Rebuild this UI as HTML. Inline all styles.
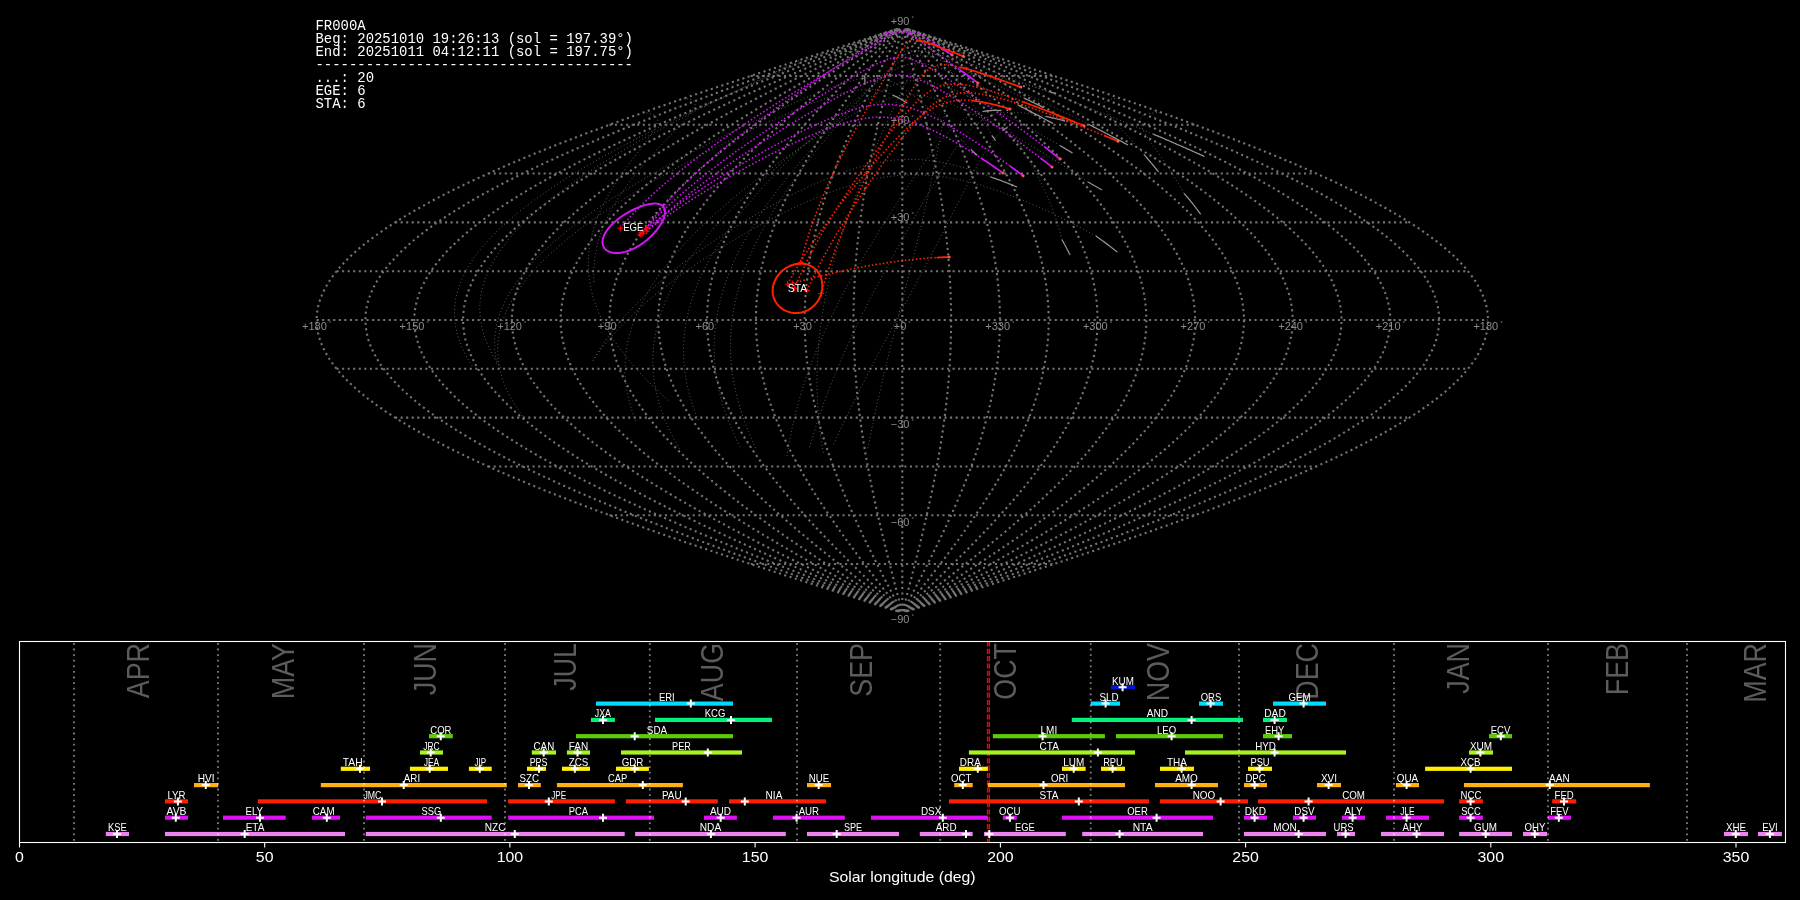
<!DOCTYPE html>
<html><head><meta charset="utf-8"><style>
html,body{margin:0;padding:0;background:#000;width:1800px;height:900px;overflow:hidden}
svg{display:block;will-change:transform}
</style></head><body>
<svg width="1800" height="900" viewBox="0 0 1800 900">
<rect width="1800" height="900" fill="#000"/>
<path d="M907.4 611.2 912.5 609.6 922.7 606.4 933.0 603.1 943.2 599.8 953.3 596.6 963.5 593.3 983.8 586.8 1004.0 580.3 1024.1 573.8 1044.0 567.3 1063.7 560.8 1083.3 554.3 1102.6 547.8 1121.7 541.3 1140.5 534.8 1159.1 528.3 1177.3 521.7 1195.2 515.2 1212.7 508.7 1229.8 502.2 1246.6 495.7 1262.9 489.2 1278.8 482.7 1294.2 476.2 1309.2 469.7 1323.6 463.2 1337.6 456.7 1351.0 450.2 1363.9 443.7 1376.2 437.1 1387.9 430.6 1399.0 424.1 1409.5 417.6 1419.5 411.1 1428.7 404.6 1437.4 398.1 1445.4 391.6 1452.7 385.1 1459.4 378.6 1465.3 372.1 1470.6 365.6 1475.2 359.0 1479.1 352.5 1482.3 346.0 1484.8 339.5 1486.6 333.0 1487.7 326.5 1488.0 320.0 1487.7 313.5 1486.6 307.0 1484.8 300.5 1482.3 294.0 1479.1 287.5 1475.2 281.0 1470.6 274.4 1465.3 267.9 1459.4 261.4 1452.7 254.9 1445.4 248.4 1437.4 241.9 1428.7 235.4 1419.5 228.9 1409.5 222.4 1399.0 215.9 1387.9 209.4 1376.2 202.9 1363.9 196.3 1351.0 189.8 1337.6 183.3 1323.6 176.8 1309.2 170.3 1294.2 163.8 1278.8 157.3 1262.9 150.8 1246.6 144.3 1229.8 137.8 1212.7 131.3 1195.2 124.8 1177.3 118.3 1159.1 111.7 1140.5 105.2 1121.7 98.7 1102.6 92.2 1083.3 85.7 1063.7 79.2 1044.0 72.7 1024.1 66.2 1004.0 59.7 983.8 53.2 963.5 46.7 953.3 43.4 943.2 40.2 933.0 36.9 922.7 33.6 912.5 30.4 907.4 28.8 M907.0 611.2 911.7 609.6 921.0 606.4 930.4 603.1 939.8 599.8 949.1 596.6 958.4 593.3 977.0 586.8 995.5 580.3 1013.9 573.8 1032.2 567.3 1050.3 560.8 1068.2 554.3 1085.9 547.8 1103.4 541.3 1120.7 534.8 1137.7 528.3 1154.4 521.7 1170.8 515.2 1186.8 508.7 1202.5 502.2 1217.9 495.7 1232.9 489.2 1247.4 482.7 1261.6 476.2 1275.3 469.7 1288.5 463.2 1301.3 456.7 1313.6 450.2 1325.4 443.7 1336.7 437.1 1347.4 430.6 1357.6 424.1 1367.3 417.6 1376.4 411.1 1384.9 404.6 1392.8 398.1 1400.1 391.6 1406.8 385.1 1412.9 378.6 1418.4 372.1 1423.3 365.6 1427.5 359.0 1431.1 352.5 1434.0 346.0 1436.3 339.5 1437.9 333.0 1438.9 326.5 1439.2 320.0 1438.9 313.5 1437.9 307.0 1436.3 300.5 1434.0 294.0 1431.1 287.5 1427.5 281.0 1423.3 274.4 1418.4 267.9 1412.9 261.4 1406.8 254.9 1400.1 248.4 1392.8 241.9 1384.9 235.4 1376.4 228.9 1367.3 222.4 1357.6 215.9 1347.4 209.4 1336.7 202.9 1325.4 196.3 1313.6 189.8 1301.3 183.3 1288.5 176.8 1275.3 170.3 1261.6 163.8 1247.4 157.3 1232.9 150.8 1217.9 144.3 1202.5 137.8 1186.8 131.3 1170.8 124.8 1154.4 118.3 1137.7 111.7 1120.7 105.2 1103.4 98.7 1085.9 92.2 1068.2 85.7 1050.3 79.2 1032.2 72.7 1013.9 66.2 995.5 59.7 977.0 53.2 958.4 46.7 949.1 43.4 939.8 40.2 930.4 36.9 921.0 33.6 911.7 30.4 907.0 28.8 M906.6 611.2 910.8 609.6 919.3 606.4 927.8 603.1 936.3 599.8 944.8 596.6 953.3 593.3 970.2 586.8 987.1 580.3 1003.8 573.8 1020.4 567.3 1036.8 560.8 1053.1 554.3 1069.2 547.8 1085.1 541.3 1100.8 534.8 1116.3 528.3 1131.4 521.7 1146.3 515.2 1161.0 508.7 1175.2 502.2 1189.2 495.7 1202.8 489.2 1216.0 482.7 1228.9 476.2 1241.4 469.7 1253.4 463.2 1265.0 456.7 1276.2 450.2 1286.9 443.7 1297.2 437.1 1307.0 430.6 1316.2 424.1 1325.0 417.6 1333.3 411.1 1341.0 404.6 1348.2 398.1 1354.9 391.6 1361.0 385.1 1366.5 378.6 1371.5 372.1 1375.9 365.6 1379.7 359.0 1383.0 352.5 1385.6 346.0 1387.7 339.5 1389.2 333.0 1390.1 326.5 1390.4 320.0 1390.1 313.5 1389.2 307.0 1387.7 300.5 1385.6 294.0 1383.0 287.5 1379.7 281.0 1375.9 274.4 1371.5 267.9 1366.5 261.4 1361.0 254.9 1354.9 248.4 1348.2 241.9 1341.0 235.4 1333.3 228.9 1325.0 222.4 1316.2 215.9 1307.0 209.4 1297.2 202.9 1286.9 196.3 1276.2 189.8 1265.0 183.3 1253.4 176.8 1241.4 170.3 1228.9 163.8 1216.0 157.3 1202.8 150.8 1189.2 144.3 1175.2 137.8 1161.0 131.3 1146.3 124.8 1131.4 118.3 1116.3 111.7 1100.8 105.2 1085.1 98.7 1069.2 92.2 1053.1 85.7 1036.8 79.2 1020.4 72.7 1003.8 66.2 987.1 59.7 970.2 53.2 953.3 46.7 944.8 43.4 936.3 40.2 927.8 36.9 919.3 33.6 910.8 30.4 906.6 28.8 M906.1 611.2 910.0 609.6 917.6 606.4 925.3 603.1 932.9 599.8 940.6 596.6 948.2 593.3 963.4 586.8 978.6 580.3 993.6 573.8 1008.6 567.3 1023.4 560.8 1038.0 554.3 1052.5 547.8 1066.9 541.3 1081.0 534.8 1094.9 528.3 1108.5 521.7 1121.9 515.2 1135.1 508.7 1147.9 502.2 1160.5 495.7 1172.8 489.2 1184.7 482.7 1196.2 476.2 1207.5 469.7 1218.3 463.2 1228.8 456.7 1238.8 450.2 1248.5 443.7 1257.7 437.1 1266.5 430.6 1274.8 424.1 1282.7 417.6 1290.2 411.1 1297.1 404.6 1303.6 398.1 1309.6 391.6 1315.1 385.1 1320.1 378.6 1324.6 372.1 1328.5 365.6 1332.0 359.0 1334.9 352.5 1337.3 346.0 1339.2 339.5 1340.5 333.0 1341.3 326.5 1341.6 320.0 1341.3 313.5 1340.5 307.0 1339.2 300.5 1337.3 294.0 1334.9 287.5 1332.0 281.0 1328.5 274.4 1324.6 267.9 1320.1 261.4 1315.1 254.9 1309.6 248.4 1303.6 241.9 1297.1 235.4 1290.2 228.9 1282.7 222.4 1274.8 215.9 1266.5 209.4 1257.7 202.9 1248.5 196.3 1238.8 189.8 1228.8 183.3 1218.3 176.8 1207.5 170.3 1196.2 163.8 1184.7 157.3 1172.8 150.8 1160.5 144.3 1147.9 137.8 1135.1 131.3 1121.9 124.8 1108.5 118.3 1094.9 111.7 1081.0 105.2 1066.9 98.7 1052.5 92.2 1038.0 85.7 1023.4 79.2 1008.6 72.7 993.6 66.2 978.6 59.7 963.4 53.2 948.2 46.7 940.6 43.4 932.9 40.2 925.3 36.9 917.6 33.6 910.0 30.4 906.1 28.8 M905.7 611.2 909.1 609.6 915.9 606.4 922.7 603.1 929.5 599.8 936.3 596.6 943.1 593.3 956.6 586.8 970.1 580.3 983.5 573.8 996.8 567.3 1009.9 560.8 1023.0 554.3 1035.9 547.8 1048.6 541.3 1061.1 534.8 1073.5 528.3 1085.6 521.7 1097.5 515.2 1109.2 508.7 1120.7 502.2 1131.8 495.7 1142.7 489.2 1153.3 482.7 1163.6 476.2 1173.6 469.7 1183.2 463.2 1192.5 456.7 1201.4 450.2 1210.0 443.7 1218.2 437.1 1226.0 430.6 1233.4 424.1 1240.5 417.6 1247.1 411.1 1253.3 404.6 1259.0 398.1 1264.3 391.6 1269.2 385.1 1273.7 378.6 1277.7 372.1 1281.2 365.6 1284.2 359.0 1286.8 352.5 1289.0 346.0 1290.6 339.5 1291.8 333.0 1292.5 326.5 1292.8 320.0 1292.5 313.5 1291.8 307.0 1290.6 300.5 1289.0 294.0 1286.8 287.5 1284.2 281.0 1281.2 274.4 1277.7 267.9 1273.7 261.4 1269.2 254.9 1264.3 248.4 1259.0 241.9 1253.3 235.4 1247.1 228.9 1240.5 222.4 1233.4 215.9 1226.0 209.4 1218.2 202.9 1210.0 196.3 1201.4 189.8 1192.5 183.3 1183.2 176.8 1173.6 170.3 1163.6 163.8 1153.3 157.3 1142.7 150.8 1131.8 144.3 1120.7 137.8 1109.2 131.3 1097.5 124.8 1085.6 118.3 1073.5 111.7 1061.1 105.2 1048.6 98.7 1035.9 92.2 1023.0 85.7 1009.9 79.2 996.8 72.7 983.5 66.2 970.1 59.7 956.6 53.2 943.1 46.7 936.3 43.4 929.5 40.2 922.7 36.9 915.9 33.6 909.1 30.4 905.7 28.8 M905.3 611.2 908.3 609.6 914.2 606.4 920.2 603.1 926.1 599.8 932.1 596.6 938.0 593.3 949.9 586.8 961.6 580.3 973.3 573.8 985.0 567.3 996.5 560.8 1007.9 554.3 1019.2 547.8 1030.3 541.3 1041.3 534.8 1052.1 528.3 1062.7 521.7 1073.1 515.2 1083.4 508.7 1093.4 502.2 1103.1 495.7 1112.7 489.2 1121.9 482.7 1130.9 476.2 1139.6 469.7 1148.1 463.2 1156.2 456.7 1164.0 450.2 1171.5 443.7 1178.7 437.1 1185.6 430.6 1192.1 424.1 1198.2 417.6 1204.0 411.1 1209.4 404.6 1214.4 398.1 1219.1 391.6 1223.4 385.1 1227.2 378.6 1230.7 372.1 1233.8 365.6 1236.5 359.0 1238.8 352.5 1240.6 346.0 1242.1 339.5 1243.1 333.0 1243.8 326.5 1244.0 320.0 1243.8 313.5 1243.1 307.0 1242.1 300.5 1240.6 294.0 1238.8 287.5 1236.5 281.0 1233.8 274.4 1230.7 267.9 1227.2 261.4 1223.4 254.9 1219.1 248.4 1214.4 241.9 1209.4 235.4 1204.0 228.9 1198.2 222.4 1192.1 215.9 1185.6 209.4 1178.7 202.9 1171.5 196.3 1164.0 189.8 1156.2 183.3 1148.1 176.8 1139.6 170.3 1130.9 163.8 1121.9 157.3 1112.7 150.8 1103.1 144.3 1093.4 137.8 1083.4 131.3 1073.1 124.8 1062.7 118.3 1052.1 111.7 1041.3 105.2 1030.3 98.7 1019.2 92.2 1007.9 85.7 996.5 79.2 985.0 72.7 973.3 66.2 961.6 59.7 949.9 53.2 938.0 46.7 932.1 43.4 926.1 40.2 920.2 36.9 914.2 33.6 908.3 30.4 905.3 28.8 M904.9 611.2 907.4 609.6 912.5 606.4 917.6 603.1 922.7 599.8 927.8 596.6 932.9 593.3 943.1 586.8 953.2 580.3 963.2 573.8 973.1 567.3 983.0 560.8 992.8 554.3 1002.5 547.8 1012.0 541.3 1021.4 534.8 1030.7 528.3 1039.8 521.7 1048.7 515.2 1057.5 508.7 1066.1 502.2 1074.4 495.7 1082.6 489.2 1090.5 482.7 1098.3 476.2 1105.7 469.7 1113.0 463.2 1119.9 456.7 1126.6 450.2 1133.1 443.7 1139.2 437.1 1145.1 430.6 1150.7 424.1 1155.9 417.6 1160.9 411.1 1165.5 404.6 1169.8 398.1 1173.8 391.6 1177.5 385.1 1180.8 378.6 1183.8 372.1 1186.5 365.6 1188.8 359.0 1190.7 352.5 1192.3 346.0 1193.6 339.5 1194.4 333.0 1195.0 326.5 1195.2 320.0 1195.0 313.5 1194.4 307.0 1193.6 300.5 1192.3 294.0 1190.7 287.5 1188.8 281.0 1186.5 274.4 1183.8 267.9 1180.8 261.4 1177.5 254.9 1173.8 248.4 1169.8 241.9 1165.5 235.4 1160.9 228.9 1155.9 222.4 1150.7 215.9 1145.1 209.4 1139.2 202.9 1133.1 196.3 1126.6 189.8 1119.9 183.3 1113.0 176.8 1105.7 170.3 1098.3 163.8 1090.5 157.3 1082.6 150.8 1074.4 144.3 1066.1 137.8 1057.5 131.3 1048.7 124.8 1039.8 118.3 1030.7 111.7 1021.4 105.2 1012.0 98.7 1002.5 92.2 992.8 85.7 983.0 79.2 973.1 72.7 963.2 66.2 953.2 59.7 943.1 53.2 932.9 46.7 927.8 43.4 922.7 40.2 917.6 36.9 912.5 33.6 907.4 30.4 904.9 28.8 M904.4 611.2 906.6 609.6 910.8 606.4 915.1 603.1 919.3 599.8 923.6 596.6 927.8 593.3 936.3 586.8 944.7 580.3 953.0 573.8 961.3 567.3 969.6 560.8 977.7 554.3 985.8 547.8 993.7 541.3 1001.6 534.8 1009.3 528.3 1016.9 521.7 1024.3 515.2 1031.6 508.7 1038.8 502.2 1045.7 495.7 1052.6 489.2 1059.2 482.7 1065.6 476.2 1071.8 469.7 1077.9 463.2 1083.7 456.7 1089.3 450.2 1094.6 443.7 1099.7 437.1 1104.6 430.6 1109.3 424.1 1113.7 417.6 1117.8 411.1 1121.7 404.6 1125.3 398.1 1128.6 391.6 1131.6 385.1 1134.4 378.6 1136.9 372.1 1139.1 365.6 1141.0 359.0 1142.6 352.5 1144.0 346.0 1145.0 339.5 1145.8 333.0 1146.2 326.5 1146.3 320.0 1146.2 313.5 1145.8 307.0 1145.0 300.5 1144.0 294.0 1142.6 287.5 1141.0 281.0 1139.1 274.4 1136.9 267.9 1134.4 261.4 1131.6 254.9 1128.6 248.4 1125.3 241.9 1121.7 235.4 1117.8 228.9 1113.7 222.4 1109.3 215.9 1104.6 209.4 1099.7 202.9 1094.6 196.3 1089.3 189.8 1083.7 183.3 1077.9 176.8 1071.8 170.3 1065.6 163.8 1059.2 157.3 1052.6 150.8 1045.7 144.3 1038.8 137.8 1031.6 131.3 1024.3 124.8 1016.9 118.3 1009.3 111.7 1001.6 105.2 993.7 98.7 985.8 92.2 977.7 85.7 969.6 79.2 961.3 72.7 953.0 66.2 944.7 59.7 936.3 53.2 927.8 46.7 923.6 43.4 919.3 40.2 915.1 36.9 910.8 33.6 906.6 30.4 904.4 28.8 M904.0 611.2 905.7 609.6 909.1 606.4 912.5 603.1 915.9 599.8 919.3 596.6 922.7 593.3 929.5 586.8 936.2 580.3 942.9 573.8 949.5 567.3 956.1 560.8 962.6 554.3 969.1 547.8 975.4 541.3 981.7 534.8 987.9 528.3 994.0 521.7 999.9 515.2 1005.8 508.7 1011.5 502.2 1017.1 495.7 1022.5 489.2 1027.8 482.7 1032.9 476.2 1037.9 469.7 1042.7 463.2 1047.4 456.7 1051.9 450.2 1056.2 443.7 1060.3 437.1 1064.2 430.6 1067.9 424.1 1071.4 417.6 1074.7 411.1 1077.8 404.6 1080.7 398.1 1083.3 391.6 1085.8 385.1 1088.0 378.6 1090.0 372.1 1091.7 365.6 1093.3 359.0 1094.6 352.5 1095.6 346.0 1096.5 339.5 1097.1 333.0 1097.4 326.5 1097.5 320.0 1097.4 313.5 1097.1 307.0 1096.5 300.5 1095.6 294.0 1094.6 287.5 1093.3 281.0 1091.7 274.4 1090.0 267.9 1088.0 261.4 1085.8 254.9 1083.3 248.4 1080.7 241.9 1077.8 235.4 1074.7 228.9 1071.4 222.4 1067.9 215.9 1064.2 209.4 1060.3 202.9 1056.2 196.3 1051.9 189.8 1047.4 183.3 1042.7 176.8 1037.9 170.3 1032.9 163.8 1027.8 157.3 1022.5 150.8 1017.1 144.3 1011.5 137.8 1005.8 131.3 999.9 124.8 994.0 118.3 987.9 111.7 981.7 105.2 975.4 98.7 969.1 92.2 962.6 85.7 956.1 79.2 949.5 72.7 942.9 66.2 936.2 59.7 929.5 53.2 922.7 46.7 919.3 43.4 915.9 40.2 912.5 36.9 909.1 33.6 905.7 30.4 904.0 28.8 M903.6 611.2 904.9 609.6 907.4 606.4 910.0 603.1 912.5 599.8 915.1 596.6 917.6 593.3 922.7 586.8 927.7 580.3 932.7 573.8 937.7 567.3 942.7 560.8 947.5 554.3 952.4 547.8 957.2 541.3 961.9 534.8 966.5 528.3 971.0 521.7 975.5 515.2 979.9 508.7 984.2 502.2 988.4 495.7 992.5 489.2 996.4 482.7 1000.3 476.2 1004.0 469.7 1007.6 463.2 1011.1 456.7 1014.5 450.2 1017.7 443.7 1020.8 437.1 1023.7 430.6 1026.5 424.1 1029.1 417.6 1031.6 411.1 1033.9 404.6 1036.1 398.1 1038.1 391.6 1039.9 385.1 1041.6 378.6 1043.1 372.1 1044.4 365.6 1045.5 359.0 1046.5 352.5 1047.3 346.0 1047.9 339.5 1048.4 333.0 1048.6 326.5 1048.7 320.0 1048.6 313.5 1048.4 307.0 1047.9 300.5 1047.3 294.0 1046.5 287.5 1045.5 281.0 1044.4 274.4 1043.1 267.9 1041.6 261.4 1039.9 254.9 1038.1 248.4 1036.1 241.9 1033.9 235.4 1031.6 228.9 1029.1 222.4 1026.5 215.9 1023.7 209.4 1020.8 202.9 1017.7 196.3 1014.5 189.8 1011.1 183.3 1007.6 176.8 1004.0 170.3 1000.3 163.8 996.4 157.3 992.5 150.8 988.4 144.3 984.2 137.8 979.9 131.3 975.5 124.8 971.0 118.3 966.5 111.7 961.9 105.2 957.2 98.7 952.4 92.2 947.5 85.7 942.7 79.2 937.7 72.7 932.7 66.2 927.7 59.7 922.7 53.2 917.6 46.7 915.1 43.4 912.5 40.2 910.0 36.9 907.4 33.6 904.9 30.4 903.6 28.8 M903.2 611.2 904.0 609.6 905.7 606.4 907.4 603.1 909.1 599.8 910.8 596.6 912.5 593.3 915.9 586.8 919.3 580.3 922.6 573.8 925.9 567.3 929.2 560.8 932.5 554.3 935.7 547.8 938.9 541.3 942.0 534.8 945.1 528.3 948.1 521.7 951.1 515.2 954.0 508.7 956.9 502.2 959.7 495.7 962.4 489.2 965.0 482.7 967.6 476.2 970.1 469.7 972.5 463.2 974.8 456.7 977.1 450.2 979.2 443.7 981.3 437.1 983.2 430.6 985.1 424.1 986.8 417.6 988.5 411.1 990.0 404.6 991.5 398.1 992.8 391.6 994.0 385.1 995.1 378.6 996.1 372.1 997.0 365.6 997.8 359.0 998.4 352.5 999.0 346.0 999.4 339.5 999.7 333.0 999.9 326.5 999.9 320.0 999.9 313.5 999.7 307.0 999.4 300.5 999.0 294.0 998.4 287.5 997.8 281.0 997.0 274.4 996.1 267.9 995.1 261.4 994.0 254.9 992.8 248.4 991.5 241.9 990.0 235.4 988.5 228.9 986.8 222.4 985.1 215.9 983.2 209.4 981.3 202.9 979.2 196.3 977.1 189.8 974.8 183.3 972.5 176.8 970.1 170.3 967.6 163.8 965.0 157.3 962.4 150.8 959.7 144.3 956.9 137.8 954.0 131.3 951.1 124.8 948.1 118.3 945.1 111.7 942.0 105.2 938.9 98.7 935.7 92.2 932.5 85.7 929.2 79.2 925.9 72.7 922.6 66.2 919.3 59.7 915.9 53.2 912.5 46.7 910.8 43.4 909.1 40.2 907.4 36.9 905.7 33.6 904.0 30.4 903.2 28.8 M902.7 611.2 903.2 609.6 904.0 606.4 904.9 603.1 905.7 599.8 906.6 596.6 907.4 593.3 909.1 586.8 910.8 580.3 912.4 573.8 914.1 567.3 915.8 560.8 917.4 554.3 919.0 547.8 920.6 541.3 922.2 534.8 923.7 528.3 925.2 521.7 926.7 515.2 928.2 508.7 929.6 502.2 931.0 495.7 932.4 489.2 933.7 482.7 935.0 476.2 936.2 469.7 937.4 463.2 938.6 456.7 939.7 450.2 940.8 443.7 941.8 437.1 942.8 430.6 943.7 424.1 944.6 417.6 945.4 411.1 946.2 404.6 946.9 398.1 947.6 391.6 948.2 385.1 948.7 378.6 949.2 372.1 949.7 365.6 950.0 359.0 950.4 352.5 950.6 346.0 950.8 339.5 951.0 333.0 951.1 326.5 951.1 320.0 951.1 313.5 951.0 307.0 950.8 300.5 950.6 294.0 950.4 287.5 950.0 281.0 949.7 274.4 949.2 267.9 948.7 261.4 948.2 254.9 947.6 248.4 946.9 241.9 946.2 235.4 945.4 228.9 944.6 222.4 943.7 215.9 942.8 209.4 941.8 202.9 940.8 196.3 939.7 189.8 938.6 183.3 937.4 176.8 936.2 170.3 935.0 163.8 933.7 157.3 932.4 150.8 931.0 144.3 929.6 137.8 928.2 131.3 926.7 124.8 925.2 118.3 923.7 111.7 922.2 105.2 920.6 98.7 919.0 92.2 917.4 85.7 915.8 79.2 914.1 72.7 912.4 66.2 910.8 59.7 909.1 53.2 907.4 46.7 906.6 43.4 905.7 40.2 904.9 36.9 904.0 33.6 903.2 30.4 902.7 28.8 M902.3 611.2 902.3 609.6 902.3 606.4 902.3 603.1 902.3 599.8 902.3 596.6 902.3 593.3 902.3 586.8 902.3 580.3 902.3 573.8 902.3 567.3 902.3 560.8 902.3 554.3 902.3 547.8 902.3 541.3 902.3 534.8 902.3 528.3 902.3 521.7 902.3 515.2 902.3 508.7 902.3 502.2 902.3 495.7 902.3 489.2 902.3 482.7 902.3 476.2 902.3 469.7 902.3 463.2 902.3 456.7 902.3 450.2 902.3 443.7 902.3 437.1 902.3 430.6 902.3 424.1 902.3 417.6 902.3 411.1 902.3 404.6 902.3 398.1 902.3 391.6 902.3 385.1 902.3 378.6 902.3 372.1 902.3 365.6 902.3 359.0 902.3 352.5 902.3 346.0 902.3 339.5 902.3 333.0 902.3 326.5 902.3 320.0 902.3 313.5 902.3 307.0 902.3 300.5 902.3 294.0 902.3 287.5 902.3 281.0 902.3 274.4 902.3 267.9 902.3 261.4 902.3 254.9 902.3 248.4 902.3 241.9 902.3 235.4 902.3 228.9 902.3 222.4 902.3 215.9 902.3 209.4 902.3 202.9 902.3 196.3 902.3 189.8 902.3 183.3 902.3 176.8 902.3 170.3 902.3 163.8 902.3 157.3 902.3 150.8 902.3 144.3 902.3 137.8 902.3 131.3 902.3 124.8 902.3 118.3 902.3 111.7 902.3 105.2 902.3 98.7 902.3 92.2 902.3 85.7 902.3 79.2 902.3 72.7 902.3 66.2 902.3 59.7 902.3 53.2 902.3 46.7 902.3 43.4 902.3 40.2 902.3 36.9 902.3 33.6 902.3 30.4 902.3 28.8 M901.9 611.2 901.4 609.6 900.6 606.4 899.7 603.1 898.9 599.8 898.0 596.6 897.2 593.3 895.5 586.8 893.8 580.3 892.2 573.8 890.5 567.3 888.8 560.8 887.2 554.3 885.6 547.8 884.0 541.3 882.4 534.8 880.9 528.3 879.4 521.7 877.9 515.2 876.4 508.7 875.0 502.2 873.6 495.7 872.2 489.2 870.9 482.7 869.6 476.2 868.4 469.7 867.2 463.2 866.0 456.7 864.9 450.2 863.8 443.7 862.8 437.1 861.8 430.6 860.9 424.1 860.0 417.6 859.2 411.1 858.4 404.6 857.7 398.1 857.0 391.6 856.4 385.1 855.9 378.6 855.4 372.1 854.9 365.6 854.6 359.0 854.2 352.5 854.0 346.0 853.8 339.5 853.6 333.0 853.5 326.5 853.5 320.0 853.5 313.5 853.6 307.0 853.8 300.5 854.0 294.0 854.2 287.5 854.6 281.0 854.9 274.4 855.4 267.9 855.9 261.4 856.4 254.9 857.0 248.4 857.7 241.9 858.4 235.4 859.2 228.9 860.0 222.4 860.9 215.9 861.8 209.4 862.8 202.9 863.8 196.3 864.9 189.8 866.0 183.3 867.2 176.8 868.4 170.3 869.6 163.8 870.9 157.3 872.2 150.8 873.6 144.3 875.0 137.8 876.4 131.3 877.9 124.8 879.4 118.3 880.9 111.7 882.4 105.2 884.0 98.7 885.6 92.2 887.2 85.7 888.8 79.2 890.5 72.7 892.2 66.2 893.8 59.7 895.5 53.2 897.2 46.7 898.0 43.4 898.9 40.2 899.7 36.9 900.6 33.6 901.4 30.4 901.9 28.8 M901.4 611.2 900.6 609.6 898.9 606.4 897.2 603.1 895.5 599.8 893.8 596.6 892.1 593.3 888.7 586.8 885.3 580.3 882.0 573.8 878.7 567.3 875.4 560.8 872.1 554.3 868.9 547.8 865.7 541.3 862.6 534.8 859.5 528.3 856.5 521.7 853.5 515.2 850.6 508.7 847.7 502.2 844.9 495.7 842.2 489.2 839.6 482.7 837.0 476.2 834.5 469.7 832.1 463.2 829.8 456.7 827.5 450.2 825.4 443.7 823.3 437.1 821.4 430.6 819.5 424.1 817.8 417.6 816.1 411.1 814.6 404.6 813.1 398.1 811.8 391.6 810.6 385.1 809.5 378.6 808.5 372.1 807.6 365.6 806.8 359.0 806.2 352.5 805.6 346.0 805.2 339.5 804.9 333.0 804.7 326.5 804.7 320.0 804.7 313.5 804.9 307.0 805.2 300.5 805.6 294.0 806.2 287.5 806.8 281.0 807.6 274.4 808.5 267.9 809.5 261.4 810.6 254.9 811.8 248.4 813.1 241.9 814.6 235.4 816.1 228.9 817.8 222.4 819.5 215.9 821.4 209.4 823.3 202.9 825.4 196.3 827.5 189.8 829.8 183.3 832.1 176.8 834.5 170.3 837.0 163.8 839.6 157.3 842.2 150.8 844.9 144.3 847.7 137.8 850.6 131.3 853.5 124.8 856.5 118.3 859.5 111.7 862.6 105.2 865.7 98.7 868.9 92.2 872.1 85.7 875.4 79.2 878.7 72.7 882.0 66.2 885.3 59.7 888.7 53.2 892.1 46.7 893.8 43.4 895.5 40.2 897.2 36.9 898.9 33.6 900.6 30.4 901.4 28.8 M901.0 611.2 899.7 609.6 897.2 606.4 894.6 603.1 892.1 599.8 889.5 596.6 887.0 593.3 881.9 586.8 876.9 580.3 871.9 573.8 866.9 567.3 861.9 560.8 857.1 554.3 852.2 547.8 847.4 541.3 842.7 534.8 838.1 528.3 833.6 521.7 829.1 515.2 824.7 508.7 820.4 502.2 816.2 495.7 812.1 489.2 808.2 482.7 804.3 476.2 800.6 469.7 797.0 463.2 793.5 456.7 790.1 450.2 786.9 443.7 783.8 437.1 780.9 430.6 778.1 424.1 775.5 417.6 773.0 411.1 770.7 404.6 768.5 398.1 766.5 391.6 764.7 385.1 763.0 378.6 761.5 372.1 760.2 365.6 759.1 359.0 758.1 352.5 757.3 346.0 756.7 339.5 756.2 333.0 756.0 326.5 755.9 320.0 756.0 313.5 756.2 307.0 756.7 300.5 757.3 294.0 758.1 287.5 759.1 281.0 760.2 274.4 761.5 267.9 763.0 261.4 764.7 254.9 766.5 248.4 768.5 241.9 770.7 235.4 773.0 228.9 775.5 222.4 778.1 215.9 780.9 209.4 783.8 202.9 786.9 196.3 790.1 189.8 793.5 183.3 797.0 176.8 800.6 170.3 804.3 163.8 808.2 157.3 812.1 150.8 816.2 144.3 820.4 137.8 824.7 131.3 829.1 124.8 833.6 118.3 838.1 111.7 842.7 105.2 847.4 98.7 852.2 92.2 857.1 85.7 861.9 79.2 866.9 72.7 871.9 66.2 876.9 59.7 881.9 53.2 887.0 46.7 889.5 43.4 892.1 40.2 894.6 36.9 897.2 33.6 899.7 30.4 901.0 28.8 M900.6 611.2 898.9 609.6 895.5 606.4 892.1 603.1 888.7 599.8 885.3 596.6 881.9 593.3 875.1 586.8 868.4 580.3 861.7 573.8 855.1 567.3 848.5 560.8 842.0 554.3 835.5 547.8 829.2 541.3 822.9 534.8 816.7 528.3 810.6 521.7 804.7 515.2 798.8 508.7 793.1 502.2 787.5 495.7 782.1 489.2 776.8 482.7 771.7 476.2 766.7 469.7 761.9 463.2 757.2 456.7 752.7 450.2 748.4 443.7 744.3 437.1 740.4 430.6 736.7 424.1 733.2 417.6 729.9 411.1 726.8 404.6 723.9 398.1 721.3 391.6 718.8 385.1 716.6 378.6 714.6 372.1 712.9 365.6 711.3 359.0 710.0 352.5 709.0 346.0 708.1 339.5 707.5 333.0 707.2 326.5 707.1 320.0 707.2 313.5 707.5 307.0 708.1 300.5 709.0 294.0 710.0 287.5 711.3 281.0 712.9 274.4 714.6 267.9 716.6 261.4 718.8 254.9 721.3 248.4 723.9 241.9 726.8 235.4 729.9 228.9 733.2 222.4 736.7 215.9 740.4 209.4 744.3 202.9 748.4 196.3 752.7 189.8 757.2 183.3 761.9 176.8 766.7 170.3 771.7 163.8 776.8 157.3 782.1 150.8 787.5 144.3 793.1 137.8 798.8 131.3 804.7 124.8 810.6 118.3 816.7 111.7 822.9 105.2 829.2 98.7 835.5 92.2 842.0 85.7 848.5 79.2 855.1 72.7 861.7 66.2 868.4 59.7 875.1 53.2 881.9 46.7 885.3 43.4 888.7 40.2 892.1 36.9 895.5 33.6 898.9 30.4 900.6 28.8 M900.2 611.2 898.0 609.6 893.8 606.4 889.5 603.1 885.3 599.8 881.0 596.6 876.8 593.3 868.3 586.8 859.9 580.3 851.6 573.8 843.3 567.3 835.0 560.8 826.9 554.3 818.8 547.8 810.9 541.3 803.0 534.8 795.3 528.3 787.7 521.7 780.3 515.2 773.0 508.7 765.8 502.2 758.9 495.7 752.0 489.2 745.4 482.7 739.0 476.2 732.8 469.7 726.7 463.2 720.9 456.7 715.3 450.2 710.0 443.7 704.9 437.1 700.0 430.6 695.3 424.1 690.9 417.6 686.8 411.1 682.9 404.6 679.3 398.1 676.0 391.6 673.0 385.1 670.2 378.6 667.7 372.1 665.5 365.6 663.6 359.0 662.0 352.5 660.6 346.0 659.6 339.5 658.8 333.0 658.4 326.5 658.2 320.0 658.4 313.5 658.8 307.0 659.6 300.5 660.6 294.0 662.0 287.5 663.6 281.0 665.5 274.4 667.7 267.9 670.2 261.4 673.0 254.9 676.0 248.4 679.3 241.9 682.9 235.4 686.8 228.9 690.9 222.4 695.3 215.9 700.0 209.4 704.9 202.9 710.0 196.3 715.3 189.8 720.9 183.3 726.7 176.8 732.8 170.3 739.0 163.8 745.4 157.3 752.0 150.8 758.9 144.3 765.8 137.8 773.0 131.3 780.3 124.8 787.7 118.3 795.3 111.7 803.0 105.2 810.9 98.7 818.8 92.2 826.9 85.7 835.0 79.2 843.3 72.7 851.6 66.2 859.9 59.7 868.3 53.2 876.8 46.7 881.0 43.4 885.3 40.2 889.5 36.9 893.8 33.6 898.0 30.4 900.2 28.8 M899.7 611.2 897.2 609.6 892.1 606.4 887.0 603.1 881.9 599.8 876.8 596.6 871.7 593.3 861.5 586.8 851.4 580.3 841.4 573.8 831.5 567.3 821.6 560.8 811.8 554.3 802.1 547.8 792.6 541.3 783.2 534.8 773.9 528.3 764.8 521.7 755.9 515.2 747.1 508.7 738.5 502.2 730.2 495.7 722.0 489.2 714.1 482.7 706.3 476.2 698.9 469.7 691.6 463.2 684.7 456.7 678.0 450.2 671.5 443.7 665.4 437.1 659.5 430.6 653.9 424.1 648.7 417.6 643.7 411.1 639.1 404.6 634.8 398.1 630.8 391.6 627.1 385.1 623.8 378.6 620.8 372.1 618.1 365.6 615.8 359.0 613.9 352.5 612.3 346.0 611.0 339.5 610.2 333.0 609.6 326.5 609.4 320.0 609.6 313.5 610.2 307.0 611.0 300.5 612.3 294.0 613.9 287.5 615.8 281.0 618.1 274.4 620.8 267.9 623.8 261.4 627.1 254.9 630.8 248.4 634.8 241.9 639.1 235.4 643.7 228.9 648.7 222.4 653.9 215.9 659.5 209.4 665.4 202.9 671.5 196.3 678.0 189.8 684.7 183.3 691.6 176.8 698.9 170.3 706.3 163.8 714.1 157.3 722.0 150.8 730.2 144.3 738.5 137.8 747.1 131.3 755.9 124.8 764.8 118.3 773.9 111.7 783.2 105.2 792.6 98.7 802.1 92.2 811.8 85.7 821.6 79.2 831.5 72.7 841.4 66.2 851.4 59.7 861.5 53.2 871.7 46.7 876.8 43.4 881.9 40.2 887.0 36.9 892.1 33.6 897.2 30.4 899.7 28.8 M899.3 611.2 896.3 609.6 890.4 606.4 884.4 603.1 878.5 599.8 872.5 596.6 866.6 593.3 854.7 586.8 843.0 580.3 831.3 573.8 819.6 567.3 808.1 560.8 796.7 554.3 785.4 547.8 774.3 541.3 763.3 534.8 752.5 528.3 741.9 521.7 731.5 515.2 721.2 508.7 711.2 502.2 701.5 495.7 691.9 489.2 682.7 482.7 673.7 476.2 665.0 469.7 656.5 463.2 648.4 456.7 640.6 450.2 633.1 443.7 625.9 437.1 619.0 430.6 612.5 424.1 606.4 417.6 600.6 411.1 595.2 404.6 590.2 398.1 585.5 391.6 581.2 385.1 577.4 378.6 573.9 372.1 570.8 365.6 568.1 359.0 565.8 352.5 564.0 346.0 562.5 339.5 561.5 333.0 560.8 326.5 560.6 320.0 560.8 313.5 561.5 307.0 562.5 300.5 564.0 294.0 565.8 287.5 568.1 281.0 570.8 274.4 573.9 267.9 577.4 261.4 581.2 254.9 585.5 248.4 590.2 241.9 595.2 235.4 600.6 228.9 606.4 222.4 612.5 215.9 619.0 209.4 625.9 202.9 633.1 196.3 640.6 189.8 648.4 183.3 656.5 176.8 665.0 170.3 673.7 163.8 682.7 157.3 691.9 150.8 701.5 144.3 711.2 137.8 721.2 131.3 731.5 124.8 741.9 118.3 752.5 111.7 763.3 105.2 774.3 98.7 785.4 92.2 796.7 85.7 808.1 79.2 819.6 72.7 831.3 66.2 843.0 59.7 854.7 53.2 866.6 46.7 872.5 43.4 878.5 40.2 884.4 36.9 890.4 33.6 896.3 30.4 899.3 28.8 M898.9 611.2 895.5 609.6 888.7 606.4 881.9 603.1 875.1 599.8 868.3 596.6 861.5 593.3 848.0 586.8 834.5 580.3 821.1 573.8 807.8 567.3 794.7 560.8 781.6 554.3 768.7 547.8 756.0 541.3 743.5 534.8 731.1 528.3 719.0 521.7 707.1 515.2 695.4 508.7 683.9 502.2 672.8 495.7 661.9 489.2 651.3 482.7 641.0 476.2 631.0 469.7 621.4 463.2 612.1 456.7 603.2 450.2 594.6 443.7 586.4 437.1 578.6 430.6 571.2 424.1 564.1 417.6 557.5 411.1 551.3 404.6 545.6 398.1 540.3 391.6 535.4 385.1 530.9 378.6 526.9 372.1 523.4 365.6 520.4 359.0 517.8 352.5 515.6 346.0 514.0 339.5 512.8 333.0 512.1 326.5 511.8 320.0 512.1 313.5 512.8 307.0 514.0 300.5 515.6 294.0 517.8 287.5 520.4 281.0 523.4 274.4 526.9 267.9 530.9 261.4 535.4 254.9 540.3 248.4 545.6 241.9 551.3 235.4 557.5 228.9 564.1 222.4 571.2 215.9 578.6 209.4 586.4 202.9 594.6 196.3 603.2 189.8 612.1 183.3 621.4 176.8 631.0 170.3 641.0 163.8 651.3 157.3 661.9 150.8 672.8 144.3 683.9 137.8 695.4 131.3 707.1 124.8 719.0 118.3 731.1 111.7 743.5 105.2 756.0 98.7 768.7 92.2 781.6 85.7 794.7 79.2 807.8 72.7 821.1 66.2 834.5 59.7 848.0 53.2 861.5 46.7 868.3 43.4 875.1 40.2 881.9 36.9 888.7 33.6 895.5 30.4 898.9 28.8 M898.5 611.2 894.6 609.6 887.0 606.4 879.3 603.1 871.7 599.8 864.0 596.6 856.4 593.3 841.2 586.8 826.0 580.3 811.0 573.8 796.0 567.3 781.2 560.8 766.6 554.3 752.1 547.8 737.7 541.3 723.6 534.8 709.7 528.3 696.1 521.7 682.7 515.2 669.5 508.7 656.7 502.2 644.1 495.7 631.8 489.2 619.9 482.7 608.4 476.2 597.1 469.7 586.3 463.2 575.8 456.7 565.8 450.2 556.1 443.7 546.9 437.1 538.1 430.6 529.8 424.1 521.9 417.6 514.4 411.1 507.5 404.6 501.0 398.1 495.0 391.6 489.5 385.1 484.5 378.6 480.0 372.1 476.1 365.6 472.6 359.0 469.7 352.5 467.3 346.0 465.4 339.5 464.1 333.0 463.3 326.5 463.0 320.0 463.3 313.5 464.1 307.0 465.4 300.5 467.3 294.0 469.7 287.5 472.6 281.0 476.1 274.4 480.0 267.9 484.5 261.4 489.5 254.9 495.0 248.4 501.0 241.9 507.5 235.4 514.4 228.9 521.9 222.4 529.8 215.9 538.1 209.4 546.9 202.9 556.1 196.3 565.8 189.8 575.8 183.3 586.3 176.8 597.1 170.3 608.4 163.8 619.9 157.3 631.8 150.8 644.1 144.3 656.7 137.8 669.5 131.3 682.7 124.8 696.1 118.3 709.7 111.7 723.6 105.2 737.7 98.7 752.1 92.2 766.6 85.7 781.2 79.2 796.0 72.7 811.0 66.2 826.0 59.7 841.2 53.2 856.4 46.7 864.0 43.4 871.7 40.2 879.3 36.9 887.0 33.6 894.6 30.4 898.5 28.8 M898.0 611.2 893.8 609.6 885.3 606.4 876.8 603.1 868.3 599.8 859.8 596.6 851.3 593.3 834.4 586.8 817.5 580.3 800.8 573.8 784.2 567.3 767.8 560.8 751.5 554.3 735.4 547.8 719.5 541.3 703.8 534.8 688.3 528.3 673.2 521.7 658.2 515.2 643.6 508.7 629.4 502.2 615.4 495.7 601.8 489.2 588.6 482.7 575.7 476.2 563.2 469.7 551.2 463.2 539.6 456.7 528.4 450.2 517.7 443.7 507.4 437.1 497.6 430.6 488.4 424.1 479.6 417.6 471.3 411.1 463.6 404.6 456.4 398.1 449.7 391.6 443.6 385.1 438.1 378.6 433.1 372.1 428.7 365.6 424.9 359.0 421.6 352.5 419.0 346.0 416.9 339.5 415.4 333.0 414.5 326.5 414.2 320.0 414.5 313.5 415.4 307.0 416.9 300.5 419.0 294.0 421.6 287.5 424.9 281.0 428.7 274.4 433.1 267.9 438.1 261.4 443.6 254.9 449.7 248.4 456.4 241.9 463.6 235.4 471.3 228.9 479.6 222.4 488.4 215.9 497.6 209.4 507.4 202.9 517.7 196.3 528.4 189.8 539.6 183.3 551.2 176.8 563.2 170.3 575.7 163.8 588.6 157.3 601.8 150.8 615.4 144.3 629.4 137.8 643.6 131.3 658.2 124.8 673.2 118.3 688.3 111.7 703.8 105.2 719.5 98.7 735.4 92.2 751.5 85.7 767.8 79.2 784.2 72.7 800.8 66.2 817.5 59.7 834.4 53.2 851.3 46.7 859.8 43.4 868.3 40.2 876.8 36.9 885.3 33.6 893.8 30.4 898.0 28.8 M897.6 611.2 892.9 609.6 883.6 606.4 874.2 603.1 864.8 599.8 855.5 596.6 846.2 593.3 827.6 586.8 809.1 580.3 790.7 573.8 772.4 567.3 754.3 560.8 736.4 554.3 718.7 547.8 701.2 541.3 683.9 534.8 666.9 528.3 650.2 521.7 633.8 515.2 617.8 508.7 602.1 502.2 586.7 495.7 571.7 489.2 557.2 482.7 543.0 476.2 529.3 469.7 516.1 463.2 503.3 456.7 491.0 450.2 479.2 443.7 467.9 437.1 457.2 430.6 447.0 424.1 437.3 417.6 428.2 411.1 419.7 404.6 411.8 398.1 404.5 391.6 397.8 385.1 391.7 378.6 386.2 372.1 381.3 365.6 377.1 359.0 373.5 352.5 370.6 346.0 368.3 339.5 366.7 333.0 365.7 326.5 365.4 320.0 365.7 313.5 366.7 307.0 368.3 300.5 370.6 294.0 373.5 287.5 377.1 281.0 381.3 274.4 386.2 267.9 391.7 261.4 397.8 254.9 404.5 248.4 411.8 241.9 419.7 235.4 428.2 228.9 437.3 222.4 447.0 215.9 457.2 209.4 467.9 202.9 479.2 196.3 491.0 189.8 503.3 183.3 516.1 176.8 529.3 170.3 543.0 163.8 557.2 157.3 571.7 150.8 586.7 144.3 602.1 137.8 617.8 131.3 633.8 124.8 650.2 118.3 666.9 111.7 683.9 105.2 701.2 98.7 718.7 92.2 736.4 85.7 754.3 79.2 772.4 72.7 790.7 66.2 809.1 59.7 827.6 53.2 846.2 46.7 855.5 43.4 864.8 40.2 874.2 36.9 883.6 33.6 892.9 30.4 897.6 28.8 M897.2 611.2 892.1 609.6 881.9 606.4 871.6 603.1 861.4 599.8 851.3 596.6 841.1 593.3 820.8 586.8 800.6 580.3 780.5 573.8 760.6 567.3 740.9 560.8 721.3 554.3 702.0 547.8 682.9 541.3 664.1 534.8 645.5 528.3 627.3 521.7 609.4 515.2 591.9 508.7 574.8 502.2 558.0 495.7 541.7 489.2 525.8 482.7 510.4 476.2 495.4 469.7 481.0 463.2 467.0 456.7 453.6 450.2 440.7 443.7 428.4 437.1 416.7 430.6 405.6 424.1 395.1 417.6 385.1 411.1 375.9 404.6 367.2 398.1 359.2 391.6 351.9 385.1 345.2 378.6 339.3 372.1 334.0 365.6 329.4 359.0 325.5 352.5 322.3 346.0 319.8 339.5 318.0 333.0 316.9 326.5 316.6 320.0 316.9 313.5 318.0 307.0 319.8 300.5 322.3 294.0 325.5 287.5 329.4 281.0 334.0 274.4 339.3 267.9 345.2 261.4 351.9 254.9 359.2 248.4 367.2 241.9 375.9 235.4 385.1 228.9 395.1 222.4 405.6 215.9 416.7 209.4 428.4 202.9 440.7 196.3 453.6 189.8 467.0 183.3 481.0 176.8 495.4 170.3 510.4 163.8 525.8 157.3 541.7 150.8 558.0 144.3 574.8 137.8 591.9 131.3 609.4 124.8 627.3 118.3 645.5 111.7 664.1 105.2 682.9 98.7 702.0 92.2 721.3 85.7 740.9 79.2 760.6 72.7 780.5 66.2 800.6 59.7 820.8 53.2 841.1 46.7 851.3 43.4 861.4 40.2 871.6 36.9 881.9 33.6 892.1 30.4 897.2 28.8 M750.70 564.05 L1053.90 564.05 M609.44 515.24 L1195.16 515.24 M488.13 466.43 L1316.47 466.43 M395.05 417.62 L1409.55 417.62 M336.54 368.81 L1468.06 368.81 M316.58 320.00 L1488.02 320.00 M336.54 271.19 L1468.06 271.19 M395.05 222.38 L1409.55 222.38 M488.13 173.57 L1316.47 173.57 M609.44 124.76 L1195.16 124.76 M750.70 75.95 L1053.90 75.95" fill="none" stroke="#747474" stroke-width="2.1" stroke-dasharray="2.1 3.45"/>
<text x="316.6" y="330" text-anchor="middle" font-family="Liberation Sans" font-size="11" fill="#8c8c8c">+180<tspan font-size="6" dy="-5" dx="2">°</tspan></text>
<text x="414.2" y="330" text-anchor="middle" font-family="Liberation Sans" font-size="11" fill="#8c8c8c">+150<tspan font-size="6" dy="-5" dx="2">°</tspan></text>
<text x="511.8" y="330" text-anchor="middle" font-family="Liberation Sans" font-size="11" fill="#8c8c8c">+120<tspan font-size="6" dy="-5" dx="2">°</tspan></text>
<text x="609.4" y="330" text-anchor="middle" font-family="Liberation Sans" font-size="11" fill="#8c8c8c">+90<tspan font-size="6" dy="-5" dx="2">°</tspan></text>
<text x="707.1" y="330" text-anchor="middle" font-family="Liberation Sans" font-size="11" fill="#8c8c8c">+60<tspan font-size="6" dy="-5" dx="2">°</tspan></text>
<text x="804.7" y="330" text-anchor="middle" font-family="Liberation Sans" font-size="11" fill="#8c8c8c">+30<tspan font-size="6" dy="-5" dx="2">°</tspan></text>
<text x="902.3" y="330" text-anchor="middle" font-family="Liberation Sans" font-size="11" fill="#8c8c8c">+0<tspan font-size="6" dy="-5" dx="2">°</tspan></text>
<text x="999.9" y="330" text-anchor="middle" font-family="Liberation Sans" font-size="11" fill="#8c8c8c">+330<tspan font-size="6" dy="-5" dx="2">°</tspan></text>
<text x="1097.5" y="330" text-anchor="middle" font-family="Liberation Sans" font-size="11" fill="#8c8c8c">+300<tspan font-size="6" dy="-5" dx="2">°</tspan></text>
<text x="1195.2" y="330" text-anchor="middle" font-family="Liberation Sans" font-size="11" fill="#8c8c8c">+270<tspan font-size="6" dy="-5" dx="2">°</tspan></text>
<text x="1292.8" y="330" text-anchor="middle" font-family="Liberation Sans" font-size="11" fill="#8c8c8c">+240<tspan font-size="6" dy="-5" dx="2">°</tspan></text>
<text x="1390.4" y="330" text-anchor="middle" font-family="Liberation Sans" font-size="11" fill="#8c8c8c">+210<tspan font-size="6" dy="-5" dx="2">°</tspan></text>
<text x="1488.0" y="330" text-anchor="middle" font-family="Liberation Sans" font-size="11" fill="#8c8c8c">+180<tspan font-size="6" dy="-5" dx="2">°</tspan></text>
<text x="902.3" y="25.1" text-anchor="middle" font-family="Liberation Sans" font-size="11" fill="#8c8c8c">+90<tspan font-size="6" dy="-5" dx="2">°</tspan></text>
<text x="902.3" y="123.8" text-anchor="middle" font-family="Liberation Sans" font-size="11" fill="#8c8c8c">+60<tspan font-size="6" dy="-5" dx="2">°</tspan></text>
<text x="902.3" y="220.9" text-anchor="middle" font-family="Liberation Sans" font-size="11" fill="#8c8c8c">+30<tspan font-size="6" dy="-5" dx="2">°</tspan></text>
<text x="902.3" y="428.1" text-anchor="middle" font-family="Liberation Sans" font-size="11" fill="#8c8c8c">−30<tspan font-size="6" dy="-5" dx="2">°</tspan></text>
<text x="902.3" y="525.7" text-anchor="middle" font-family="Liberation Sans" font-size="11" fill="#8c8c8c">−60<tspan font-size="6" dy="-5" dx="2">°</tspan></text>
<text x="902.3" y="623.2" text-anchor="middle" font-family="Liberation Sans" font-size="11" fill="#8c8c8c">−90<tspan font-size="6" dy="-5" dx="2">°</tspan></text>
<path d="M1024.0 98.0 L1020.9 96.5 L1017.8 95.0 L1014.7 93.5 L1011.7 92.1 L1008.6 90.6 L1005.5 89.2 L1002.5 87.7 L999.4 86.3 L996.4 84.9 L993.3 83.4 L990.3 82.0 L987.3 80.6 L984.3 79.3 L981.4 77.9 L978.4 76.5 L975.5 75.2 L972.6 73.9 L969.7 72.6 L966.8 71.3 L964.0 70.1 L961.2 68.8 L958.5 67.6 L955.8 66.5 L953.1 65.3 L950.5 64.2 L947.9 63.2 L945.4 62.2 L942.9 61.2 L940.5 60.3 L938.2 59.4 L935.9 58.6 L933.7 57.9 L931.5 57.2 L929.4 56.6 L927.4 56.1 L925.5 55.7 L923.7 55.3 L921.9 55.1 L920.1 54.9 L918.5 54.9 L916.9 54.9 L915.3 55.0 L913.8 55.2 L912.3 55.5 L910.8 55.9 L909.4 56.4 L908.0 57.0 L906.6 57.6 L905.2 58.3 L903.8 59.1 L902.5 59.9 L901.1 60.8 L899.7 61.7 L898.3 62.7 L897.0 63.8 L895.6 64.9 L894.2 66.0 L892.8 67.1 L891.4 68.3 L889.9 69.5 L888.5 70.8 L887.1 72.0 L885.6 73.3 L884.2 74.6 L882.7 76.0 L881.3 77.3 L879.8 78.7 L878.4 80.0 L876.9 81.4 L875.4 82.8 L873.9 84.2 L872.5 85.7 L871.0 87.1 L869.5 88.5 L868.0 90.0 L866.5 91.5 L865.0 92.9 L863.5 94.4 L862.0 95.9 L860.5 97.4 L859.0 98.9 L857.5 100.4 L856.0 101.9 L854.5 103.4 L853.0 104.9 L851.5 106.4 L850.0 107.9 L848.5 109.4 L847.0 111.0 L845.5 112.5 L844.0 114.0 L842.5 115.6 L841.0 117.1 L839.6 118.7 L838.1 120.2 L836.6 121.8 L835.1 123.3 L833.6 124.9 L832.2 126.4 L830.7 128.0 L829.2 129.5 L827.8 131.1 L826.3 132.7 L824.9 134.2 L823.4 135.8 L822.0 137.4 L820.5 138.9 L819.1 140.5 L817.7 142.1 L816.3 143.6 L814.9 145.2 L813.4 146.8 L812.0 148.4 L810.6 150.0 L809.2 151.5 L807.9 153.1 L806.5 154.7 L805.1 156.3 L803.7 157.9 L802.4 159.5 L801.0 161.0 L799.7 162.6 L798.3 164.2 L797.0 165.8 L795.7 167.4 L794.3 169.0 L793.0 170.6 L791.7 172.2 L790.4 173.7 L789.1 175.3 L787.8 176.9 L786.6 178.5 L785.3 180.1 L784.0 181.7 L782.8 183.3 L781.6 184.9 L780.3 186.5 L779.1 188.1 L777.9 189.7 L776.7 191.3 L775.5 192.9 L774.3 194.5 L773.1 196.1 L771.9 197.7 L770.8 199.3 L769.6 200.9 L768.5 202.5 L767.4 204.1 L766.2 205.7 L765.1 207.3 L764.0 208.9 L762.9 210.5 L761.9 212.1 L760.8 213.7 L759.7 215.3 L758.7 216.9 L757.6 218.5 L756.6 220.1 L755.6 221.7 L754.6 223.3 L753.6 224.9 L752.6 226.5 L751.6 228.1 L750.6 229.7 L749.7 231.3 L748.8 232.9 L747.8 234.5 L746.9 236.2 L746.0 237.8 L745.1 239.4 L744.2 241.0 L743.3 242.6 L742.5 244.2 L741.6 245.8 L740.8 247.4 L740.0 249.0 L739.2 250.6 L738.4 252.2 L737.6 253.8 L736.8 255.4 L736.0 257.0 L735.3 258.6 L734.5 260.3 L733.8 261.9 L733.1 263.5 L732.4 265.1 L731.7 266.7 L731.0 268.3 L730.3 269.9 L729.7 271.5 L729.1 273.1 L728.4 274.7 L727.8 276.3 L727.2 277.9 L726.6 279.6 L726.1 281.2 L725.5 282.8 L724.9 284.4 L724.4 286.0 L723.9 287.6 L723.4 289.2 L722.9 290.8 L722.4 292.4 L721.9 294.0 L721.5 295.6 L721.0 297.3 L720.6 298.9 L720.2 300.5 L719.8 302.1 L719.4 303.7 L719.0 305.3 L718.7 306.9 L718.3 308.5 L718.0 310.1 L717.7 311.7 L717.4 313.4 L717.1 315.0 L716.8 316.6 L716.5 318.2 L716.3 319.8 L716.1 321.4 L715.8 323.0 L715.6 324.6 L715.4 326.2 L715.2 327.8 L715.1 329.5 L714.9 331.1 L714.8 332.7 L714.7 334.3 L714.6 335.9 L714.5 337.5 L714.4 339.1 L714.3 340.7 L714.3 342.3 L714.2 343.9 L714.2 345.5 L714.2 347.2 L714.2 348.8 L714.2 350.4 L714.2 352.0 L714.3 353.6 L714.3 355.2 L714.4 356.8 L714.5 358.4 L714.6 360.0 L714.7 361.6 L714.8 363.2 L715.0 364.9 L715.1 366.5 L715.3 368.1 L715.5 369.7 L715.7 371.3 L715.9 372.9 L716.1 374.5 L716.3 376.1 L716.6 377.7 L716.9 379.3 L717.1 380.9 L717.4 382.5 L717.7 384.2 L718.1 385.8 L718.4 387.4 L718.7 389.0 L719.1 390.6 L719.5 392.2 L719.9 393.8 L720.3 395.4 L720.7 397.0 L721.1 398.6 L721.6 400.2 L722.0 401.8 L722.5 403.4 L723.0 405.0 L723.5 406.6 L724.0 408.3 L724.5 409.9 L725.0 411.5 L725.6 413.1 L726.1 414.7 L726.7 416.3 L727.3 417.9 L727.9 419.5 L728.5 421.1 L729.1 422.7 L729.8 424.3 L730.4 425.9 L731.1 427.5 L731.8 429.1 L732.5 430.7 L733.2 432.3 L733.9 433.9 L734.6 435.5 L735.3 437.1 L736.1 438.7 L736.8 440.3 L737.6 441.9 L738.4 443.5 L739.2 445.1 L740.0 446.7 M1018.0 105.0 L1015.2 103.6 L1012.5 102.1 L1009.7 100.7 L1006.9 99.3 L1004.2 97.9 L1001.4 96.5 L998.7 95.1 L995.9 93.8 L993.2 92.4 L990.5 91.1 L987.8 89.7 L985.1 88.4 L982.5 87.1 L979.8 85.8 L977.2 84.5 L974.6 83.3 L972.0 82.1 L969.4 80.8 L966.8 79.6 L964.3 78.5 L961.8 77.3 L959.4 76.2 L956.9 75.1 L954.5 74.1 L952.1 73.0 L949.8 72.0 L947.5 71.1 L945.2 70.2 L943.0 69.3 L940.9 68.5 L938.7 67.7 L936.6 67.0 L934.6 66.3 L932.6 65.7 L930.6 65.1 L928.7 64.6 L926.9 64.2 L925.0 63.8 L923.3 63.5 L921.5 63.3 L919.8 63.1 L918.2 63.0 L916.5 63.0 L914.9 63.1 L913.3 63.2 L911.8 63.4 L910.2 63.7 L908.7 64.0 L907.2 64.5 L905.7 64.9 L904.2 65.5 L902.7 66.1 L901.2 66.7 L899.7 67.4 L898.2 68.2 L896.7 69.0 L895.2 69.9 L893.6 70.8 L892.1 71.7 L890.6 72.7 L889.0 73.7 L887.5 74.8 L885.9 75.8 L884.4 77.0 L882.8 78.1 L881.2 79.3 L879.6 80.4 L878.0 81.6 L876.4 82.9 L874.7 84.1 L873.1 85.4 L871.5 86.7 L869.8 88.0 L868.2 89.3 L866.5 90.6 L864.9 92.0 L863.2 93.3 L861.5 94.7 L859.9 96.1 L858.2 97.5 L856.5 98.8 L854.8 100.3 L853.1 101.7 L851.5 103.1 L849.8 104.5 L848.1 106.0 L846.4 107.4 L844.7 108.9 L843.0 110.3 L841.3 111.8 L839.6 113.3 L837.9 114.7 L836.2 116.2 L834.5 117.7 L832.8 119.2 L831.1 120.7 L829.5 122.2 L827.8 123.7 L826.1 125.2 L824.4 126.7 L822.7 128.2 L821.1 129.7 L819.4 131.2 L817.7 132.8 L816.0 134.3 L814.4 135.8 L812.7 137.3 L811.1 138.9 L809.4 140.4 L807.8 141.9 L806.1 143.5 L804.5 145.0 L802.9 146.6 L801.3 148.1 L799.6 149.6 L798.0 151.2 L796.4 152.7 L794.8 154.3 L793.2 155.9 L791.6 157.4 L790.1 159.0 L788.5 160.5 L786.9 162.1 L785.4 163.6 L783.8 165.2 L782.3 166.8 L780.7 168.3 L779.2 169.9 L777.7 171.5 L776.2 173.0 L774.7 174.6 L773.2 176.2 L771.7 177.7 L770.2 179.3 L768.7 180.9 L767.3 182.5 L765.8 184.0 L764.4 185.6 L762.9 187.2 L761.5 188.8 L760.1 190.3 L758.7 191.9 L757.3 193.5 L755.9 195.1 L754.5 196.7 L753.2 198.3 L751.8 199.8 L750.5 201.4 L749.1 203.0 L747.8 204.6 L746.5 206.2 L745.2 207.8 L743.9 209.3 L742.6 210.9 L741.3 212.5 L740.1 214.1 L738.8 215.7 L737.6 217.3 L736.4 218.9 L735.2 220.4 L734.0 222.0 L732.8 223.6 L731.6 225.2 L730.5 226.8 L729.3 228.4 L728.2 230.0 L727.0 231.6 L725.9 233.2 L724.8 234.8 L723.7 236.4 L722.7 238.0 L721.6 239.5 L720.6 241.1 L719.5 242.7 L718.5 244.3 L717.5 245.9 L716.5 247.5 L715.5 249.1 L714.6 250.7 L713.6 252.3 L712.7 253.9 L711.7 255.5 L710.8 257.1 L709.9 258.7 L709.0 260.3 L708.2 261.9 L707.3 263.5 L706.5 265.1 L705.6 266.7 L704.8 268.3 L704.0 269.9 L703.2 271.5 L702.5 273.1 L701.7 274.7 L701.0 276.3 L700.3 277.8 L699.5 279.4 L698.8 281.0 L698.2 282.6 L697.5 284.2 L696.9 285.8 L696.2 287.4 L695.6 289.0 L695.0 290.6 L694.4 292.2 L693.8 293.8 L693.3 295.4 L692.7 297.0 L692.2 298.6 L691.7 300.2 L691.2 301.8 L690.7 303.4 L690.2 305.0 L689.8 306.6 L689.3 308.2 L688.9 309.8 L688.5 311.4 L688.1 313.0 L687.8 314.6 L687.4 316.2 L687.1 317.8 L686.7 319.4 L686.4 321.0 L686.1 322.6 L685.9 324.2 L685.6 325.8 L685.3 327.4 L685.1 329.0 L684.9 330.6 L684.7 332.2 L684.5 333.8 L684.4 335.4 L684.2 337.0 L684.1 338.6 L684.0 340.2 L683.9 341.8 L683.8 343.4 L683.7 345.0 L683.6 346.6 L683.6 348.2 L683.6 349.8 L683.6 351.4 L683.6 353.0 L683.6 354.6 L683.7 356.2 L683.7 357.8 L683.8 359.4 L683.9 361.0 L684.0 362.6 L684.1 364.2 L684.3 365.8 L684.4 367.4 L684.6 369.0 L684.8 370.6 L685.0 372.2 L685.2 373.8 L685.4 375.4 L685.7 377.0 L685.9 378.6 L686.2 380.2 L686.5 381.8 L686.8 383.4 L687.2 385.0 L687.5 386.6 L687.9 388.2 L688.2 389.7 L688.6 391.3 L689.0 392.9 L689.5 394.5 L689.9 396.1 L690.4 397.7 L690.8 399.3 L691.3 400.9 L691.8 402.5 L692.3 404.1 L692.9 405.7 L693.4 407.3 L694.0 408.9 L694.5 410.5 L695.1 412.1 L695.7 413.6 L696.4 415.2 L697.0 416.8 L697.6 418.4 L698.3 420.0 M1046.0 116.5 L1043.8 116.0 L1041.5 115.6 L1039.4 115.2 L1037.2 114.8 L1035.1 114.4 L1033.1 114.1 L1031.0 113.8 L1029.1 113.5 L1027.1 113.3 L1025.2 113.1 L1023.3 112.9 L1021.5 112.7 L1019.7 112.6 L1017.9 112.5 L1016.2 112.4 L1014.5 112.4 L1012.9 112.3 L1011.2 112.4 L1009.7 112.4 L1008.1 112.5 L1006.6 112.6 L1005.1 112.7 L1003.6 112.8 L1002.2 113.0 L1000.8 113.2 L999.5 113.5 L998.1 113.7 L996.8 114.0 L995.6 114.4 L994.3 114.7 L993.1 115.1 L991.9 115.5 L990.7 115.9 L989.6 116.4 L988.4 116.9 L987.3 117.4 L986.2 117.9 L985.2 118.5 L984.1 119.0 L983.1 119.6 L982.1 120.3 L981.1 120.9 L980.1 121.6 L979.1 122.3 L978.2 123.0 L977.2 123.7 L976.3 124.5 L975.4 125.2 L974.5 126.0 L973.6 126.8 L972.7 127.6 L971.8 128.5 L971.0 129.3 L970.1 130.2 L969.3 131.1 L968.4 132.0 L967.6 133.0 L966.8 133.9 L966.0 134.8 L965.1 135.8 L964.3 136.8 L963.5 137.8 L962.7 138.8 L961.9 139.8 L961.2 140.9 L960.4 141.9 L959.6 143.0 L958.8 144.0 L958.0 145.1 L957.3 146.2 L956.5 147.3 L955.7 148.4 L954.9 149.6 L954.2 150.7 L953.4 151.8 L952.7 153.0 L951.9 154.1 L951.1 155.3 L950.4 156.5 L949.6 157.7 L948.8 158.9 L948.1 160.1 L947.3 161.3 L946.6 162.5 L945.8 163.7 L945.1 164.9 L944.3 166.2 L943.5 167.4 L942.8 168.7 L942.0 169.9 L941.3 171.2 L940.5 172.5 L939.7 173.7 L939.0 175.0 L938.2 176.3 L937.4 177.6 L936.7 178.9 L935.9 180.2 L935.1 181.5 L934.4 182.8 L933.6 184.1 L932.8 185.4 L932.1 186.8 L931.3 188.1 L930.5 189.4 L929.8 190.8 L929.0 192.1 L928.2 193.4 L927.4 194.8 L926.7 196.1 L925.9 197.5 L925.1 198.8 L924.3 200.2 L923.5 201.6 L922.8 202.9 L922.0 204.3 L921.2 205.7 L920.4 207.1 L919.6 208.4 L918.9 209.8 L918.1 211.2 L917.3 212.6 L916.5 214.0 L915.7 215.4 L914.9 216.8 L914.1 218.2 L913.3 219.6 L912.5 221.0 L911.8 222.4 L911.0 223.8 L910.2 225.2 L909.4 226.6 L908.6 228.0 L907.8 229.4 L907.0 230.8 L906.2 232.2 L905.4 233.7 L904.6 235.1 L903.8 236.5 L903.0 237.9 L902.2 239.4 L901.5 240.8 L900.7 242.2 L899.9 243.6 L899.1 245.1 L898.3 246.5 L897.5 247.9 L896.7 249.4 L895.9 250.8 L895.1 252.3 L894.3 253.7 L893.5 255.1 L892.7 256.6 L891.9 258.0 L891.2 259.5 L890.4 260.9 L889.6 262.4 L888.8 263.8 L888.0 265.3 L887.2 266.7 L886.4 268.2 L885.6 269.6 L884.9 271.1 L884.1 272.5 L883.3 274.0 L882.5 275.4 L881.7 276.9 L881.0 278.3 L880.2 279.8 L879.4 281.2 L878.6 282.7 L877.9 284.2 L877.1 285.6 L876.3 287.1 L875.6 288.5 L874.8 290.0 L874.0 291.5 L873.3 292.9 L872.5 294.4 L871.8 295.8 L871.0 297.3 L870.2 298.8 L869.5 300.2 L868.7 301.7 L868.0 303.2 L867.2 304.6 L866.5 306.1 L865.8 307.6 L865.0 309.0 L864.3 310.5 L863.5 311.9 L862.8 313.4 L862.1 314.9 L861.4 316.3 L860.6 317.8 L859.9 319.3 L859.2 320.7 L858.5 322.2 L857.8 323.7 L857.0 325.1 L856.3 326.6 L855.6 328.1 L854.9 329.5 L854.2 331.0 L853.5 332.5 L852.8 333.9 L852.1 335.4 L851.4 336.8 L850.8 338.3 L850.1 339.8 L849.4 341.2 L848.7 342.7 L848.0 344.2 L847.4 345.6 L846.7 347.1 L846.0 348.5 L845.4 350.0 L844.7 351.5 L844.1 352.9 L843.4 354.4 L842.8 355.8 L842.1 357.3 L841.5 358.8 L840.9 360.2 L840.2 361.7 L839.6 363.1 L839.0 364.6 L838.4 366.0 L837.8 367.5 L837.1 368.9 L836.5 370.4 L835.9 371.8 L835.3 373.3 L834.7 374.7 L834.2 376.2 L833.6 377.6 L833.0 379.1 L832.4 380.5 L831.8 382.0 L831.3 383.4 L830.7 384.9 L830.1 386.3 L829.6 387.7 L829.0 389.2 L828.5 390.6 L827.9 392.1 L827.4 393.5 L826.8 394.9 L826.3 396.4 L825.8 397.8 L825.2 399.2 L824.7 400.6 L824.2 402.1 L823.7 403.5 L823.2 404.9 L822.7 406.3 L822.2 407.8 L821.7 409.2 L821.2 410.6 L820.7 412.0 L820.2 413.4 L819.7 414.8 L819.3 416.2 L818.8 417.6 L818.3 419.0 L817.9 420.4 L817.4 421.8 L816.9 423.2 L816.5 424.6 L816.1 426.0 L815.6 427.4 L815.2 428.8 L814.7 430.2 L814.3 431.6 L813.9 433.0 L813.5 434.3 L813.0 435.7 L812.6 437.1 L812.2 438.4 L811.8 439.8 L811.4 441.2 L811.0 442.5 L810.6 443.9 L810.2 445.2 L809.8 446.6 L809.4 447.9 L809.1 449.3 M983.0 111.5 L981.7 111.8 L980.3 112.1 L979.0 112.5 L977.8 112.8 L976.5 113.3 L975.3 113.7 L974.1 114.1 L972.9 114.6 L971.7 115.1 L970.6 115.7 L969.4 116.2 L968.3 116.8 L967.2 117.4 L966.1 118.1 L965.0 118.7 L964.0 119.4 L962.9 120.1 L961.9 120.8 L960.9 121.5 L959.8 122.3 L958.8 123.1 L957.8 123.9 L956.9 124.7 L955.9 125.5 L954.9 126.4 L953.9 127.2 L953.0 128.1 L952.0 129.0 L951.1 130.0 L950.1 130.9 L949.2 131.8 L948.3 132.8 L947.3 133.8 L946.4 134.8 L945.5 135.8 L944.6 136.8 L943.7 137.9 L942.8 138.9 L941.8 140.0 L940.9 141.0 L940.0 142.1 L939.1 143.2 L938.2 144.3 L937.3 145.4 L936.4 146.5 L935.5 147.7 L934.6 148.8 L933.8 150.0 L932.9 151.1 L932.0 152.3 L931.1 153.5 L930.2 154.7 L929.3 155.9 L928.4 157.1 L927.5 158.3 L926.6 159.5 L925.7 160.7 L924.8 162.0 L923.9 163.2 L923.1 164.5 L922.2 165.7 L921.3 167.0 L920.4 168.2 L919.5 169.5 L918.6 170.8 L917.7 172.1 L916.8 173.4 L915.9 174.6 L915.0 175.9 L914.1 177.3 L913.2 178.6 L912.3 179.9 L911.5 181.2 L910.6 182.5 L909.7 183.8 L908.8 185.2 L907.9 186.5 L907.0 187.8 L906.1 189.2 L905.2 190.5 L904.3 191.9 L903.4 193.2 L902.5 194.6 L901.6 196.0 L900.7 197.3 L899.8 198.7 L898.9 200.1 L898.0 201.4 L897.1 202.8 L896.2 204.2 L895.3 205.6 L894.4 207.0 L893.5 208.4 L892.7 209.8 L891.8 211.1 L890.9 212.5 L890.0 213.9 L889.1 215.3 L888.2 216.7 L887.3 218.2 L886.4 219.6 L885.5 221.0 L884.6 222.4 L883.8 223.8 L882.9 225.2 L882.0 226.6 L881.1 228.1 L880.2 229.5 L879.3 230.9 L878.5 232.3 L877.6 233.8 L876.7 235.2 L875.8 236.6 L874.9 238.0 L874.1 239.5 L873.2 240.9 L872.3 242.4 L871.5 243.8 L870.6 245.2 L869.7 246.7 L868.9 248.1 L868.0 249.6 L867.1 251.0 L866.3 252.4 L865.4 253.9 L864.6 255.3 L863.7 256.8 L862.9 258.2 L862.0 259.7 L861.2 261.1 L860.3 262.6 L859.5 264.0 L858.7 265.5 L857.8 267.0 L857.0 268.4 L856.2 269.9 L855.4 271.3 L854.5 272.8 L853.7 274.2 L852.9 275.7 L852.1 277.2 L851.3 278.6 L850.5 280.1 L849.7 281.6 L848.9 283.0 L848.1 284.5 L847.3 285.9 L846.5 287.4 L845.7 288.9 L844.9 290.3 L844.1 291.8 L843.3 293.3 L842.6 294.7 L841.8 296.2 L841.0 297.7 L840.3 299.1 L839.5 300.6 L838.8 302.1 L838.0 303.5 L837.3 305.0 L836.5 306.5 L835.8 308.0 L835.0 309.4 L834.3 310.9 L833.6 312.4 L832.9 313.8 L832.1 315.3 L831.4 316.8 L830.7 318.2 L830.0 319.7 L829.3 321.2 L828.6 322.7 L827.9 324.1 L827.2 325.6 L826.6 327.1 L825.9 328.5 L825.2 330.0 L824.5 331.5 L823.9 332.9 L823.2 334.4 L822.6 335.9 L821.9 337.4 L821.3 338.8 L820.6 340.3 L820.0 341.8 L819.4 343.2 L818.8 344.7 L818.1 346.2 L817.5 347.6 L816.9 349.1 L816.3 350.6 L815.7 352.0 L815.1 353.5 L814.5 355.0 L814.0 356.4 L813.4 357.9 L812.8 359.3 L812.2 360.8 L811.7 362.3 L811.1 363.7 L810.6 365.2 L810.0 366.7 L809.5 368.1 L809.0 369.6 L808.5 371.0 L807.9 372.5 L807.4 373.9 L806.9 375.4 L806.4 376.9 L805.9 378.3 L805.4 379.8 L804.9 381.2 L804.5 382.7 L804.0 384.1 L803.5 385.6 L803.0 387.0 L802.6 388.4 L802.1 389.9 L801.7 391.3 L801.3 392.8 L800.8 394.2 L800.4 395.7 L800.0 397.1 L799.5 398.5 L799.1 400.0 L798.7 401.4 L798.3 402.8 L797.9 404.3 L797.5 405.7 L797.2 407.1 L796.8 408.6 L796.4 410.0 L796.1 411.4 L795.7 412.8 L795.3 414.2 L795.0 415.7 L794.6 417.1 L794.3 418.5 L794.0 419.9 L793.7 421.3 L793.3 422.7 L793.0 424.1 L792.7 425.5 L792.4 426.9 L792.1 428.3 L791.8 429.7 L791.5 431.1 L791.2 432.5 L790.9 433.9 L790.7 435.3 L790.4 436.6 L790.1 438.0 L789.9 439.4 L789.6 440.8 L789.4 442.1 L789.1 443.5 L788.9 444.9 L788.7 446.2 L788.4 447.6 L788.2 448.9 L788.0 450.3 L787.7 451.6 L787.5 453.0 L787.3 454.3 L787.1 455.6 L786.9 457.0 L786.7 458.3 M1089.0 124.5 L1085.8 122.9 L1082.7 121.3 L1079.5 119.8 L1076.3 118.2 L1073.1 116.6 L1069.9 115.1 L1066.7 113.5 L1063.4 111.9 L1060.2 110.4 L1057.0 108.8 L1053.7 107.2 L1050.5 105.7 L1047.2 104.1 L1043.9 102.6 L1040.7 101.0 L1037.4 99.5 L1034.1 98.0 L1030.9 96.4 L1027.6 94.9 L1024.3 93.4 L1021.1 91.9 L1017.8 90.3 L1014.5 88.8 L1011.2 87.3 L1008.0 85.8 L1004.7 84.3 L1001.5 82.9 L998.2 81.4 L995.0 79.9 L991.8 78.5 L988.6 77.0 L985.4 75.6 L982.2 74.2 L979.1 72.8 L975.9 71.4 L972.8 70.0 L969.7 68.7 L966.7 67.3 L963.7 66.0 L960.7 64.7 L957.7 63.5 L954.8 62.2 L952.0 61.1 L949.1 59.9 L946.4 58.8 L943.7 57.7 L941.1 56.7 L938.5 55.7 L936.1 54.8 L933.7 54.0 L931.4 53.2 L929.2 52.6 L927.0 52.0 L925.0 51.5 L923.1 51.1 L921.2 50.8 L919.5 50.6 L917.8 50.6 L916.2 50.6 L914.7 50.8 L913.2 51.0 L911.7 51.4 L910.4 51.9 L909.0 52.5 L907.7 53.1 L906.3 53.9 L905.0 54.7 L903.7 55.6 L902.4 56.5 L901.1 57.6 L899.8 58.6 L898.5 59.7 L897.2 60.9 L895.9 62.1 L894.6 63.3 L893.3 64.5 L891.9 65.8 L890.6 67.1 L889.3 68.5 L887.9 69.8 L886.6 71.2 L885.2 72.6 L883.8 74.0 L882.5 75.4 L881.1 76.8 L879.7 78.3 L878.3 79.7 L877.0 81.2 L875.6 82.6 L874.2 84.1 L872.8 85.6 L871.4 87.1 L870.0 88.6 L868.6 90.1 L867.2 91.6 L865.8 93.1 L864.4 94.7 L863.0 96.2 L861.7 97.7 L860.3 99.3 L858.9 100.8 L857.5 102.4 L856.1 103.9 L854.7 105.5 L853.3 107.0 L851.9 108.6 L850.5 110.1 L849.1 111.7 L847.8 113.3 L846.4 114.8 L845.0 116.4 L843.6 118.0 L842.3 119.5 L840.9 121.1 L839.5 122.7 L838.2 124.3 L836.8 125.8 L835.5 127.4 L834.1 129.0 L832.8 130.6 L831.5 132.2 L830.1 133.8 L828.8 135.4 L827.5 136.9 L826.1 138.5 L824.8 140.1 L823.5 141.7 L822.2 143.3 L820.9 144.9 L819.6 146.5 L818.3 148.1 L817.0 149.7 L815.8 151.3 L814.5 152.9 L813.2 154.5 L812.0 156.1 L810.7 157.7 L809.5 159.3 L808.2 160.9 L807.0 162.5 L805.8 164.1 L804.5 165.7 L803.3 167.3 L802.1 168.9 L800.9 170.5 L799.7 172.1 L798.5 173.7 L797.4 175.3 L796.2 176.9 L795.0 178.5 L793.9 180.1 L792.7 181.8 L791.6 183.4 L790.5 185.0 L789.3 186.6 L788.2 188.2 L787.1 189.8 L786.0 191.4 L784.9 193.0 L783.9 194.6 L782.8 196.2 L781.7 197.8 L780.7 199.5 L779.6 201.1 L778.6 202.7 L777.6 204.3 L776.5 205.9 L775.5 207.5 L774.5 209.1 L773.6 210.7 L772.6 212.4 L771.6 214.0 L770.6 215.6 L769.7 217.2 L768.7 218.8 L767.8 220.4 L766.9 222.0 L766.0 223.7 L765.1 225.3 L764.2 226.9 L763.3 228.5 L762.4 230.1 L761.6 231.7 L760.7 233.3 L759.9 235.0 L759.1 236.6 L758.3 238.2 L757.4 239.8 L756.6 241.4 L755.9 243.0 L755.1 244.7 L754.3 246.3 L753.6 247.9 L752.8 249.5 L752.1 251.1 L751.4 252.7 L750.7 254.4 L750.0 256.0 L749.3 257.6 L748.6 259.2 L748.0 260.8 L747.3 262.4 L746.7 264.1 L746.1 265.7 L745.4 267.3 L744.8 268.9 L744.3 270.5 L743.7 272.2 L743.1 273.8 L742.6 275.4 L742.0 277.0 L741.5 278.6 L741.0 280.2 L740.5 281.9 L740.0 283.5 L739.5 285.1 L739.0 286.7 L738.6 288.3 L738.1 290.0 L737.7 291.6 L737.3 293.2 L736.8 294.8 L736.5 296.4 L736.1 298.0 L735.7 299.7 L735.3 301.3 L735.0 302.9 L734.7 304.5 L734.3 306.1 L734.0 307.8 L733.7 309.4 L733.5 311.0 L733.2 312.6 L732.9 314.2 L732.7 315.9 L732.5 317.5 L732.2 319.1 L732.0 320.7 L731.8 322.3 L731.7 323.9 L731.5 325.6 L731.3 327.2 L731.2 328.8 L731.1 330.4 L731.0 332.0 L730.9 333.7 L730.8 335.3 L730.7 336.9 L730.6 338.5 L730.6 340.1 L730.5 341.8 L730.5 343.4 L730.5 345.0 L730.5 346.6 L730.5 348.2 L730.5 349.8 L730.6 351.5 L730.6 353.1 L730.7 354.7 L730.8 356.3 L730.9 357.9 L731.0 359.6 L731.1 361.2 L731.2 362.8 L731.4 364.4 L731.5 366.0 L731.7 367.6 L731.9 369.3 L732.1 370.9 L732.3 372.5 L732.5 374.1 L732.7 375.7 L733.0 377.3 L733.2 379.0 L733.5 380.6 L733.8 382.2 L734.1 383.8 L734.4 385.4 L734.7 387.1 L735.1 388.7 L735.4 390.3 L735.8 391.9 L736.1 393.5 L736.5 395.1 L736.9 396.8 L737.3 398.4 L737.7 400.0 L738.2 401.6 L738.6 403.2 L739.1 404.8 L739.6 406.4 L740.0 408.1 L740.5 409.7 L741.0 411.3 L741.6 412.9 L742.1 414.5 L742.6 416.1 L743.2 417.8 L743.8 419.4 L744.3 421.0 L744.9 422.6 L745.5 424.2 L746.1 425.8 L746.8 427.4 L747.4 429.1 L748.0 430.7 L748.7 432.3 L749.4 433.9 L750.1 435.5 L750.8 437.1 L751.5 438.7 L752.2 440.3 L752.9 441.9 L753.6 443.6 L754.4 445.2 L755.1 446.8 L755.9 448.4 L756.7 450.0 M1060.0 145.5 L1057.6 144.1 L1055.1 142.6 L1052.7 141.2 L1050.3 139.8 L1047.8 138.4 L1045.4 137.0 L1042.9 135.6 L1040.5 134.2 L1038.1 132.8 L1035.6 131.4 L1033.2 130.0 L1030.7 128.6 L1028.3 127.3 L1025.8 125.9 L1023.4 124.6 L1020.9 123.2 L1018.5 121.9 L1016.1 120.6 L1013.7 119.2 L1011.2 117.9 L1008.8 116.6 L1006.4 115.3 L1004.0 114.1 L1001.6 112.8 L999.2 111.5 L996.8 110.3 L994.5 109.1 L992.1 107.9 L989.7 106.7 L987.4 105.5 L985.1 104.3 L982.8 103.1 L980.5 102.0 L978.2 100.9 L975.9 99.8 L973.7 98.7 L971.4 97.6 L969.2 96.6 L967.0 95.6 L964.8 94.6 L962.6 93.6 L960.5 92.6 L958.4 91.7 L956.3 90.8 L954.2 89.9 L952.1 89.1 L950.1 88.3 L948.1 87.5 L946.1 86.8 L944.1 86.1 L942.2 85.4 L940.3 84.8 L938.4 84.2 L936.5 83.6 L934.7 83.1 L932.8 82.6 L931.1 82.2 L929.3 81.8 L927.5 81.5 L925.8 81.2 L924.1 80.9 L922.4 80.7 L920.7 80.5 L919.0 80.4 L917.4 80.4 L915.7 80.4 L914.1 80.4 L912.5 80.5 L910.9 80.6 L909.3 80.8 L907.7 81.0 L906.1 81.3 L904.6 81.7 L903.0 82.0 L901.4 82.4 L899.8 82.9 L898.2 83.4 L896.7 83.9 L895.1 84.5 L893.5 85.1 L891.9 85.8 L890.3 86.5 L888.7 87.2 L887.0 88.0 L885.4 88.8 L883.8 89.6 L882.1 90.5 L880.5 91.3 L878.8 92.3 L877.2 93.2 L875.5 94.2 L873.8 95.1 L872.1 96.2 L870.4 97.2 L868.7 98.3 L867.0 99.3 L865.2 100.4 L863.5 101.5 L861.8 102.7 L860.0 103.8 L858.3 105.0 L856.5 106.2 L854.7 107.4 L853.0 108.6 L851.2 109.8 L849.4 111.0 L847.6 112.3 L845.8 113.6 L844.0 114.8 L842.2 116.1 L840.4 117.4 L838.6 118.7 L836.8 120.0 L835.0 121.3 L833.2 122.7 L831.3 124.0 L829.5 125.4 L827.7 126.7 L825.9 128.1 L824.0 129.5 L822.2 130.8 L820.4 132.2 L818.6 133.6 L816.7 135.0 L814.9 136.4 L813.1 137.8 L811.3 139.2 L809.5 140.6 L807.6 142.1 L805.8 143.5 L804.0 144.9 L802.2 146.4 L800.4 147.8 L798.6 149.2 L796.8 150.7 L795.0 152.1 L793.2 153.6 L791.4 155.1 L789.6 156.5 L787.8 158.0 L786.1 159.5 L784.3 160.9 L782.5 162.4 L780.8 163.9 L779.0 165.4 L777.3 166.9 L775.5 168.3 L773.8 169.8 L772.1 171.3 L770.3 172.8 L768.6 174.3 L766.9 175.8 L765.2 177.3 L763.5 178.8 L761.8 180.3 L760.1 181.8 L758.5 183.3 L756.8 184.9 L755.2 186.4 L753.5 187.9 L751.9 189.4 L750.2 190.9 L748.6 192.4 L747.0 194.0 L745.4 195.5 L743.8 197.0 L742.2 198.5 L740.7 200.1 L739.1 201.6 L737.6 203.1 L736.0 204.6 L734.5 206.2 L733.0 207.7 L731.5 209.2 L730.0 210.8 L728.5 212.3 L727.0 213.9 L725.5 215.4 L724.1 216.9 L722.6 218.5 L721.2 220.0 L719.8 221.6 L718.4 223.1 L717.0 224.6 L715.6 226.2 L714.2 227.7 L712.9 229.3 L711.5 230.8 L710.2 232.4 L708.9 233.9 L707.6 235.5 L706.3 237.0 L705.0 238.6 L703.7 240.1 L702.5 241.7 L701.2 243.2 L700.0 244.8 L698.8 246.3 L697.6 247.9 L696.4 249.4 L695.2 251.0 L694.1 252.6 L692.9 254.1 L691.8 255.7 L690.7 257.2 L689.6 258.8 L688.5 260.3 L687.4 261.9 L686.4 263.5 L685.3 265.0 L684.3 266.6 L683.3 268.1 L682.3 269.7 L681.3 271.3 L680.4 272.8 L679.4 274.4 L678.5 275.9 L677.6 277.5 L676.7 279.1 L675.8 280.6 L674.9 282.2 L674.1 283.8 L673.2 285.3 L672.4 286.9 L671.6 288.4 L670.8 290.0 L670.1 291.6 L669.3 293.1 L668.6 294.7 L667.8 296.3 L667.1 297.8 L666.4 299.4 L665.8 301.0 L665.1 302.5 L664.5 304.1 L663.8 305.7 L663.2 307.2 L662.6 308.8 L662.1 310.4 L661.5 311.9 L661.0 313.5 L660.5 315.1 L659.9 316.6 L659.5 318.2 L659.0 319.8 L658.5 321.3 L658.1 322.9 L657.7 324.5 L657.3 326.0 L656.9 327.6 L656.5 329.1 L656.2 330.7 L655.8 332.3 L655.5 333.8 L655.2 335.4 L654.9 337.0 L654.7 338.5 L654.4 340.1 L654.2 341.7 L654.0 343.2 L653.8 344.8 L653.6 346.4 L653.5 347.9 L653.3 349.5 L653.2 351.1 L653.1 352.6 L653.0 354.2 L652.9 355.8 L652.9 357.3 L652.9 358.9 L652.8 360.4 L652.8 362.0 L652.8 363.6 L652.9 365.1 L652.9 366.7 L653.0 368.2 L653.1 369.8 L653.2 371.4 L653.3 372.9 L653.4 374.5 L653.6 376.1 L653.8 377.6 L654.0 379.2 L654.2 380.7 L654.4 382.3 L654.6 383.8 L654.9 385.4 L655.2 387.0 L655.5 388.5 L655.8 390.1 L656.1 391.6 L656.4 393.2 L656.8 394.7 L657.2 396.3 L657.6 397.8 L658.0 399.4 L658.4 400.9 L658.8 402.5 L659.3 404.0 L659.8 405.6 L660.3 407.1 L660.8 408.7 L661.3 410.2 L661.8 411.8 L662.4 413.3 L663.0 414.9 L663.6 416.4 L664.2 418.0 L664.8 419.5 L665.4 421.0 L666.1 422.6 L666.7 424.1 L667.4 425.7 L668.1 427.2 L668.8 428.7 L669.5 430.3 L670.3 431.8 L671.0 433.3 L671.8 434.9 L672.6 436.4 L673.4 437.9 L674.2 439.5 L675.0 441.0 L675.9 442.5 L676.7 444.0 L677.6 445.6 L678.5 447.1 L679.4 448.6 L680.3 450.1 M971.0 149.5 L969.6 148.0 L968.2 146.6 L966.7 145.1 L965.3 143.7 L963.9 142.2 L962.5 140.8 L961.0 139.3 L959.6 137.9 L958.2 136.5 L956.7 135.0 L955.3 133.6 L953.9 132.2 L952.4 130.8 L951.0 129.4 L949.6 128.0 L948.1 126.6 L946.7 125.2 L945.3 123.8 L943.8 122.5 L942.4 121.1 L941.0 119.8 L939.5 118.4 L938.1 117.1 L936.7 115.7 L935.2 114.4 L933.8 113.1 L932.4 111.8 L931.0 110.5 L929.5 109.3 L928.1 108.0 L926.7 106.7 L925.3 105.5 L923.9 104.3 L922.5 103.1 L921.1 101.9 L919.7 100.7 L918.3 99.5 L916.9 98.4 L915.5 97.2 L914.1 96.1 L912.7 95.1 L911.4 94.0 L910.0 92.9 L908.6 91.9 L907.2 90.9 L905.9 89.9 L904.5 89.0 L903.1 88.1 L901.7 87.2 L900.4 86.3 L899.0 85.5 L897.6 84.7 L896.3 84.0 L894.9 83.2 L893.5 82.6 L892.1 81.9 L890.7 81.3 L889.3 80.7 L887.9 80.2 L886.5 79.7 L885.0 79.3 L883.6 78.9 L882.1 78.6 L880.6 78.3 L879.1 78.1 L877.5 77.9 L876.0 77.7 L874.4 77.7 L872.8 77.6 L871.2 77.6 L869.5 77.7 L867.8 77.8 L866.0 78.0 L864.3 78.2 L862.5 78.5 L860.6 78.8 L858.7 79.2 L856.8 79.6 L854.9 80.0 L852.9 80.5 L850.8 81.1 L848.7 81.7 L846.6 82.3 L844.5 83.0 L842.3 83.7 L840.1 84.4 L837.8 85.2 L835.5 86.0 L833.2 86.9 L830.8 87.7 L828.4 88.6 L826.0 89.6 L823.5 90.5 L821.0 91.5 L818.5 92.5 L816.0 93.6 L813.4 94.6 L810.8 95.7 L808.2 96.8 L805.6 97.9 L802.9 99.1 L800.2 100.2 L797.6 101.4 L794.8 102.6 L792.1 103.8 L789.4 105.0 L786.6 106.2 L783.8 107.5 L781.1 108.7 L778.3 110.0 L775.5 111.3 L772.7 112.6 L769.8 113.9 L767.0 115.2 L764.2 116.5 L761.3 117.9 L758.5 119.2 L755.6 120.6 L752.8 121.9 L749.9 123.3 L747.0 124.7 L744.2 126.0 L741.3 127.4 L738.4 128.8 L735.6 130.2 L732.7 131.6 L729.9 133.1 L727.0 134.5 L724.1 135.9 L721.3 137.3 L718.4 138.8 L715.6 140.2 L712.7 141.6 L709.9 143.1 L707.1 144.5 L704.2 146.0 L701.4 147.5 L698.6 148.9 L695.8 150.4 L693.0 151.9 L690.2 153.3 L687.4 154.8 L684.7 156.3 L681.9 157.8 L679.1 159.2 L676.4 160.7 L673.7 162.2 L670.9 163.7 L668.2 165.2 L665.5 166.7 L662.9 168.2 L660.2 169.7 L657.5 171.2 L654.9 172.7 L652.2 174.2 L649.6 175.8 L647.0 177.3 L644.4 178.8 L641.8 180.3 L639.3 181.8 L636.7 183.3 L634.2 184.9 L631.7 186.4 L629.2 187.9 L626.7 189.5 L624.2 191.0 L621.8 192.5 L619.4 194.0 L617.0 195.6 L614.6 197.1 L612.2 198.6 L609.8 200.2 L607.5 201.7 L605.2 203.3 L602.8 204.8 L600.6 206.3 L598.3 207.9 L596.1 209.4 L593.8 211.0 L591.6 212.5 L589.4 214.1 L587.3 215.6 L585.1 217.2 L583.0 218.7 L580.9 220.3 L578.8 221.8 L576.8 223.4 L574.7 224.9 L572.7 226.5 L570.7 228.0 L568.7 229.6 L566.8 231.1 L564.9 232.7 L563.0 234.2 L561.1 235.8 L559.2 237.4 L557.4 238.9 L555.6 240.5 L553.8 242.0 L552.0 243.6 L550.3 245.2 L548.6 246.7 L546.9 248.3 L545.2 249.8 L543.6 251.4 L542.0 253.0 L540.4 254.5 L538.8 256.1 L537.3 257.7 L535.8 259.2 L534.3 260.8 L532.8 262.4 L531.4 263.9 L530.0 265.5 L528.6 267.1 L527.3 268.6 L525.9 270.2 L524.6 271.8 L523.3 273.3 L522.1 274.9 L520.9 276.5 L519.7 278.0 L518.5 279.6 L517.3 281.2 L516.2 282.7 L515.1 284.3 L514.1 285.9 L513.0 287.5 L512.0 289.0 L511.1 290.6 L510.1 292.2 L509.2 293.7 L508.3 295.3 L507.4 296.9 L506.6 298.4 L505.8 300.0 L505.0 301.6 L504.2 303.2 L503.5 304.7 L502.8 306.3 L502.1 307.9 L501.5 309.4 L500.9 311.0 L500.3 312.6 L499.7 314.2 L499.2 315.7 L498.7 317.3 L498.2 318.9 L497.8 320.4 L497.4 322.0 L497.0 323.6 L496.6 325.2 L496.3 326.7 L496.0 328.3 L495.7 329.9 L495.5 331.5 L495.3 333.0 L495.1 334.6 L494.9 336.2 L494.8 337.7 L494.7 339.3 L494.7 340.9 L494.6 342.5 L494.6 344.0 L494.6 345.6 L494.7 347.2 L494.7 348.7 L494.9 350.3 L495.0 351.9 L495.2 353.4 L495.3 355.0 L495.6 356.6 L495.8 358.2 L496.1 359.7 L496.4 361.3 L496.7 362.9 L497.1 364.4 L497.5 366.0 M992.0 135.6 L991.1 134.0 L990.2 132.4 L989.2 130.8 L988.3 129.2 L987.3 127.5 L986.4 125.9 L985.4 124.3 L984.5 122.7 L983.5 121.1 L982.5 119.5 L981.5 117.9 L980.6 116.3 L979.6 114.7 L978.6 113.1 L977.6 111.5 L976.6 109.9 L975.6 108.3 L974.6 106.7 L973.5 105.1 L972.5 103.5 L971.5 101.9 L970.5 100.3 L969.4 98.8 L968.4 97.2 L967.4 95.6 L966.3 94.0 L965.3 92.4 L964.2 90.8 L963.2 89.3 L962.2 87.7 L961.1 86.1 L960.1 84.6 L959.0 83.0 L958.0 81.4 L956.9 79.9 L955.9 78.3 L954.8 76.8 L953.8 75.3 L952.7 73.7 L951.7 72.2 L950.7 70.7 L949.6 69.2 L948.6 67.7 L947.6 66.2 L946.6 64.7 L945.6 63.3 L944.7 61.8 L943.7 60.4 L942.8 59.0 L941.9 57.6 L941.0 56.2 L940.2 54.9 L939.4 53.6 L938.7 52.4 L938.0 51.1 L937.4 50.0 L936.9 48.9 L936.5 47.8 L936.2 46.9 L936.1 46.0 L936.1 45.3 L936.4 44.6 L937.0 44.1 L937.9 43.8 L939.0 43.6 L940.6 43.5 L942.5 43.7 L944.8 43.9 L947.5 44.4 L950.5 44.9 L953.9 45.6 L957.6 46.4 L961.6 47.4 L965.8 48.4 L970.3 49.4 L974.9 50.6 L825.6 51.7 L822.8 53.0 L820.0 54.3 L817.0 55.6 L813.9 56.9 L810.8 58.3 L807.6 59.7 L804.3 61.1 L801.0 62.6 L797.7 64.0 L794.3 65.5 L790.9 67.0 L787.5 68.5 L784.0 70.0 L780.5 71.5 L777.1 73.0 L773.6 74.5 L770.1 76.0 L766.6 77.6 L763.0 79.1 L759.5 80.7 L756.0 82.2 L752.5 83.8 L749.0 85.4 L745.5 86.9 L741.9 88.5 L738.4 90.1 L734.9 91.6 L731.4 93.2 L727.9 94.8 L724.4 96.4 L720.9 98.0 L717.5 99.6 L714.0 101.1 L710.6 102.7 L707.1 104.3 L703.7 105.9 L700.2 107.5 L696.8 109.1 L693.4 110.7 L690.0 112.3 L686.7 113.9 L683.3 115.5 L680.0 117.1 L676.6 118.7 L673.3 120.3 L670.0 121.9 L666.7 123.5 L663.5 125.1 L660.2 126.8 L657.0 128.4 L653.7 130.0 L650.5 131.6 L647.3 133.2 L644.2 134.8 L641.0 136.4 L637.9 138.0 L634.8 139.6 L631.7 141.3 L628.6 142.9 L625.5 144.5 L622.5 146.1 L619.5 147.7 L616.5 149.3 L613.5 150.9 L610.5 152.6 L607.6 154.2 L604.7 155.8 L601.8 157.4 L598.9 159.0 L596.1 160.6 L593.3 162.3 L590.5 163.9 L587.7 165.5 L584.9 167.1 L582.2 168.7 L579.5 170.4 L576.8 172.0 L574.1 173.6 L571.5 175.2 L568.9 176.8 L566.3 178.5 L563.8 180.1 L561.2 181.7 L558.7 183.3 L556.2 184.9 L553.8 186.6 L551.3 188.2 L548.9 189.8 L546.5 191.4 L544.2 193.1 L541.9 194.7 L539.6 196.3 L537.3 197.9 L535.0 199.5 L532.8 201.2 L530.6 202.8 L528.5 204.4 L526.3 206.0 L524.2 207.7 L522.2 209.3 L520.1 210.9 L518.1 212.5 L516.1 214.2 L514.1 215.8 L512.2 217.4 L510.3 219.0 L508.4 220.7 L506.6 222.3 L504.8 223.9 L503.0 225.5 L501.3 227.2 L499.5 228.8 L497.8 230.4 L496.2 232.0 L494.6 233.7 L493.0 235.3 L491.4 236.9 L489.8 238.5 L488.3 240.2 L486.9 241.8 L485.4 243.4 L484.0 245.0 L482.6 246.7 L481.3 248.3 L480.0 249.9 L478.7 251.5 L477.4 253.2 L476.2 254.8 L475.0 256.4 L473.9 258.0 L472.8 259.7 L471.7 261.3 L470.6 262.9 L469.6 264.5 L468.6 266.2 L467.6 267.8 L466.7 269.4 L465.8 271.0 L465.0 272.7 L464.1 274.3 L463.4 275.9 L462.6 277.5 L461.9 279.2 L461.2 280.8 L460.5 282.4 L459.9 284.1 L459.3 285.7 L458.7 287.3 L458.2 288.9 L457.7 290.6 L457.3 292.2 L456.9 293.8 L456.5 295.4 L456.1 297.1 L455.8 298.7 L455.5 300.3 L455.3 301.9 L455.0 303.6 L454.9 305.2 L454.7 306.8 L454.6 308.4 L454.5 310.1 L454.5 311.7 L454.5 313.3 L454.5 315.0 L454.5 316.6 L454.6 318.2 L454.7 319.8 L454.9 321.5 L455.1 323.1 L455.3 324.7 L455.6 326.3 L455.9 328.0 L456.2 329.6 L456.6 331.2 L456.9 332.8 L457.4 334.5 L457.8 336.1 L458.3 337.7 L458.9 339.4 L459.4 341.0 L460.0 342.6 L460.7 344.2 L461.3 345.9 L462.0 347.5 L462.8 349.1 L463.5 350.7 L464.3 352.4 L465.2 354.0 L466.0 355.6 L466.9 357.2 L467.8 358.9 L468.8 360.5 L469.8 362.1 L470.8 363.7 L471.9 365.4 L473.0 367.0 M1002.9 130.1 L1002.1 130.8 L1001.2 131.5 L1000.4 132.3 L999.6 133.0 L998.8 133.8 L998.0 134.6 L997.2 135.4 L996.5 136.3 L995.7 137.1 L995.0 138.0 L994.3 138.9 L993.5 139.7 L992.8 140.6 L992.1 141.6 L991.4 142.5 L990.7 143.4 L990.0 144.4 L989.3 145.4 L988.7 146.4 L988.0 147.4 L987.3 148.4 L986.7 149.4 L986.0 150.4 L985.3 151.5 L984.7 152.5 L984.0 153.6 L983.4 154.6 L982.8 155.7 L982.1 156.8 L981.5 157.9 L980.8 159.0 L980.2 160.1 L979.6 161.3 L978.9 162.4 L978.3 163.6 L977.7 164.7 L977.0 165.9 L976.4 167.0 L975.8 168.2 L975.1 169.4 L974.5 170.6 L973.9 171.8 L973.2 173.0 L972.6 174.2 L972.0 175.4 L971.4 176.6 L970.7 177.8 L970.1 179.1 L969.4 180.3 L968.8 181.6 L968.2 182.8 L967.5 184.1 L966.9 185.3 L966.2 186.6 L965.6 187.9 L965.0 189.1 L964.3 190.4 L963.7 191.7 L963.0 193.0 L962.4 194.3 L961.7 195.6 L961.0 196.9 L960.4 198.2 L959.7 199.5 L959.1 200.8 L958.4 202.1 L957.7 203.4 L957.1 204.8 L956.4 206.1 L955.7 207.4 L955.1 208.7 L954.4 210.1 L953.7 211.4 L953.0 212.8 L952.3 214.1 L951.7 215.4 L951.0 216.8 L950.3 218.2 L949.6 219.5 L948.9 220.9 L948.2 222.2 L947.5 223.6 L946.8 225.0 L946.1 226.3 L945.4 227.7 L944.7 229.1 L944.0 230.4 L943.3 231.8 L942.6 233.2 L941.8 234.6 L941.1 236.0 L940.4 237.3 L939.7 238.7 L939.0 240.1 L938.3 241.5 L937.5 242.9 L936.8 244.3 L936.1 245.7 L935.3 247.1 L934.6 248.5 L933.9 249.9 L933.1 251.3 L932.4 252.7 L931.7 254.1 L930.9 255.5 L930.2 256.9 L929.4 258.3 L928.7 259.7 L927.9 261.1 L927.2 262.5 L926.4 264.0 L925.7 265.4 L924.9 266.8 L924.2 268.2 L923.4 269.6 L922.7 271.0 L921.9 272.5 L921.2 273.9 L920.4 275.3 L919.6 276.7 L918.9 278.1 L918.1 279.6 L917.4 281.0 L916.6 282.4 L915.8 283.8 L915.1 285.3 L914.3 286.7 L913.5 288.1 L912.8 289.5 L912.0 291.0 L911.2 292.4 L910.5 293.8 L909.7 295.3 L908.9 296.7 L908.1 298.1 L907.4 299.5 L906.6 301.0 L905.8 302.4 L905.1 303.8 L904.3 305.3 L903.5 306.7 L902.7 308.1 L902.0 309.6 L901.2 311.0 L900.4 312.4 L899.7 313.9 L898.9 315.3 L898.1 316.7 L897.3 318.2 L896.6 319.6 L895.8 321.0 L895.0 322.5 L894.3 323.9 L893.5 325.3 L892.7 326.8 L892.0 328.2 L891.2 329.6 L890.4 331.1 L889.7 332.5 L888.9 333.9 L888.1 335.4 L887.4 336.8 L886.6 338.2 L885.8 339.7 L885.1 341.1 L884.3 342.5 L883.6 343.9 L882.8 345.4 L882.0 346.8 L881.3 348.2 L880.5 349.7 L879.8 351.1 L879.0 352.5 L878.3 353.9 L877.5 355.4 L876.8 356.8 L876.0 358.2 L875.3 359.6 L874.6 361.1 L873.8 362.5 L873.1 363.9 L872.3 365.3 L871.6 366.7 L870.9 368.2 L870.1 369.6 L869.4 371.0 L868.7 372.4 L867.9 373.8 L867.2 375.2 L866.5 376.7 L865.8 378.1 L865.0 379.5 L864.3 380.9 L863.6 382.3 L862.9 383.7 L862.2 385.1 L861.5 386.5 L860.8 387.9 L860.1 389.3 L859.4 390.7 L858.7 392.1 L858.0 393.5 L857.3 394.9 L856.6 396.3 L855.9 397.7 L855.2 399.1 L854.5 400.5 L853.8 401.9 L853.2 403.3 L852.5 404.6 L851.8 406.0 L851.1 407.4 L850.5 408.8 L849.8 410.2 L849.1 411.5 L848.5 412.9 L847.8 414.3 L847.1 415.6 L846.5 417.0 L845.8 418.4 L845.2 419.7 L844.5 421.1 L843.9 422.4 L843.2 423.8 L842.6 425.1 L842.0 426.5 L841.3 427.8 L840.7 429.2 L840.1 430.5 L839.4 431.8 L838.8 433.2 L838.2 434.5 L837.6 435.8 L837.0 437.2 L836.3 438.5 L835.7 439.8 L835.1 441.1 L834.5 442.4 L833.9 443.7 L833.3 445.0 M1050.0 91.8 L1046.4 90.7 L1042.8 89.6 L1039.3 88.5 L1035.8 87.5 L1032.3 86.5 L1029.0 85.5 L1025.6 84.5 L1022.4 83.6 L1019.2 82.7 L1016.0 81.9 L1013.0 81.0 L1010.0 80.2 L1007.0 79.5 L1004.2 78.8 L1001.4 78.1 L998.7 77.5 L996.1 76.9 L993.6 76.3 L991.1 75.8 L988.8 75.4 L986.5 75.0 L984.3 74.7 L982.2 74.4 L980.2 74.1 L978.3 74.0 L976.5 73.8 L974.8 73.8 L973.1 73.7 L971.5 73.8 L970.1 73.9 L968.6 74.0 L967.3 74.2 L966.0 74.5 L964.9 74.8 L963.7 75.2 L962.7 75.6 L961.7 76.1 L960.7 76.6 L959.8 77.2 L959.0 77.8 L958.2 78.4 L957.5 79.1 L956.7 79.9 L956.1 80.6 L955.4 81.4 L954.8 82.3 L954.3 83.2 L953.7 84.1 L953.2 85.0 L952.7 86.0 L952.2 87.0 L951.8 88.0 L951.3 89.1 L950.9 90.2 L950.5 91.3 L950.1 92.4 L949.8 93.5 L949.4 94.7 L949.0 95.8 L948.7 97.0 L948.4 98.3 L948.0 99.5 L947.7 100.7 L947.4 102.0 L947.1 103.3 L946.8 104.5 L946.5 105.8 L946.2 107.1 L945.9 108.5 L945.6 109.8 L945.3 111.1 L945.0 112.5 L944.7 113.8 L944.4 115.2 L944.2 116.6 L943.9 118.0 L943.6 119.3 L943.3 120.7 L943.0 122.1 L942.8 123.6 L942.5 125.0 L942.2 126.4 L941.9 127.8 L941.7 129.3 L941.4 130.7 L941.1 132.1 L940.8 133.6 L940.5 135.0 L940.3 136.5 L940.0 138.0 L939.7 139.4 L939.4 140.9 L939.1 142.4 L938.8 143.9 L938.5 145.3 L938.3 146.8 L938.0 148.3 L937.7 149.8 L937.4 151.3 L937.1 152.8 L936.8 154.3 L936.5 155.8 L936.2 157.3 L935.9 158.8 L935.6 160.3 L935.3 161.8 L935.0 163.3 L934.6 164.9 L934.3 166.4 L934.0 167.9 L933.7 169.4 L933.4 171.0 L933.1 172.5 L932.8 174.0 L932.4 175.5 L932.1 177.1 L931.8 178.6 L931.5 180.1 L931.1 181.7 L930.8 183.2 L930.5 184.8 L930.1 186.3 L929.8 187.8 L929.5 189.4 L929.1 190.9 L928.8 192.5 L928.4 194.0 L928.1 195.6 L927.7 197.1 L927.4 198.7 L927.0 200.2 L926.7 201.8 L926.3 203.3 L926.0 204.9 L925.6 206.5 L925.3 208.0 L924.9 209.6 L924.6 211.1 L924.2 212.7 L923.8 214.2 L923.5 215.8 L923.1 217.4 L922.7 218.9 L922.4 220.5 L922.0 222.1 L921.6 223.6 L921.2 225.2 L920.9 226.8 L920.5 228.3 L920.1 229.9 L919.7 231.5 L919.4 233.0 L919.0 234.6 L918.6 236.2 L918.2 237.7 L917.8 239.3 L917.4 240.9 L917.1 242.4 L916.7 244.0 L916.3 245.6 L915.9 247.2 L915.5 248.7 L915.1 250.3 L914.7 251.9 L914.3 253.5 L913.9 255.0 L913.5 256.6 L913.1 258.2 L912.7 259.8 L912.4 261.3 L912.0 262.9 L911.6 264.5 L911.2 266.1 L910.8 267.6 L910.4 269.2 L910.0 270.8 L909.6 272.4 L909.2 274.0 L908.8 275.5 L908.4 277.1 L907.9 278.7 L907.5 280.3 L907.1 281.9 L906.7 283.4 L906.3 285.0 L905.9 286.6 L905.5 288.2 L905.1 289.8 L904.7 291.3 L904.3 292.9 L903.9 294.5 L903.5 296.1 L903.1 297.7 L902.7 299.2 L902.3 300.8 L901.9 302.4 L901.5 304.0 L901.1 305.6 L900.7 307.1 L900.2 308.7 L899.8 310.3 L899.4 311.9 L899.0 313.5 L898.6 315.1 L898.2 316.6 L897.8 318.2 L897.4 319.8 L897.0 321.4 L896.6 323.0 L896.2 324.5 L895.8 326.1 L895.4 327.7 L895.0 329.3 L894.6 330.9 L894.2 332.5 L893.8 334.0 L893.4 335.6 L893.0 337.2 L892.6 338.8 L892.2 340.4 L891.8 341.9 L891.4 343.5 L891.0 345.1 L890.6 346.7 L890.2 348.3 L889.8 349.8 L889.4 351.4 L889.1 353.0 L888.7 354.6 L888.3 356.2 L887.9 357.7 L887.5 359.3 L887.1 360.9 L886.7 362.5 L886.3 364.1 L886.0 365.6 L885.6 367.2 L885.2 368.8 L884.8 370.4 L884.4 372.0 L884.1 373.5 L883.7 375.1 L883.3 376.7 L882.9 378.3 L882.6 379.8 L882.2 381.4 L881.8 383.0 L881.5 384.6 L881.1 386.1 L880.7 387.7 L880.4 389.3 L880.0 390.9 L879.7 392.4 L879.3 394.0 L879.0 395.6 L878.6 397.2 L878.2 398.7 L877.9 400.3 L877.5 401.9 L877.2 403.4 L876.9 405.0 L876.5 406.6 L876.2 408.2 L875.8 409.7 L875.5 411.3 L875.1 412.9 L874.8 414.4 L874.5 416.0 L874.2 417.5 L873.8 419.1 L873.5 420.7 L873.2 422.2 L872.8 423.8 L872.5 425.4 L872.2 426.9 L871.9 428.5 L871.6 430.0 L871.3 431.6 L871.0 433.2 L870.6 434.7 L870.3 436.3 L870.0 437.8 L869.7 439.4 L869.4 440.9 L869.1 442.5 L868.8 444.0 L868.5 445.6 L868.2 447.1 L868.0 448.7 M1153.0 134.0 L1149.3 132.4 L1145.6 130.9 L1141.8 129.3 L1138.1 127.7 L1134.3 126.2 L1130.5 124.6 L1126.7 123.0 L1122.9 121.5 L1119.1 119.9 L1115.3 118.4 L1111.5 116.8 L1107.6 115.3 L1103.8 113.7 L1099.9 112.2 L1096.0 110.7 L1092.2 109.1 L1088.3 107.6 L1084.4 106.1 L1080.5 104.5 L1076.7 103.0 L1072.8 101.5 L1068.9 100.0 L1065.0 98.5 L1061.1 97.0 L1057.2 95.5 L1053.3 94.0 L1049.5 92.5 L1045.6 91.1 L1041.7 89.6 L1037.9 88.1 L1034.0 86.7 L1030.2 85.2 L1026.4 83.8 L1022.5 82.4 L1018.8 81.0 L1015.0 79.6 L1011.2 78.2 L1007.5 76.8 L1003.8 75.5 L1000.2 74.1 L996.5 72.8 L992.9 71.5 L989.4 70.2 L985.8 69.0 L982.4 67.8 L979.0 66.6 L975.6 65.4 L972.3 64.3 L969.1 63.2 L965.9 62.1 L962.9 61.1 L959.9 60.2 L957.0 59.3 L954.2 58.4 L951.5 57.6 L948.9 56.9 L946.4 56.3 L944.1 55.7 L941.8 55.2 L939.7 54.8 L937.7 54.5 L935.8 54.3 L934.1 54.2 L932.4 54.2 L930.9 54.3 L929.4 54.5 L928.1 54.7 L926.8 55.1 L925.6 55.6 L924.5 56.1 L923.5 56.7 L922.5 57.4 L921.5 58.2 L920.6 59.0 L919.7 59.9 L918.9 60.8 L918.0 61.8 L917.2 62.8 L916.4 63.9 L915.6 65.0 L914.9 66.2 L914.1 67.4 L913.4 68.6 L912.6 69.8 L911.9 71.1 L911.2 72.4 L910.4 73.7 L909.7 75.1 L909.0 76.4 L908.3 77.8 L907.5 79.1 L906.8 80.5 L906.1 81.9 L905.4 83.4 L904.7 84.8 L903.9 86.2 L903.2 87.7 L902.5 89.1 L901.8 90.6 L901.1 92.1 L900.4 93.6 L899.6 95.0 L898.9 96.5 L898.2 98.0 L897.5 99.5 L896.8 101.0 L896.1 102.6 L895.3 104.1 L894.6 105.6 L893.9 107.1 L893.2 108.7 L892.5 110.2 L891.8 111.7 L891.0 113.3 L890.3 114.8 L889.6 116.4 L888.9 117.9 L888.2 119.5 L887.5 121.0 L886.8 122.6 L886.0 124.1 L885.3 125.7 L884.6 127.2 L883.9 128.8 L883.2 130.4 L882.5 131.9 L881.8 133.5 L881.1 135.1 L880.4 136.7 L879.7 138.2 L879.0 139.8 L878.3 141.4 L877.6 143.0 L876.9 144.5 L876.2 146.1 L875.5 147.7 L874.8 149.3 L874.1 150.9 L873.4 152.5 L872.7 154.0 L872.0 155.6 L871.4 157.2 L870.7 158.8 L870.0 160.4 L869.3 162.0 L868.7 163.6 L868.0 165.2 L867.3 166.8 L866.7 168.3 L866.0 169.9 L865.3 171.5 L864.7 173.1 L864.0 174.7 L863.4 176.3 L862.7 177.9 L862.1 179.5 L861.4 181.1 L860.8 182.7 L860.1 184.3 L859.5 185.9 L858.9 187.5 L858.2 189.1 L857.6 190.7 L857.0 192.3 L856.4 193.9 L855.7 195.5 L855.1 197.1 L854.5 198.7 L853.9 200.3 L853.3 201.9 L852.7 203.5 L852.1 205.1 L851.5 206.7 L850.9 208.3 L850.3 209.9 L849.8 211.5 L849.2 213.2 L848.6 214.8 L848.0 216.4 L847.5 218.0 L846.9 219.6 L846.4 221.2 L845.8 222.8 L845.3 224.4 L844.7 226.0 L844.2 227.6 L843.6 229.2 L843.1 230.8 L842.6 232.4 L842.0 234.0 L841.5 235.7 L841.0 237.3 L840.5 238.9 L840.0 240.5 L839.5 242.1 L839.0 243.7 L838.5 245.3 L838.0 246.9 L837.5 248.5 L837.1 250.1 L836.6 251.8 L836.1 253.4 L835.7 255.0 L835.2 256.6 L834.7 258.2 L834.3 259.8 L833.9 261.4 L833.4 263.0 L833.0 264.6 L832.6 266.2 L832.1 267.9 L831.7 269.5 L831.3 271.1 L830.9 272.7 L830.5 274.3 L830.1 275.9 L829.7 277.5 L829.3 279.1 L829.0 280.8 L828.6 282.4 L828.2 284.0 L827.8 285.6 L827.5 287.2 L827.1 288.8 L826.8 290.4 L826.5 292.0 L826.1 293.6 L825.8 295.3 L825.5 296.9 L825.1 298.5 L824.8 300.1 L824.5 301.7 L824.2 303.3 L823.9 304.9 L823.6 306.5 L823.4 308.2 L823.1 309.8 L822.8 311.4 L822.6 313.0 L822.3 314.6 L822.0 316.2 L821.8 317.8 L821.6 319.4 L821.3 321.1 L821.1 322.7 L820.9 324.3 L820.7 325.9 L820.4 327.5 L820.2 329.1 L820.0 330.7 L819.8 332.4 L819.7 334.0 L819.5 335.6 L819.3 337.2 L819.1 338.8 L819.0 340.4 L818.8 342.0 L818.7 343.6 L818.5 345.3 L818.4 346.9 L818.3 348.5 L818.1 350.1 L818.0 351.7 L817.9 353.3 L817.8 354.9 L817.7 356.5 L817.6 358.1 L817.5 359.8 L817.5 361.4 L817.4 363.0 L817.3 364.6 L817.3 366.2 L817.2 367.8 L817.2 369.4 L817.1 371.0 L817.1 372.7 L817.0 374.3 L817.0 375.9 L817.0 377.5 L817.0 379.1 L817.0 380.7 L817.0 382.3 L817.0 383.9 L817.0 385.5 L817.0 387.2 L817.1 388.8 L817.1 390.4 L817.2 392.0 L817.2 393.6 L817.3 395.2 L817.3 396.8 L817.4 398.4 L817.5 400.0 L817.5 401.6 L817.6 403.2 L817.7 404.9 L817.8 406.5 L817.9 408.1 L818.0 409.7 L818.1 411.3 L818.3 412.9 L818.4 414.5 L818.5 416.1 L818.7 417.7 L818.8 419.3 L819.0 420.9 L819.1 422.5 L819.3 424.1 L819.5 425.7 L819.6 427.4 L819.8 429.0 L820.0 430.6 L820.2 432.2 L820.4 433.8 L820.6 435.4 L820.8 437.0 L821.1 438.6 L821.3 440.2 L821.5 441.8 L821.8 443.4 L822.0 445.0 L822.2 446.6 L822.5 448.2 L822.8 449.8 L823.0 451.4 L823.3 453.0 M1144.0 154.5 L1142.9 153.2 L1141.7 151.9 L1140.6 150.6 L1139.5 149.3 L1138.3 148.0 L1137.2 146.7 L1136.1 145.5 L1135.0 144.2 L1133.8 143.0 L1132.7 141.7 L1131.6 140.5 L1130.5 139.2 L1129.4 138.0 L1128.3 136.8 L1127.2 135.6 L1126.1 134.4 L1125.0 133.2 L1124.0 132.1 L1122.9 130.9 L1121.9 129.8 L1120.9 128.6 L1119.9 127.5 L1118.9 126.4 L1117.9 125.3 L1117.0 124.2 L1116.0 123.1 L1115.1 122.1 L1114.3 121.1 L1113.4 120.0 L1112.6 119.0 L1111.8 118.0 L1111.0 117.1 L1110.3 116.1 L1109.6 115.2 L1108.9 114.2 L1108.3 113.3 L1107.7 112.5 L1107.1 111.6 L1106.6 110.8 L1106.2 109.9 L1105.8 109.1 L1105.4 108.4 L1105.1 107.6 L1104.8 106.9 L1104.6 106.2 L1104.5 105.5 L1104.4 104.9 L1104.4 104.3 L1104.5 103.7 L1104.6 103.1 L1104.8 102.6 L1105.1 102.1 L1105.4 101.6 L1105.9 101.2 L1106.4 100.8 L1107.0 100.4 L1107.6 100.1 L1108.4 99.7 L1109.3 99.5 L1110.2 99.2 L1111.3 99.0 L1112.4 98.8 L1113.6 98.7 L1115.0 98.6 L1116.4 98.5 L1117.9 98.5 L1119.6 98.5 M683.6 98.5 L685.0 98.6 L686.3 98.7 L687.5 98.9 L688.6 99.0 L689.7 99.3 L690.6 99.5 L691.4 99.8 L692.1 100.1 L692.8 100.4 L693.3 100.8 L693.8 101.2 L694.2 101.7 L694.5 102.2 L694.8 102.7 L694.9 103.2 L695.0 103.8 L695.0 104.4 L695.0 105.0 L694.8 105.6 L694.6 106.3 L694.4 107.0 L694.1 107.7 L693.7 108.5 L693.3 109.2 L692.9 110.0 L692.3 110.9 L691.8 111.7 L691.2 112.6 L690.5 113.4 L689.8 114.4 L689.1 115.3 L688.3 116.2 L687.5 117.2 L686.7 118.2 L685.8 119.1 L684.9 120.2 L684.0 121.2 L683.1 122.2 L682.1 123.3 L681.1 124.4 L680.1 125.4 L679.1 126.5 L678.0 127.6 L676.9 128.8 L675.8 129.9 L674.7 131.1 L673.6 132.2 L672.5 133.4 L671.4 134.6 L670.2 135.8 L669.0 137.0 L667.9 138.2 L666.7 139.4 L665.5 140.6 L664.3 141.9 L663.1 143.1 L662.0 144.4 L660.8 145.6 L659.6 146.9 L658.3 148.2 L657.1 149.5 L655.9 150.7 L654.7 152.0 L653.5 153.4 L652.3 154.7 L651.1 156.0 L649.9 157.3 L648.8 158.6 L647.6 160.0 L646.4 161.3 L645.2 162.7 L644.0 164.0 L642.9 165.4 L641.7 166.7 L640.6 168.1 L639.4 169.5 L638.3 170.8 L637.2 172.2 L636.0 173.6 L634.9 175.0 L633.8 176.4 L632.7 177.8 L631.7 179.1 L630.6 180.6 L629.5 182.0 L628.5 183.4 L627.4 184.8 L626.4 186.2 L625.4 187.6 L624.4 189.0 L623.4 190.4 L622.4 191.9 L621.5 193.3 L620.5 194.7 L619.6 196.2 L618.6 197.6 L617.7 199.0 L616.8 200.5 L616.0 201.9 L615.1 203.4 L614.2 204.8 L613.4 206.3 L612.6 207.7 L611.8 209.2 L611.0 210.6 L610.2 212.1 L609.5 213.5 L608.7 215.0 L608.0 216.5 L607.3 217.9 L606.6 219.4 L605.9 220.9 L605.3 222.3 L604.6 223.8 L604.0 225.3 L603.4 226.7 L602.8 228.2 L602.2 229.7 L601.7 231.2 L601.1 232.7 L600.6 234.1 L600.1 235.6 L599.6 237.1 L599.2 238.6 L598.7 240.1 L598.3 241.6 L597.9 243.0 L597.5 244.5 L597.1 246.0 L596.8 247.5 L596.4 249.0 L596.1 250.5 L595.8 252.0 L595.5 253.5 L595.3 255.0 L595.1 256.5 L594.8 258.0 L594.6 259.5 L594.5 261.0 L594.3 262.5 L594.2 264.0 L594.0 265.5 L593.9 267.0 L593.8 268.5 L593.8 270.0 L593.7 271.5 L593.7 273.0 L593.7 274.5 L593.7 276.0 L593.8 277.5 L593.8 279.0 L593.9 280.5 L594.0 282.0 M990.4 176.8 L988.6 176.1 L986.8 175.4 L985.0 174.8 L983.3 174.1 L981.5 173.5 L979.7 172.9 L977.9 172.2 L976.2 171.6 L974.4 171.0 L972.7 170.5 L970.9 169.9 L969.2 169.4 L967.4 168.8 L965.7 168.3 L964.0 167.8 L962.2 167.3 L960.5 166.8 L958.8 166.3 L957.1 165.9 L955.4 165.4 L953.7 165.0 L952.0 164.6 L950.3 164.2 L948.6 163.8 L946.9 163.5 L945.2 163.1 L943.5 162.8 L941.8 162.5 L940.2 162.1 L938.5 161.9 L936.8 161.6 L935.2 161.3 L933.5 161.1 L931.8 160.9 L930.2 160.6 L928.5 160.5 L926.9 160.3 L925.2 160.1 L923.6 160.0 L921.9 159.8 L920.3 159.7 L918.7 159.6 L917.0 159.6 L915.4 159.5 L913.7 159.4 L912.1 159.4 L910.5 159.4 L908.9 159.4 L907.2 159.4 L905.6 159.5 L904.0 159.5 L902.3 159.6 L900.7 159.7 L899.1 159.8 L897.4 159.9 L895.8 160.0 L894.2 160.2 L892.5 160.4 L890.9 160.5 L889.3 160.7 L887.6 161.0 L886.0 161.2 L884.4 161.5 L882.7 161.7 L881.1 162.0 L879.4 162.3 L877.8 162.6 L876.1 162.9 L874.5 163.3 L872.8 163.6 L871.2 164.0 L869.5 164.4 L867.9 164.8 L866.2 165.2 L864.5 165.7 L862.9 166.1 L861.2 166.6 L859.5 167.0 L857.8 167.5 L856.1 168.0 L854.5 168.6 L852.8 169.1 L851.1 169.6 L849.4 170.2 L847.7 170.8 L846.0 171.3 L844.3 171.9 L842.6 172.5 L840.8 173.2 L839.1 173.8 L837.4 174.4 L835.7 175.1 L834.0 175.8 L832.2 176.5 L830.5 177.1 L828.8 177.8 L827.0 178.6 L825.3 179.3 L823.5 180.0 L821.8 180.8 L820.0 181.5 L818.3 182.3 L816.5 183.1 L814.8 183.9 L813.0 184.7 L811.2 185.5 L809.5 186.3 L807.7 187.1 L805.9 187.9 L804.2 188.8 L802.4 189.6 L800.6 190.5 L798.8 191.4 L797.1 192.2 L795.3 193.1 L793.5 194.0 L791.7 194.9 L789.9 195.8 L788.1 196.8 L786.4 197.7 L784.6 198.6 L782.8 199.6 L781.0 200.5 L779.2 201.5 L777.4 202.4 L775.6 203.4 L773.8 204.4 L772.1 205.3 L770.3 206.3 L768.5 207.3 L766.7 208.3 L764.9 209.3 L763.1 210.3 L761.3 211.4 L759.6 212.4 L757.8 213.4 L756.0 214.4 L754.2 215.5 L752.5 216.5 L750.7 217.6 L748.9 218.6 L747.1 219.7 L745.4 220.8 L743.6 221.8 L741.9 222.9 L740.1 224.0 L738.4 225.1 L736.6 226.2 L734.9 227.3 L733.1 228.4 L731.4 229.5 L729.6 230.6 L727.9 231.7 L726.2 232.8 L724.5 233.9 L722.8 235.0 L721.0 236.2 L719.3 237.3 L717.6 238.4 L715.9 239.6 L714.2 240.7 L712.6 241.8 L710.9 243.0 L709.2 244.1 L707.5 245.3 L705.9 246.4 L704.2 247.6 L702.6 248.8 L700.9 249.9 L699.3 251.1 L697.7 252.3 L696.0 253.4 L694.4 254.6 L692.8 255.8 L691.2 257.0 L689.6 258.1 L688.0 259.3 L686.5 260.5 L684.9 261.7 L683.3 262.9 L681.8 264.1 L680.2 265.3 L678.7 266.5 L677.2 267.7 L675.6 268.9 L674.1 270.1 L672.6 271.3 L671.1 272.5 L669.6 273.7 L668.2 274.9 L666.7 276.1 L665.3 277.3 L663.8 278.5 L662.4 279.8 L660.9 281.0 L659.5 282.2 L658.1 283.4 L656.7 284.6 L655.3 285.9 L654.0 287.1 L652.6 288.3 L651.2 289.5 L649.9 290.8 L648.6 292.0 L647.2 293.2 L645.9 294.4 L644.6 295.7 L643.3 296.9 L642.1 298.1 L640.8 299.4 L639.5 300.6 L638.3 301.8 L637.1 303.1 L635.8 304.3 L634.6 305.5 L633.4 306.8 L632.2 308.0 L631.1 309.2 L629.9 310.5 L628.8 311.7 L627.6 313.0 L626.5 314.2 L625.4 315.4 L624.3 316.7 L623.2 317.9 L622.1 319.1 L621.0 320.4 L620.0 321.6 L618.9 322.9 L617.9 324.1 L616.9 325.3 L615.9 326.6 L614.9 327.8 L613.9 329.1 L613.0 330.3 L612.0 331.5 L611.1 332.8 L610.1 334.0 L609.2 335.2 L608.3 336.5 L607.4 337.7 L606.6 338.9 L605.7 340.2 L604.9 341.4 L604.0 342.6 L603.2 343.9 L602.4 345.1 L601.6 346.3 L600.8 347.6 L600.0 348.8 L599.3 350.0 L598.5 351.2 L597.8 352.5 L597.1 353.7 L596.4 354.9 L595.7 356.1 L595.0 357.3 L594.3 358.6 L593.6 359.8 L593.0 361.0 M1088.0 182.0 L1085.9 180.6 L1083.8 179.2 L1081.7 177.7 L1079.6 176.3 L1077.5 174.9 L1075.4 173.5 L1073.2 172.1 L1071.1 170.7 L1069.0 169.3 L1066.8 167.9 L1064.7 166.5 L1062.5 165.1 L1060.3 163.7 L1058.2 162.4 L1056.0 161.0 L1053.8 159.6 L1051.7 158.3 L1049.5 156.9 L1047.3 155.6 L1045.1 154.2 L1042.9 152.9 L1040.7 151.5 L1038.5 150.2 L1036.3 148.9 L1034.2 147.6 L1032.0 146.3 L1029.8 145.0 L1027.6 143.7 L1025.4 142.4 L1023.2 141.1 L1021.0 139.8 L1018.8 138.6 L1016.6 137.3 L1014.4 136.1 L1012.3 134.8 L1010.1 133.6 L1007.9 132.4 L1005.7 131.2 L1003.6 130.0 L1001.4 128.8 L999.3 127.6 L997.1 126.4 L995.0 125.3 L992.9 124.1 L990.7 123.0 L988.6 121.9 L986.5 120.8 L984.4 119.7 L982.3 118.6 L980.2 117.5 L978.2 116.5 L976.1 115.5 L974.0 114.5 L972.0 113.5 L970.0 112.5 L968.0 111.5 L966.0 110.6 L964.0 109.7 L962.0 108.8 L960.0 107.9 L958.1 107.1 L956.1 106.2 L954.2 105.4 L952.3 104.6 L950.4 103.9 L948.5 103.2 L946.7 102.5 L944.8 101.8 L943.0 101.1 L941.2 100.5 L939.3 99.9 L937.6 99.3 L935.8 98.8 L934.0 98.3 L932.3 97.9 L930.5 97.4 L928.8 97.0 L927.1 96.7 L925.4 96.3 L923.7 96.0 L922.0 95.8 L920.3 95.5 L918.7 95.4 L917.0 95.2 L915.4 95.1 L913.7 95.0 L912.1 95.0 L910.5 95.0 L908.8 95.0 L907.2 95.1 L905.6 95.2 L904.0 95.3 L902.4 95.5 L900.8 95.7 L899.1 96.0 L897.5 96.3 L895.9 96.6 L894.3 97.0 L892.7 97.4 L891.0 97.8 L889.4 98.2 L887.7 98.7 L886.1 99.3 L884.4 99.8 L882.8 100.4 L881.1 101.0 L879.4 101.7 L877.8 102.3 L876.1 103.0 L874.4 103.8 L872.7 104.5 L870.9 105.3 L869.2 106.1 L867.5 106.9 L865.7 107.8 L864.0 108.6 L862.2 109.5 L860.5 110.5 L858.7 111.4 L856.9 112.3 L855.1 113.3 L853.3 114.3 L851.5 115.3 L849.7 116.3 L847.9 117.4 L846.0 118.4 L844.2 119.5 L842.3 120.6 L840.5 121.7 L838.6 122.8 L836.8 123.9 L834.9 125.1 L833.0 126.2 L831.2 127.4 L829.3 128.6 L827.4 129.8 L825.5 131.0 L823.6 132.2 L821.7 133.4 L819.8 134.6 L817.9 135.9 L816.0 137.1 L814.1 138.4 L812.2 139.6 L810.3 140.9 L808.4 142.2 L806.4 143.5 L804.5 144.8 L802.6 146.1 L800.7 147.4 L798.8 148.7 L796.9 150.0 L795.0 151.3 L793.0 152.7 L791.1 154.0 L789.2 155.3 L787.3 156.7 L785.4 158.1 L783.5 159.4 L781.6 160.8 L779.7 162.2 L777.8 163.5 L775.9 164.9 L774.1 166.3 L772.2 167.7 L770.3 169.1 L768.4 170.5 L766.5 171.9 L764.7 173.3 L762.8 174.7 L761.0 176.1 L759.1 177.5 L757.3 178.9 L755.4 180.3 L753.6 181.8 L751.8 183.2 L750.0 184.6 L748.2 186.1 L746.4 187.5 L744.6 188.9 L742.8 190.4 L741.0 191.8 L739.2 193.3 L737.5 194.7 L735.7 196.2 L734.0 197.6 L732.2 199.1 L730.5 200.5 L728.8 202.0 L727.1 203.5 L725.4 204.9 L723.7 206.4 L722.0 207.8 L720.3 209.3 L718.7 210.8 L717.0 212.3 L715.4 213.7 L713.7 215.2 L712.1 216.7 L710.5 218.2 L708.9 219.6 L707.3 221.1 L705.7 222.6 L704.2 224.1 L702.6 225.6 L701.1 227.1 L699.6 228.6 L698.0 230.1 L696.5 231.5 L695.1 233.0 L693.6 234.5 L692.1 236.0 L690.7 237.5 L689.2 239.0 L687.8 240.5 L686.4 242.0 L685.0 243.5 L683.6 245.0 L682.2 246.5 L680.9 248.0 L679.5 249.5 L678.2 251.0 L676.9 252.5 L675.6 254.0 L674.3 255.5 L673.0 257.0 L671.8 258.6 L670.5 260.1 L669.3 261.6 L668.1 263.1 L666.9 264.6 L665.7 266.1 L664.5 267.6 L663.4 269.1 L662.2 270.6 L661.1 272.2 L660.0 273.7 L658.9 275.2 L657.9 276.7 L656.8 278.2 L655.8 279.7 L654.7 281.2 L653.7 282.8 L652.7 284.3 L651.8 285.8 L650.8 287.3 L649.9 288.8 L648.9 290.3 L648.0 291.9 L647.1 293.4 L646.3 294.9 L645.4 296.4 L644.6 297.9 L643.7 299.5 L642.9 301.0 L642.1 302.5 L641.4 304.0 L640.6 305.5 L639.9 307.1 L639.2 308.6 L638.4 310.1 L637.8 311.6 L637.1 313.1 L636.4 314.7 L635.8 316.2 L635.2 317.7 L634.6 319.2 L634.0 320.8 L633.5 322.3 L632.9 323.8 L632.4 325.3 L631.9 326.8 L631.4 328.4 L630.9 329.9 L630.5 331.4 L630.0 332.9 L629.6 334.4 L629.2 336.0 L628.8 337.5 L628.5 339.0 L628.1 340.5 L627.8 342.0 L627.5 343.6 L627.2 345.1 L626.9 346.6 L626.7 348.1 L626.4 349.6 L626.2 351.2 L626.0 352.7 L625.8 354.2 L625.7 355.7 L625.5 357.2 L625.4 358.7 L625.3 360.3 L625.2 361.8 L625.1 363.3 L625.1 364.8 L625.1 366.3 L625.0 367.8 L625.0 369.3 L625.1 370.9 L625.1 372.4 L625.1 373.9 L625.2 375.4 L625.3 376.9 L625.4 378.4 L625.5 379.9 L625.7 381.4 L625.9 382.9 L626.0 384.4 L626.2 386.0 L626.4 387.5 L626.7 389.0 L626.9 390.5 L627.2 392.0 L627.5 393.5 L627.8 395.0 L628.1 396.5 L628.4 398.0 L628.8 399.5 L629.2 401.0 L629.5 402.5 L630.0 404.0 L630.4 405.5 L630.8 407.0 L631.3 408.4 L631.7 409.9 L632.2 411.4 L632.7 412.9 L633.2 414.4 L633.8 415.9 L634.3 417.4 L634.9 418.9 L635.5 420.3 L636.1 421.8 L636.7 423.3 M1062.0 239.7 L1061.6 238.1 L1061.2 236.5 L1060.8 234.9 L1060.3 233.2 L1059.9 231.6 L1059.4 230.0 L1059.0 228.4 L1058.5 226.8 L1058.0 225.2 L1057.5 223.6 L1057.0 222.0 L1056.5 220.4 L1055.9 218.7 L1055.4 217.1 L1054.8 215.5 L1054.2 213.9 L1053.7 212.3 L1053.1 210.7 L1052.5 209.1 L1051.8 207.5 L1051.2 205.9 L1050.6 204.3 L1049.9 202.6 L1049.3 201.0 L1048.6 199.4 L1047.9 197.8 L1047.2 196.2 L1046.5 194.6 L1045.8 193.0 L1045.1 191.4 L1044.4 189.8 L1043.6 188.2 L1042.9 186.6 L1042.1 185.0 L1041.3 183.4 L1040.5 181.8 L1039.7 180.2 L1038.9 178.6 L1038.1 177.0 L1037.3 175.4 L1036.5 173.8 L1035.6 172.1 L1034.8 170.5 L1033.9 168.9 L1033.0 167.3 L1032.2 165.8 L1031.3 164.2 L1030.4 162.6 L1029.5 161.0 L1028.6 159.4 L1027.6 157.8 L1026.7 156.2 L1025.8 154.6 L1024.8 153.0 L1023.8 151.4 L1022.9 149.8 L1021.9 148.2 L1020.9 146.6 L1019.9 145.0 L1018.9 143.4 L1017.9 141.9 L1016.9 140.3 L1015.9 138.7 L1014.9 137.1 L1013.8 135.5 L1012.8 133.9 L1011.8 132.4 L1010.7 130.8 L1009.6 129.2 L1008.6 127.6 L1007.5 126.1 L1006.4 124.5 L1005.3 122.9 L1004.3 121.4 L1003.2 119.8 L1002.1 118.2 L1001.0 116.7 L999.8 115.1 L998.7 113.6 L997.6 112.0 L996.5 110.4 L995.4 108.9 L994.2 107.4 L993.1 105.8 L992.0 104.3 L990.9 102.7 L989.7 101.2 L988.6 99.7 L987.4 98.2 L986.3 96.6 L985.2 95.1 L984.0 93.6 L982.9 92.1 L981.8 90.6 L980.6 89.1 L979.5 87.7 L978.4 86.2 L977.3 84.7 L976.2 83.3 L975.1 81.8 L974.0 80.4 L972.9 79.0 L971.8 77.6 L970.8 76.2 L969.7 74.8 L968.7 73.4 L967.7 72.0 L966.7 70.7 L965.8 69.4 L964.8 68.1 L963.9 66.8 L963.1 65.6 L962.3 64.4 L961.5 63.2 L960.8 62.1 L960.2 61.0 L959.6 59.9 L959.2 58.9 L958.8 58.0 L958.5 57.1 L958.3 56.2 L958.3 55.5 L958.4 54.8 L958.7 54.2 L959.1 53.7 L959.8 53.2 L960.6 52.9 L961.7 52.6 L963.0 52.5 L964.5 52.5 L966.4 52.6 L968.4 52.7 L970.8 53.0 L973.3 53.4 L976.2 53.9 L979.3 54.4 L982.6 55.1 L986.1 55.8 L989.9 56.6 L993.8 57.4 L997.9 58.4 L1002.2 59.3 M799.1 60.4 L797.0 61.4 L794.8 62.5 L792.6 63.7 L790.2 64.9 L787.7 66.1 L785.1 67.4 L782.5 68.6 L779.8 69.9 L777.1 71.3 L774.3 72.6 L771.5 74.0 L768.6 75.3 L765.7 76.7 L762.8 78.1 L759.8 79.5 L756.8 81.0 L753.8 82.4 L750.8 83.9 L747.8 85.3 L744.7 86.8 L741.7 88.3 L738.6 89.8 L735.5 91.2 L732.4 92.7 L729.4 94.2 L726.3 95.8 L723.2 97.3 L720.1 98.8 L717.0 100.3 L713.9 101.8 L710.8 103.4 L707.8 104.9 L704.7 106.4 L701.6 108.0 L698.6 109.5 L695.5 111.1 L692.5 112.6 L689.4 114.2 L686.4 115.7 L683.4 117.3 L680.4 118.9 L677.4 120.4 L674.4 122.0 L671.4 123.6 L668.5 125.1 L665.5 126.7 L662.6 128.3 L659.6 129.9 L656.7 131.4 L653.8 133.0 L651.0 134.6 L648.1 136.2 L645.3 137.8 L642.4 139.3 L639.6 140.9 L636.8 142.5 L634.0 144.1 L631.3 145.7 L628.5 147.3 L625.8 148.9 L623.1 150.5 L620.4 152.0 L617.7 153.6 L615.0 155.2 L612.4 156.8 L609.8 158.4 L607.2 160.0 L604.6 161.6 L602.1 163.2 L599.5 164.8 L597.0 166.4 L594.5 168.0 L592.1 169.6 L589.6 171.2 L587.2 172.8 L584.8 174.4 L582.4 176.0 L580.0 177.6 L577.7 179.2 L575.4 180.8 L573.1 182.4 L570.8 184.0 L568.6 185.6 L566.4 187.2 L564.2 188.8 L562.0 190.4 L559.9 192.0 L557.8 193.7 L555.7 195.3 L553.6 196.9 L551.6 198.5 L549.5 200.1 L547.6 201.7 L545.6 203.3 L543.7 204.9 L541.7 206.5 L539.9 208.1 L538.0 209.7 L536.2 211.3 L534.4 213.0 L532.6 214.6 L530.8 216.2 L529.1 217.8 L527.4 219.4 L525.7 221.0 L524.1 222.6 L522.5 224.2 L520.9 225.8 L519.3 227.5 L517.8 229.1 L516.3 230.7 L514.8 232.3 L513.4 233.9 L512.0 235.5 L510.6 237.1 L509.3 238.7 L507.9 240.4 L506.6 242.0 L505.4 243.6 L504.1 245.2 L502.9 246.8 L501.7 248.4 L500.6 250.0 L499.5 251.7 L498.4 253.3 L497.3 254.9 L496.3 256.5 L495.3 258.1 L494.3 259.7 L493.4 261.3 L492.5 263.0 L491.6 264.6 L490.8 266.2 L490.0 267.8 L489.2 269.4 L488.4 271.0 L487.7 272.6 L487.0 274.3 L486.4 275.9 L485.8 277.5 L485.2 279.1 L484.6 280.7 L484.1 282.3 L483.6 284.0 L483.1 285.6 L482.7 287.2 L482.3 288.8 L481.9 290.4 L481.5 292.0 L481.2 293.7 L480.9 295.3 L480.7 296.9 L480.5 298.5 L480.3 300.1 L480.1 301.7 L480.0 303.4 L479.9 305.0 L479.9 306.6 L479.8 308.2 L479.8 309.8 L479.9 311.4 L480.0 313.1 L480.1 314.7 L480.2 316.3 L480.3 317.9 L480.5 319.5 L480.8 321.1 L481.0 322.7 L481.3 324.4 L481.6 326.0 L482.0 327.6 L482.4 329.2 L482.8 330.8 L483.2 332.4 L483.7 334.1 L484.2 335.7 L484.8 337.3 L485.4 338.9 L486.0 340.5 L486.6 342.1 L487.3 343.8 L488.0 345.4 L488.7 347.0 L489.5 348.6 L490.3 350.2 L491.1 351.8 L491.9 353.5 L492.8 355.1 L493.7 356.7 L494.7 358.3 L495.7 359.9 L496.7 361.5 L497.7 363.2 L498.8 364.8 L499.9 366.4 L501.0 368.0 M1096.0 236.0 L1094.2 235.0 L1092.4 234.0 L1090.6 233.0 L1088.8 232.0 L1087.0 231.1 L1085.2 230.1 L1083.4 229.1 L1081.6 228.2 L1079.8 227.2 L1077.9 226.2 L1076.1 225.3 L1074.3 224.4 L1072.5 223.4 L1070.7 222.5 L1068.8 221.6 L1067.0 220.6 L1065.2 219.7 L1063.4 218.8 L1061.5 217.9 L1059.7 217.0 L1057.9 216.1 L1056.0 215.2 L1054.2 214.4 L1052.4 213.5 L1050.6 212.6 L1048.7 211.8 L1046.9 210.9 L1045.1 210.1 L1043.2 209.2 L1041.4 208.4 L1039.6 207.6 L1037.8 206.7 L1035.9 205.9 L1034.1 205.1 L1032.3 204.3 L1030.5 203.6 L1028.7 202.8 L1026.9 202.0 L1025.0 201.2 L1023.2 200.5 L1021.4 199.7 L1019.6 199.0 L1017.8 198.3 L1016.0 197.6 L1014.2 196.8 L1012.4 196.1 L1010.6 195.5 L1008.8 194.8 L1007.0 194.1 L1005.2 193.4 L1003.5 192.8 L1001.7 192.1 L999.9 191.5 L998.1 190.9 L996.4 190.3 L994.6 189.7 L992.8 189.1 L991.1 188.5 L989.3 187.9 L987.6 187.3 L985.8 186.8 L984.1 186.2 L982.3 185.7 L980.6 185.2 L978.8 184.7 L977.1 184.2 L975.4 183.7 L973.7 183.2 L971.9 182.8 L970.2 182.3 L968.5 181.9 L966.8 181.5 L965.1 181.0 L963.4 180.6 L961.7 180.3 L960.0 179.9 L958.3 179.5 L956.6 179.2 L954.9 178.8 L953.2 178.5 L951.6 178.2 L949.9 177.9 L948.2 177.6 L946.5 177.3 L944.9 177.1 L943.2 176.8 L941.5 176.6 L939.9 176.4 L938.2 176.2 L936.6 176.0 L934.9 175.8 L933.3 175.7 L931.6 175.5 L930.0 175.4 L928.3 175.3 L926.7 175.1 L925.0 175.1 L923.4 175.0 L921.8 174.9 L920.1 174.9 L918.5 174.8 L916.9 174.8 L915.2 174.8 L913.6 174.8 L912.0 174.8 L910.4 174.8 L908.7 174.9 L907.1 174.9 L905.5 175.0 L903.8 175.1 L902.2 175.2 L900.6 175.3 L899.0 175.5 L897.3 175.6 L895.7 175.8 L894.1 175.9 L892.5 176.1 L890.8 176.3 L889.2 176.5 L887.6 176.8 L885.9 177.0 L884.3 177.3 L882.7 177.5 L881.0 177.8 L879.4 178.1 L877.8 178.4 L876.1 178.7 L874.5 179.1 L872.8 179.4 L871.2 179.8 L869.5 180.1 L867.9 180.5 L866.2 180.9 L864.6 181.3 L862.9 181.7 L861.3 182.2 L859.6 182.6 L858.0 183.1 L856.3 183.5 L854.6 184.0 L853.0 184.5 L851.3 185.0 L849.6 185.5 L847.9 186.1 L846.3 186.6 L844.6 187.1 L842.9 187.7 L841.2 188.3 L839.5 188.9 L837.8 189.5 L836.1 190.1 L834.4 190.7 L832.7 191.3 L831.0 191.9 L829.3 192.6 L827.6 193.2 L825.9 193.9 L824.2 194.5 L822.5 195.2 L820.8 195.9 L819.1 196.6 L817.4 197.3 L815.7 198.0 L813.9 198.8 L812.2 199.5 L810.5 200.2 L808.8 201.0 L807.0 201.8 L805.3 202.5 L803.6 203.3 L801.8 204.1 L800.1 204.9 L798.4 205.7 L796.6 206.5 L794.9 207.3 L793.2 208.1 L791.4 208.9 L789.7 209.8 L788.0 210.6 L786.2 211.5 L784.5 212.3 L782.7 213.2 L781.0 214.1 L779.3 214.9 L777.5 215.8 L775.8 216.7 L774.0 217.6 L772.3 218.5 L770.6 219.4 L768.8 220.3 L767.1 221.2 L765.4 222.2 L763.6 223.1 L761.9 224.0 L760.2 225.0 L758.4 225.9 L756.7 226.9 L755.0 227.8 L753.2 228.8 L751.5 229.8 L749.8 230.7 L748.1 231.7 L746.4 232.7 L744.6 233.7 L742.9 234.7 L741.2 235.7 L739.5 236.7 L737.8 237.7 L736.1 238.7 L734.4 239.7 L732.7 240.7 L731.0 241.7 L729.3 242.7 L727.7 243.8 L726.0 244.8 L724.3 245.8 L722.6 246.9 L721.0 247.9 L719.3 249.0 L717.6 250.0 L716.0 251.1 L714.3 252.1 L712.7 253.2 L711.0 254.2 L709.4 255.3 L707.8 256.4 L706.2 257.4 L704.5 258.5 L702.9 259.6 L701.3 260.7 L699.7 261.7 L698.1 262.8 L696.5 263.9 L694.9 265.0 L693.4 266.1 L691.8 267.2 L690.2 268.3 L688.7 269.4 L687.1 270.5 L685.6 271.6 L684.0 272.7 L682.5 273.8 L681.0 274.9 L679.5 276.0 L678.0 277.1 L676.5 278.2 L675.0 279.4 L673.5 280.5 L672.0 281.6 L670.5 282.7 L669.1 283.8 L667.6 285.0 L666.2 286.1 L664.7 287.2 L663.3 288.3 L661.9 289.5 L660.5 290.6 L659.1 291.7 L657.7 292.9 L656.3 294.0 L654.9 295.1 L653.5 296.3 L652.2 297.4 L650.8 298.5 L649.5 299.7 L648.1 300.8 L646.8 301.9 L645.5 303.1 L644.2 304.2 L642.9 305.4 L641.6 306.5 L640.4 307.7 L639.1 308.8 L637.8 309.9 L636.6 311.1 L635.4 312.2 L634.1 313.4 L632.9 314.5 L631.7 315.7 L630.5 316.8 L629.3 318.0 L628.2 319.1 L627.0 320.2 L625.8 321.4 L624.7 322.5 L623.6 323.7 L622.4 324.8 L621.3 326.0 L620.2 327.1 L619.1 328.3 L618.1 329.4 L617.0 330.5 L615.9 331.7 L614.9 332.8 L613.9 334.0 L612.8 335.1 L611.8 336.3 L610.8 337.4 L609.8 338.5 L608.8 339.7 L607.9 340.8 L606.9 341.9 L606.0 343.1 L605.0 344.2 L604.1 345.4 L603.2 346.5 L602.3 347.6 L601.4 348.8 L600.5 349.9 L599.6 351.0 L598.7 352.1 L597.9 353.3 L597.1 354.4 L596.2 355.5 L595.4 356.6 L594.6 357.8 L593.8 358.9 L593.0 360.0 M1184.0 193.3 L1183.3 192.0 L1182.6 190.6 L1181.8 189.3 L1181.1 188.0 L1180.3 186.7 L1179.6 185.3 L1178.8 184.0 L1178.0 182.7 L1177.3 181.4 L1176.5 180.1 L1175.7 178.8 L1174.9 177.5 L1174.1 176.2 L1173.3 175.0 L1172.4 173.7 L1171.6 172.4 L1170.8 171.2 L1170.0 169.9 L1169.1 168.6 L1168.3 167.4 L1167.5 166.2 L1166.6 164.9 L1165.8 163.7 L1164.9 162.5 L1164.1 161.3 L1163.3 160.1 L1162.4 158.9 L1161.6 157.7 L1160.8 156.5 L1159.9 155.3 L1159.1 154.2 L1158.3 153.0 L1157.5 151.9 L1156.7 150.7 L1155.9 149.6 L1155.1 148.5 L1154.3 147.4 L1153.5 146.3 L1152.7 145.2 L1152.0 144.1 L1151.2 143.1 L1150.5 142.0 L1149.8 141.0 L1149.1 139.9 L1148.4 138.9 L1147.8 137.9 L1147.1 136.9 L1146.5 136.0 L1145.9 135.0 L1145.3 134.0 L1144.7 133.1 L1144.2 132.2 L1143.7 131.3 L1143.2 130.4 L1142.8 129.5 L1142.3 128.7 L1142.0 127.8 L1141.6 127.0 L1141.3 126.2 L1141.0 125.4 L1140.7 124.7 L1140.5 123.9 L1140.4 123.2 L1140.2 122.5 L1140.2 121.8 L1140.1 121.1 L1140.1 120.5 L1140.2 119.9 L1140.3 119.3 L1140.5 118.7 L1140.7 118.2 L1140.9 117.6 L1141.3 117.1 L1141.7 116.7 L1142.1 116.2 L1142.6 115.8 L1143.2 115.4 L1143.8 115.0 L1144.5 114.7 L1145.3 114.3 L1146.1 114.0 L1147.1 113.8 L1148.0 113.5 L1149.1 113.3 L1150.2 113.1 L1151.4 113.0 L1152.7 112.9 L1154.1 112.8 L1155.5 112.7 L1157.0 112.7 L1158.6 112.7 L1160.3 112.7 M643.1 112.7 L644.5 112.8 L645.8 112.9 L647.1 113.0 L648.3 113.2 L649.4 113.4 L650.4 113.6 L651.3 113.8 L652.2 114.1 L653.0 114.4 L653.7 114.7 L654.4 115.1 L655.0 115.5 L655.5 115.9 L656.0 116.3 L656.4 116.8 L656.7 117.3 L657.0 117.8 L657.2 118.3 L657.4 118.9 L657.5 119.4 L657.5 120.0 L657.5 120.7 L657.5 121.3 L657.4 122.0 L657.3 122.7 L657.1 123.4 L656.8 124.1 L656.6 124.9 L656.3 125.6 L655.9 126.4 L655.5 127.2 L655.1 128.1 L654.7 128.9 L654.2 129.8 L653.7 130.6 L653.1 131.5 L652.5 132.4 L651.9 133.4 L651.3 134.3 L650.7 135.2 L650.0 136.2 L649.3 137.2 L648.6 138.2 L647.8 139.2 L647.1 140.2 L646.3 141.3 L645.5 142.3 L644.7 143.4 L643.9 144.4 L643.1 145.5 L642.3 146.6 L641.4 147.7 L640.6 148.8 L639.7 149.9 L638.8 151.0 L638.0 152.2 L637.1 153.3 L636.2 154.5 L635.3 155.7 L634.4 156.8 L633.5 158.0 L632.6 159.2 L631.7 160.4 L630.8 161.6 L629.8 162.8 L628.9 164.0 L628.0 165.3 L627.1 166.5 L626.2 167.7 L625.3 169.0 L624.4 170.2 L623.5 171.5 L622.6 172.8 L621.7 174.0 L620.8 175.3 L620.0 176.6 L619.1 177.9 L618.2 179.2 L617.3 180.5 L616.5 181.8 L615.6 183.1 L614.8 184.4 L614.0 185.7 L613.1 187.0 L612.3 188.3 L611.5 189.7 L610.7 191.0 L609.9 192.3 L609.2 193.7 L608.4 195.0 L607.7 196.3 L606.9 197.7 L606.2 199.1 L605.5 200.4 L604.7 201.8 L604.1 203.1 L603.4 204.5 L602.7 205.9 L602.0 207.2 L601.4 208.6 L600.8 210.0 L600.1 211.4 L599.5 212.8 L598.9 214.1 L598.4 215.5 L597.8 216.9 L597.3 218.3 L596.7 219.7 L596.2 221.1 L595.7 222.5 L595.2 223.9 L594.8 225.3 L594.3 226.7 L593.9 228.1 L593.4 229.5 L593.0 230.9 L592.6 232.4 L592.3 233.8 L591.9 235.2 L591.5 236.6 L591.2 238.0 L590.9 239.4 L590.6 240.9 L590.3 242.3 L590.1 243.7 L589.8 245.2 L589.6 246.6 L589.4 248.0 L589.2 249.4 L589.1 250.9 L588.9 252.3 L588.8 253.7 L588.6 255.2 L588.5 256.6 L588.5 258.1 L588.4 259.5 L588.4 260.9 L588.3 262.4 L588.3 263.8 L588.3 265.3 L588.4 266.7 L588.4 268.2 L588.5 269.6 L588.5 271.1 L588.6 272.5 L588.8 274.0 L588.9 275.4 L589.1 276.9 L589.2 278.3 L589.4 279.8 L589.6 281.2 L589.9 282.7 L590.1 284.1 L590.4 285.6 L590.7 287.0 L591.0 288.5 L591.3 289.9 L591.7 291.4 L592.0 292.9 L592.4 294.3 L592.8 295.8 L593.2 297.2 L593.7 298.7 L594.1 300.1 L594.6 301.6 L595.1 303.1 L595.6 304.5 L596.2 306.0 L596.7 307.4 L597.3 308.9 L597.9 310.4 L598.5 311.8 L599.1 313.3 L599.8 314.7 L600.4 316.2 L601.1 317.7 L601.8 319.1 L602.5 320.6 L603.3 322.1 L604.0 323.5 L604.8 325.0 L605.6 326.4 L606.4 327.9 L607.2 329.4 L608.1 330.8 L608.9 332.3 L609.8 333.7 L610.7 335.2 L611.6 336.7 L612.6 338.1 L613.5 339.6 L614.5 341.0 L615.5 342.5 L616.5 343.9 L617.5 345.4 L618.6 346.9 L619.6 348.3 L620.7 349.8 L621.8 351.2 L622.9 352.7 L624.0 354.1 L625.2 355.6 L626.3 357.1 L627.5 358.5 L628.7 360.0 L629.9 361.4 L631.1 362.9 L632.4 364.3 L633.7 365.8 L634.9 367.2 L636.2 368.7 L637.5 370.1 L638.8 371.6 L640.2 373.0 L641.5 374.5 L642.9 375.9 L644.3 377.3 L645.7 378.8 L647.1 380.2 L648.5 381.7 L650.0 383.1 L651.4 384.5 L652.9 386.0 L654.4 387.4 L655.9 388.8 L657.4 390.3 L658.9 391.7 L660.5 393.1 L662.0 394.6 L663.6 396.0 L665.2 397.4 L666.8 398.9 L668.4 400.3 L670.0 401.7 M892.7 95.0 L891.3 94.4 L889.9 93.8 L888.4 93.2 L887.0 92.7 L885.6 92.2 L884.1 91.8 L882.6 91.4 L881.2 91.0 L879.7 90.6 L878.2 90.3 L876.7 90.1 L875.2 89.9 L873.6 89.7 L872.1 89.5 L870.5 89.5 L868.9 89.4 L867.2 89.4 L865.6 89.4 L863.9 89.5 L862.2 89.6 L860.5 89.7 L858.8 89.9 L857.0 90.1 L855.2 90.4 L853.4 90.7 L851.5 91.1 L849.7 91.4 L847.8 91.9 L845.8 92.3 L843.8 92.8 L841.8 93.3 L839.8 93.9 L837.8 94.5 L835.7 95.1 L833.6 95.8 L831.4 96.5 L829.2 97.2 L827.0 97.9 L824.8 98.7 L822.6 99.5 L820.3 100.3 L818.0 101.2 L815.7 102.1 L813.3 103.0 L810.9 103.9 L808.5 104.8 L806.1 105.8 L803.7 106.8 L801.2 107.8 L798.7 108.8 L796.2 109.9 L793.7 110.9 L791.2 112.0 L788.7 113.1 L786.1 114.2 L783.5 115.4 L780.9 116.5 L778.3 117.7 L775.7 118.8 L773.1 120.0 L770.5 121.2 L767.8 122.4 L765.2 123.6 L762.5 124.8 L759.8 126.1 L757.1 127.3 L754.5 128.6 L751.8 129.9 L749.1 131.1 L746.4 132.4 L743.7 133.7 L741.0 135.0 L738.3 136.3 L735.6 137.6 L732.8 139.0 L730.1 140.3 L727.4 141.6 L724.7 143.0 L722.0 144.3 L719.3 145.7 L716.6 147.0 L713.9 148.4 L711.2 149.8 L708.5 151.2 L705.8 152.5 L703.1 153.9 L700.4 155.3 L697.7 156.7 L695.0 158.1 L692.4 159.5 L689.7 161.0 L687.1 162.4 L684.4 163.8 L681.8 165.2 L679.1 166.6 L676.5 168.1 L673.9 169.5 L671.3 170.9 L668.7 172.4 L666.1 173.8 L663.5 175.3 L661.0 176.7 L658.4 178.2 L655.9 179.6 L653.4 181.1 L650.8 182.6 L648.3 184.0 L645.8 185.5 L643.4 186.9 L640.9 188.4 L638.4 189.9 L636.0 191.4 L633.6 192.8 L631.2 194.3 L628.8 195.8 L626.4 197.3 L624.0 198.8 L621.7 200.3 L619.3 201.7 L617.0 203.2 L614.7 204.7 L612.4 206.2 L610.2 207.7 L607.9 209.2 L605.7 210.7 L603.5 212.2 L601.3 213.7 L599.1 215.2 L596.9 216.7 L594.8 218.2 L592.6 219.7 L590.5 221.2 L588.5 222.8 L586.4 224.3 L584.3 225.8 L582.3 227.3 L580.3 228.8 L578.3 230.3 L576.3 231.8 L574.4 233.3 L572.5 234.9 L570.6 236.4 L568.7 237.9 L566.8 239.4 L565.0 240.9 L563.2 242.5 L561.4 244.0 L559.6 245.5 L557.9 247.0 L556.1 248.6 L554.4 250.1 L552.7 251.6 L551.1 253.1 L549.4 254.7 L547.8 256.2 L546.2 257.7 L544.7 259.3 L543.1 260.8 L541.6 262.3 L540.1 263.8 L538.6 265.4 L537.2 266.9 L535.8 268.4 L534.4 270.0 L533.0 271.5 L531.6 273.0 L530.3 274.6 L529.0 276.1 L527.7 277.7 L526.5 279.2 L525.3 280.7 L524.1 282.3 L522.9 283.8 L521.8 285.3 L520.6 286.9 L519.5 288.4 L518.5 289.9 L517.4 291.5 L516.4 293.0 L515.4 294.6 L514.5 296.1 L513.5 297.6 L512.6 299.2 L511.7 300.7 L510.9 302.3 L510.0 303.8 L509.2 305.3 L508.4 306.9 L507.7 308.4 L507.0 310.0 L506.3 311.5 L505.6 313.0 L505.0 314.6 L504.3 316.1 L503.8 317.7 L503.2 319.2 L502.7 320.7 L502.1 322.3 L501.7 323.8 L501.2 325.4 L500.8 326.9 L500.4 328.4 L500.0 330.0 L499.7 331.5 L499.4 333.1 L499.1 334.6 L498.8 336.1 L498.6 337.7 L498.4 339.2 L498.2 340.8 L498.0 342.3 L497.9 343.8 L497.8 345.4 L497.8 346.9 L497.7 348.5 L497.7 350.0 L497.7 351.5 L497.8 353.1 L497.8 354.6 L497.9 356.1 L498.0 357.7 L498.2 359.2 L498.4 360.8 L498.6 362.3 L498.8 363.8 L499.1 365.4 L499.4 366.9 L499.7 368.4 L500.0 370.0 L500.4 371.5 L500.8 373.0 L501.2 374.6 L501.7 376.1 L502.1 377.6 L502.6 379.2 L503.2 380.7 L503.7 382.2 L504.3 383.7 L504.9 385.3 L505.5 386.8 L506.2 388.3 L506.9 389.9 L507.6 391.4 L508.3 392.9 L509.1 394.4 L509.9 396.0 L510.7 397.5 L511.5 399.0 L512.4 400.5 L513.3 402.0 L514.2 403.6 L515.1 405.1 L516.1 406.6 L517.1 408.1 L518.1 409.6 L519.2 411.1 L520.2 412.7 L521.3 414.2 L522.4 415.7 L523.5 417.2 L524.7 418.7" fill="none" stroke="#8a8a8a" stroke-width="0.8" stroke-dasharray="0.8 2.7"/>
<path d="M646.3 228.3 L647.5 226.7 L648.6 225.0 L649.8 223.4 L651.1 221.8 L652.3 220.1 L653.5 218.5 L654.8 216.9 L656.1 215.2 L657.4 213.6 L658.8 211.9 L660.1 210.3 L661.5 208.7 L662.9 207.0 L664.3 205.4 L665.7 203.8 L667.1 202.1 L668.6 200.5 L670.1 198.9 L671.6 197.2 L673.1 195.6 L674.6 194.0 L676.2 192.3 L677.7 190.7 L679.3 189.1 L680.9 187.4 L682.5 185.8 L684.2 184.2 L685.8 182.5 L687.5 180.9 L689.2 179.2 L690.9 177.6 L692.6 176.0 L694.3 174.3 L696.1 172.7 L697.8 171.1 L699.6 169.4 L701.4 167.8 L703.2 166.2 L705.1 164.5 L706.9 162.9 L708.8 161.3 L710.6 159.6 L712.5 158.0 L714.4 156.4 L716.3 154.7 L718.3 153.1 L720.2 151.5 L722.2 149.8 L724.1 148.2 L726.1 146.6 L728.1 144.9 L730.1 143.3 L732.2 141.7 L734.2 140.0 L736.2 138.4 L738.3 136.8 L740.4 135.1 L742.5 133.5 L744.6 131.9 L746.7 130.2 L748.8 128.6 L751.0 127.0 L753.1 125.3 L755.3 123.7 L757.4 122.1 L759.6 120.4 L761.8 118.8 L764.0 117.2 L766.2 115.5 L768.4 113.9 L770.7 112.3 L772.9 110.6 L775.2 109.0 L777.4 107.4 L779.7 105.7 L782.0 104.1 L784.3 102.5 L786.6 100.8 L788.9 99.2 L791.2 97.6 L793.5 95.9 L795.9 94.3 L798.2 92.7 L800.5 91.0 L802.9 89.4 L805.3 87.8 L807.6 86.2 L810.0 84.5 L812.4 82.9 L814.8 81.3 L817.2 79.6 L819.6 78.0 L822.0 76.4 L824.4 74.8 L826.8 73.1 L829.2 71.5 L831.6 69.9 L834.1 68.3 L836.5 66.7 L838.9 65.0 L841.4 63.4 L843.8 61.8 L846.2 60.2 L848.7 58.6 L851.1 57.0 L853.6 55.4 L856.0 53.7 L858.4 52.1 L860.8 50.6 L863.3 49.0 L865.7 47.4 L868.1 45.8 L870.4 44.3 L872.8 42.7 L875.1 41.2 L877.3 39.7 L879.5 38.2 L881.6 36.9 L883.4 35.5 L885.0 34.4 L886.1 33.4 L886.3 32.8 L885.3 32.6 L918.6 32.8 L919.0 33.5 L920.2 34.5 L921.9 35.7 L923.9 37.1 L926.1 38.5 L928.3 39.9 L930.7 41.4 L933.1 43.0 M620.3 228.3 L621.7 226.7 L623.0 225.0 L624.4 223.4 L625.9 221.8 L627.3 220.1 L628.8 218.5 L630.2 216.9 L631.8 215.2 L633.3 213.6 L634.8 212.0 L636.4 210.4 L638.0 208.7 L639.6 207.1 L641.2 205.5 L642.9 203.8 L644.5 202.2 L646.2 200.6 L647.9 198.9 L649.7 197.3 L651.4 195.7 L653.2 194.0 L654.9 192.4 L656.8 190.8 L658.6 189.1 L660.4 187.5 L662.3 185.9 L664.2 184.2 L666.0 182.6 L668.0 181.0 L669.9 179.4 L671.8 177.7 L673.8 176.1 L675.8 174.5 L677.8 172.8 L679.8 171.2 L681.9 169.6 L683.9 167.9 L686.0 166.3 L688.1 164.7 L690.2 163.0 L692.3 161.4 L694.4 159.8 L696.6 158.1 L698.7 156.5 L700.9 154.9 L703.1 153.2 L705.3 151.6 L707.6 150.0 L709.8 148.4 L712.1 146.7 L714.3 145.1 L716.6 143.5 L718.9 141.8 L721.2 140.2 L723.6 138.6 L725.9 136.9 L728.3 135.3 L730.6 133.7 L733.0 132.0 L735.4 130.4 L737.8 128.8 L740.2 127.1 L742.7 125.5 L745.1 123.9 L747.6 122.2 L750.0 120.6 L752.5 119.0 L755.0 117.4 L757.5 115.7 L760.0 114.1 L762.6 112.5 L765.1 110.8 L767.6 109.2 L770.2 107.6 L772.8 105.9 L775.3 104.3 L777.9 102.7 L780.5 101.0 L783.1 99.4 L785.7 97.8 L788.4 96.2 L791.0 94.5 L793.6 92.9 L796.3 91.3 L798.9 89.6 L801.6 88.0 L804.3 86.4 L807.0 84.7 L809.6 83.1 L812.3 81.5 L815.0 79.8 L817.7 78.2 L820.5 76.6 L823.2 75.0 L825.9 73.3 L828.6 71.7 L831.4 70.1 L834.1 68.4 L836.8 66.8 L839.6 65.2 L842.4 63.6 L845.1 61.9 L847.9 60.3 L850.6 58.7 L853.4 57.0 L856.2 55.4 L859.0 53.8 L861.7 52.2 L864.5 50.5 L867.3 48.9 L870.1 47.3 L872.8 45.7 L875.6 44.1 L878.4 42.5 L881.2 40.8 L883.9 39.2 L886.7 37.6 L889.4 36.1 L892.1 34.5 L894.7 33.0 L897.3 31.6 L899.6 30.3 L901.5 29.6 L903.1 29.9 L904.9 30.9 L907.0 32.2 L909.1 33.7 L911.3 35.2 L913.6 36.8 L915.8 38.4 L918.1 40.0 L920.4 41.6 L922.6 43.2 L924.9 44.8 L927.2 46.4 L929.5 48.1 L931.8 49.7 L934.1 51.3 L936.4 52.9 L938.6 54.6 L940.9 56.2 L943.2 57.8 L945.5 59.4 L947.8 61.1 L950.0 62.7 L952.3 64.3 L954.6 65.9 L956.8 67.6 L959.1 69.2 M640.3 234.3 L641.7 232.7 L643.2 231.1 L644.6 229.5 L646.1 227.9 L647.6 226.3 L649.1 224.7 L650.6 223.0 L652.2 221.4 L653.8 219.8 L655.4 218.2 L657.0 216.6 L658.6 215.0 L660.2 213.4 L661.9 211.8 L663.6 210.2 L665.3 208.6 L667.0 207.0 L668.7 205.4 L670.5 203.8 L672.2 202.2 L674.0 200.6 L675.8 199.0 L677.6 197.4 L679.5 195.8 L681.3 194.2 L683.2 192.6 L685.0 191.0 L686.9 189.4 L688.8 187.8 L690.8 186.2 L692.7 184.6 L694.7 183.0 L696.6 181.4 L698.6 179.8 L700.6 178.2 L702.6 176.6 L704.6 175.0 L706.7 173.4 L708.7 171.8 L710.8 170.2 L712.9 168.6 L715.0 167.1 L717.1 165.5 L719.2 163.9 L721.3 162.3 L723.4 160.7 L725.6 159.1 L727.8 157.5 L729.9 156.0 L732.1 154.4 L734.3 152.8 L736.5 151.2 L738.7 149.6 L741.0 148.1 L743.2 146.5 L745.5 144.9 L747.7 143.3 L750.0 141.8 L752.3 140.2 L754.5 138.6 L756.8 137.1 L759.1 135.5 L761.4 133.9 L763.8 132.4 L766.1 130.8 L768.4 129.3 L770.8 127.7 L773.1 126.2 L775.5 124.6 L777.8 123.1 L780.2 121.5 L782.5 120.0 L784.9 118.4 L787.3 116.9 L789.7 115.4 L792.0 113.8 L794.4 112.3 L796.8 110.8 L799.2 109.3 L801.6 107.8 L804.0 106.3 L806.4 104.7 L808.8 103.2 L811.2 101.8 L813.6 100.3 L816.0 98.8 L818.4 97.3 L820.7 95.8 L823.1 94.4 L825.5 92.9 L827.9 91.5 L830.3 90.1 L832.6 88.6 L835.0 87.2 L837.3 85.8 L839.7 84.4 L842.0 83.0 L844.3 81.7 L846.6 80.3 L848.9 79.0 L851.2 77.7 L853.5 76.4 L855.7 75.1 L857.9 73.8 L860.1 72.6 L862.3 71.4 L864.5 70.2 L866.6 69.1 L868.7 67.9 L870.8 66.8 L872.9 65.8 L874.9 64.8 L876.9 63.8 L878.9 62.9 L880.8 62.1 L882.7 61.3 L884.6 60.5 L886.4 59.8 L888.2 59.2 L890.0 58.7 L891.7 58.2 L893.4 57.9 L895.1 57.6 L896.7 57.3 L898.4 57.2 L900.0 57.2 L901.7 57.2 L903.3 57.4 L904.9 57.6 L906.6 57.9 L908.2 58.3 L909.9 58.7 L911.6 59.3 L913.3 59.9 L915.0 60.6 L916.8 61.3 L918.5 62.1 L920.3 63.0 L922.2 63.9 L924.0 64.9 L925.9 65.9 L927.8 66.9 L929.7 68.0 L931.7 69.1 L933.6 70.3 L935.6 71.5 L937.6 72.7 L939.6 73.9 L941.7 75.2 L943.7 76.5 L945.8 77.8 L947.9 79.1 L950.0 80.4 L952.1 81.8 L954.2 83.1 L956.3 84.5 L958.5 85.9 L960.6 87.3 L962.8 88.7 L964.9 90.2 L967.1 91.6 L969.2 93.0 L971.4 94.5 L973.6 96.0 L975.8 97.4 L977.9 98.9 L980.1 100.4 L982.3 101.9 L984.5 103.4 L986.7 104.9 L988.8 106.4 L991.0 107.9 L993.2 109.4 L995.4 110.9 L997.5 112.4 L999.7 114.0 L1001.9 115.5 L1004.1 117.0 L1006.2 118.5 L1008.4 120.1 L1010.5 121.6 L1012.7 123.2 L1014.8 124.7 L1017.0 126.3 L1019.1 127.8 L1021.2 129.4 L1023.4 130.9 L1025.5 132.5 L1027.6 134.1 L1029.7 135.6 L1031.8 137.2 L1033.9 138.7 L1036.0 140.3 L1038.1 141.9 L1040.1 143.5 L1042.2 145.0 L1044.2 146.6 M646.7 231.3 L648.3 229.7 L649.9 228.2 L651.5 226.6 L653.1 225.1 L654.8 223.5 L656.4 221.9 L658.1 220.4 L659.8 218.8 L661.5 217.3 L663.2 215.7 L665.0 214.2 L666.7 212.6 L668.5 211.1 L670.3 209.5 L672.1 208.0 L673.9 206.4 L675.8 204.9 L677.6 203.3 L679.5 201.8 L681.4 200.2 L683.2 198.7 L685.2 197.1 L687.1 195.6 L689.0 194.1 L691.0 192.5 L692.9 191.0 L694.9 189.5 L696.9 187.9 L698.9 186.4 L700.9 184.8 L702.9 183.3 L705.0 181.8 L707.0 180.3 L709.1 178.7 L711.1 177.2 L713.2 175.7 L715.3 174.2 L717.4 172.6 L719.5 171.1 L721.7 169.6 L723.8 168.1 L725.9 166.6 L728.1 165.1 L730.2 163.6 L732.4 162.1 L734.6 160.6 L736.8 159.1 L739.0 157.6 L741.2 156.1 L743.4 154.6 L745.6 153.1 L747.8 151.6 L750.1 150.1 L752.3 148.6 L754.6 147.2 L756.8 145.7 L759.1 144.2 L761.3 142.7 L763.6 141.3 L765.9 139.8 L768.1 138.4 L770.4 136.9 L772.7 135.5 L775.0 134.0 L777.3 132.6 L779.6 131.2 L781.8 129.7 L784.1 128.3 L786.4 126.9 L788.7 125.5 L791.0 124.1 L793.3 122.7 L795.6 121.3 L797.9 119.9 L800.2 118.6 L802.5 117.2 L804.7 115.8 L807.0 114.5 L809.3 113.1 L811.6 111.8 L813.8 110.5 L816.1 109.2 L818.3 107.9 L820.6 106.6 L822.8 105.3 L825.0 104.0 L827.3 102.8 L829.5 101.5 L831.7 100.3 L833.9 99.1 L836.0 97.9 L838.2 96.7 L840.4 95.6 L842.5 94.4 L844.6 93.3 L846.7 92.2 L848.8 91.1 L850.9 90.1 L853.0 89.0 L855.0 88.0 L857.0 87.1 L859.1 86.1 L861.0 85.2 L863.0 84.3 L865.0 83.4 L866.9 82.6 L868.8 81.8 L870.7 81.0 L872.5 80.3 L874.4 79.6 L876.2 79.0 L878.0 78.4 L879.8 77.9 L881.5 77.4 L883.3 76.9 L885.0 76.5 L886.7 76.1 L888.4 75.8 L890.1 75.6 L891.7 75.3 L893.4 75.2 L895.0 75.1 L896.7 75.0 L898.3 75.1 L899.9 75.1 L901.5 75.2 L903.1 75.4 L904.8 75.6 L906.4 75.9 L908.0 76.2 L909.7 76.6 L911.3 77.0 L912.9 77.5 L914.6 78.0 L916.3 78.6 L917.9 79.2 L919.6 79.9 L921.3 80.5 L923.1 81.3 L924.8 82.0 L926.5 82.8 L928.3 83.7 L930.1 84.6 L931.9 85.5 L933.7 86.4 L935.5 87.4 L937.3 88.3 L939.2 89.4 L941.0 90.4 L942.9 91.5 L944.8 92.5 L946.7 93.7 L948.6 94.8 L950.5 95.9 L952.4 97.1 L954.3 98.3 L956.3 99.5 L958.2 100.7 L960.2 101.9 L962.2 103.2 L964.1 104.4 L966.1 105.7 L968.1 107.0 L970.1 108.3 L972.1 109.6 L974.1 110.9 L976.1 112.2 L978.1 113.5 L980.2 114.9 L982.2 116.2 L984.2 117.6 L986.2 119.0 L988.3 120.3 L990.3 121.7 L992.3 123.1 L994.3 124.5 L996.4 125.9 L998.4 127.3 L1000.4 128.8 L1002.5 130.2 L1004.5 131.6 L1006.5 133.0 L1008.6 134.5 L1010.6 135.9 L1012.6 137.4 L1014.6 138.8 L1016.6 140.3 L1018.6 141.7 L1020.7 143.2 L1022.7 144.7 L1024.7 146.1 L1026.7 147.6 L1028.6 149.1 L1030.6 150.6 L1032.6 152.1 L1034.6 153.5 L1036.6 155.0 L1038.5 156.5 L1040.5 158.0 M643.0 233.7 L644.8 232.3 L646.7 230.9 L648.5 229.5 L650.4 228.1 L652.2 226.7 L654.1 225.4 L656.0 224.0 L657.9 222.6 L659.9 221.2 L661.8 219.8 L663.7 218.5 L665.7 217.1 L667.7 215.7 L669.6 214.4 L671.6 213.0 L673.6 211.6 L675.6 210.3 L677.7 208.9 L679.7 207.6 L681.7 206.2 L683.8 204.9 L685.8 203.5 L687.9 202.2 L689.9 200.9 L692.0 199.5 L694.1 198.2 L696.2 196.9 L698.3 195.6 L700.4 194.3 L702.5 193.0 L704.6 191.6 L706.7 190.3 L708.9 189.0 L711.0 187.7 L713.2 186.5 L715.3 185.2 L717.4 183.9 L719.6 182.6 L721.8 181.3 L723.9 180.1 L726.1 178.8 L728.3 177.6 L730.4 176.3 L732.6 175.1 L734.8 173.8 L736.9 172.6 L739.1 171.4 L741.3 170.2 L743.5 169.0 L745.7 167.8 L747.9 166.6 L750.0 165.4 L752.2 164.2 L754.4 163.0 L756.6 161.8 L758.8 160.7 L760.9 159.5 L763.1 158.4 L765.3 157.3 L767.4 156.1 L769.6 155.0 L771.8 153.9 L773.9 152.8 L776.1 151.7 L778.2 150.7 L780.4 149.6 L782.5 148.5 L784.6 147.5 L786.8 146.5 L788.9 145.4 L791.0 144.4 L793.1 143.4 L795.2 142.5 L797.3 141.5 L799.4 140.5 L801.5 139.6 L803.6 138.6 L805.6 137.7 L807.7 136.8 L809.7 135.9 L811.7 135.1 L813.8 134.2 L815.8 133.4 L817.8 132.6 L819.8 131.7 L821.8 131.0 L823.7 130.2 L825.7 129.4 L827.6 128.7 L829.6 128.0 L831.5 127.3 L833.4 126.6 L835.3 126.0 L837.2 125.3 L839.1 124.7 L841.0 124.1 L842.8 123.6 L844.7 123.0 L846.5 122.5 L848.3 122.0 L850.1 121.5 L851.9 121.0 L853.7 120.6 L855.5 120.2 L857.2 119.8 L859.0 119.5 L860.7 119.1 L862.4 118.8 L864.2 118.5 L865.9 118.3 L867.6 118.1 L869.3 117.9 L870.9 117.7 L872.6 117.5 L874.3 117.4 L875.9 117.3 L877.6 117.3 L879.2 117.2 L880.9 117.2 L882.5 117.2 L884.1 117.3 L885.7 117.3 L887.4 117.4 L889.0 117.5 L890.6 117.7 L892.2 117.9 L893.8 118.1 L895.4 118.3 L897.0 118.6 L898.6 118.8 L900.2 119.2 L901.8 119.5 L903.4 119.9 L905.0 120.2 L906.5 120.6 L908.1 121.1 L909.7 121.5 L911.3 122.0 L912.9 122.5 L914.5 123.1 L916.2 123.6 L917.8 124.2 L919.4 124.8 L921.0 125.4 L922.6 126.0 L924.2 126.7 L925.9 127.4 L927.5 128.1 L929.1 128.8 L930.8 129.5 L932.4 130.3 L934.0 131.0 L935.7 131.8 L937.3 132.6 L939.0 133.5 L940.7 134.3 L942.3 135.2 L944.0 136.0 L945.7 136.9 L947.4 137.8 L949.1 138.7 L950.7 139.7 L952.4 140.6 L954.1 141.6 L955.8 142.5 L957.5 143.5 L959.2 144.5 L961.0 145.5 L962.7 146.6 L964.4 147.6 L966.1 148.6 L967.8 149.7 L969.6 150.8 L971.3 151.8 L973.0 152.9 L974.8 154.0 L976.5 155.1 L978.2 156.2 L980.0 157.4 L981.7 158.5 M641.5 232.5 L643.3 231.0 L645.1 229.6 L646.9 228.1 L648.7 226.7 L650.5 225.3 L652.4 223.8 L654.2 222.4 L656.1 220.9 L658.0 219.5 L659.9 218.0 L661.8 216.6 L663.7 215.2 L665.6 213.7 L667.6 212.3 L669.5 210.9 L671.5 209.5 L673.5 208.0 L675.5 206.6 L677.5 205.2 L679.5 203.8 L681.5 202.4 L683.6 201.0 L685.6 199.6 L687.7 198.1 L689.7 196.7 L691.8 195.3 L693.9 193.9 L696.0 192.6 L698.1 191.2 L700.2 189.8 L702.3 188.4 L704.5 187.0 L706.6 185.6 L708.7 184.3 L710.9 182.9 L713.1 181.5 L715.2 180.2 L717.4 178.8 L719.6 177.4 L721.7 176.1 L723.9 174.8 L726.1 173.4 L728.3 172.1 L730.5 170.7 L732.7 169.4 L734.9 168.1 L737.1 166.8 L739.4 165.5 L741.6 164.2 L743.8 162.9 L746.0 161.6 L748.2 160.3 L750.5 159.0 L752.7 157.7 L754.9 156.4 L757.2 155.2 L759.4 153.9 L761.6 152.7 L763.8 151.4 L766.1 150.2 L768.3 149.0 L770.5 147.8 L772.7 146.6 L774.9 145.4 L777.2 144.2 L779.4 143.0 L781.6 141.8 L783.8 140.6 L786.0 139.5 L788.2 138.3 L790.4 137.2 L792.5 136.1 L794.7 135.0 L796.9 133.9 L799.0 132.8 L801.2 131.7 L803.3 130.7 L805.5 129.6 L807.6 128.6 L809.7 127.6 L811.9 126.6 L814.0 125.6 L816.0 124.6 L818.1 123.7 L820.2 122.7 L822.3 121.8 L824.3 120.9 L826.3 120.0 L828.4 119.1 L830.4 118.3 L832.4 117.4 L834.4 116.6 L836.3 115.8 L838.3 115.1 L840.2 114.3 L842.2 113.6 L844.1 112.9 L846.0 112.2 L847.9 111.6 L849.7 110.9 L851.6 110.3 L853.4 109.7 L855.3 109.2 L857.1 108.7 L858.9 108.2 L860.7 107.7 L862.5 107.3 L864.2 106.8 L866.0 106.5 L867.7 106.1 L869.4 105.8 L871.2 105.5 L872.9 105.2 L874.6 105.0 L876.2 104.8 L877.9 104.6 L879.6 104.5 L881.2 104.4 L882.9 104.3 L884.5 104.3 L886.1 104.3 L887.8 104.3 L889.4 104.4 L891.0 104.5 L892.6 104.6 L894.2 104.7 L895.8 104.9 L897.4 105.1 L899.0 105.4 L900.6 105.7 L902.2 106.0 L903.8 106.3 L905.4 106.7 L907.0 107.1 L908.6 107.5 L910.2 108.0 L911.8 108.5 L913.4 109.0 L915.0 109.5 L916.6 110.1 L918.2 110.7 L919.8 111.3 L921.5 112.0 L923.1 112.6 L924.7 113.3 L926.4 114.0 L928.0 114.8 L929.7 115.5 L931.3 116.3 L933.0 117.1 L934.7 117.9 L936.3 118.8 L938.0 119.6 L939.7 120.5 L941.4 121.4 L943.1 122.3 L944.8 123.3 L946.5 124.2 L948.2 125.2 L949.9 126.2 L951.7 127.2 L953.4 128.2 L955.1 129.2 L956.9 130.3 L958.6 131.3 L960.4 132.4 L962.1 133.5 L963.9 134.5 L965.6 135.7 L967.4 136.8 L969.2 137.9 L971.0 139.0 L972.7 140.2 L974.5 141.3 L976.3 142.5 L978.1 143.7 L979.9 144.9 L981.7 146.1 L983.4 147.3 L985.2 148.5 L987.0 149.7 L988.8 150.9 L990.6 152.2 L992.4 153.4 L994.2 154.7 L996.0 155.9 L997.8 157.2 L999.6 158.5 L1001.4 159.8 L1003.2 161.0 L1005.0 162.3 L1006.8 163.6 L1008.5 164.9 L1010.3 166.3" fill="none" stroke="#d414f4" stroke-width="1.6" stroke-dasharray="1.5 2.2"/>
<path d="M933.1 43.0 L934.1 43.6 L935.0 44.2 L936.0 44.8 L937.0 45.4 L938.0 46.1 L939.0 46.7 L940.0 47.3 L941.0 48.0 L942.0 48.6 L943.0 49.2 L944.0 49.9 L945.0 50.5 L946.0 51.1 L947.0 51.8 L948.0 52.4 L949.1 53.1 L950.1 53.7 L951.1 54.4 L952.1 55.0 M959.1 69.2 L960.0 69.9 L960.9 70.5 L961.8 71.2 L962.7 71.8 L963.6 72.5 L964.5 73.1 L965.4 73.8 L966.3 74.4 L967.2 75.1 L968.1 75.7 L969.0 76.4 L969.9 77.0 L970.8 77.7 L971.7 78.3 L972.6 79.0 L973.5 79.6 L974.3 80.3 L975.2 80.9 L976.1 81.6 L977.0 82.2 L977.9 82.9 M1044.2 146.6 L1045.1 147.3 L1045.9 147.9 L1046.8 148.6 L1047.6 149.2 L1048.4 149.9 L1049.3 150.5 L1050.1 151.2 L1050.9 151.8 L1051.8 152.5 L1052.6 153.1 L1053.4 153.8 L1054.3 154.4 L1055.1 155.1 L1055.9 155.7 L1056.7 156.4 L1057.5 157.0 L1058.4 157.7 L1059.2 158.3 L1060.0 159.0 M1040.5 158.0 L1041.3 158.7 L1042.1 159.3 L1043.0 159.9 L1043.8 160.6 L1044.6 161.2 L1045.4 161.9 L1046.3 162.5 L1047.1 163.1 L1047.9 163.8 L1048.7 164.4 L1049.6 165.1 L1050.4 165.7 L1051.2 166.4 L1052.0 167.0 M981.7 158.5 L982.4 159.0 L983.1 159.4 L983.8 159.9 L984.5 160.4 L985.2 160.8 L985.9 161.3 L986.6 161.8 L987.4 162.2 L988.1 162.7 L988.8 163.2 L989.5 163.7 L990.2 164.1 L990.9 164.6 L991.6 165.1 L992.3 165.6 L993.0 166.0 L993.7 166.5 L994.4 167.0 L995.1 167.5 L995.8 168.0 L996.5 168.5 L997.2 169.0 L998.0 169.4 L998.7 169.9 L999.4 170.4 L1000.1 170.9 L1000.8 171.4 L1001.5 171.9 L1002.2 172.4 L1002.9 172.9 M1010.3 166.3 L1011.1 166.8 L1011.8 167.4 L1012.6 167.9 L1013.4 168.5 L1014.1 169.0 L1014.9 169.6 L1015.6 170.2 L1016.4 170.7 L1017.1 171.3 L1017.9 171.8 L1018.6 172.4 L1019.4 173.0 L1020.1 173.5 L1020.9 174.1 L1021.6 174.7 L1022.4 175.2 L1023.1 175.8" fill="none" stroke="#d414f4" stroke-width="1.75"/>
<circle cx="952.1" cy="55.0" r="1.5" fill="#ff5a40"/>
<circle cx="977.9" cy="82.9" r="1.5" fill="#ff5a40"/>
<circle cx="1060.0" cy="159.0" r="1.5" fill="#ff5a40"/>
<circle cx="1052.0" cy="167.0" r="1.5" fill="#ff5a40"/>
<circle cx="1002.9" cy="172.9" r="1.5" fill="#ff5a40"/>
<circle cx="1023.1" cy="175.8" r="1.5" fill="#ff5a40"/>
<path d="M643.3 228.3H649.3M646.3 225.3V231.3" stroke="#ff0000" stroke-width="1.1"/>
<path d="M617.3 228.3H623.3M620.3 225.3V231.3" stroke="#ff0000" stroke-width="1.1"/>
<path d="M637.3 234.3H643.3M640.3 231.3V237.3" stroke="#ff0000" stroke-width="1.1"/>
<path d="M643.7 231.3H649.7M646.7 228.3V234.3" stroke="#ff0000" stroke-width="1.1"/>
<path d="M640.0 233.7H646.0M643.0 230.7V236.7" stroke="#ff0000" stroke-width="1.1"/>
<path d="M638.5 232.5H644.5M641.5 229.5V235.5" stroke="#ff0000" stroke-width="1.1"/>
<path d="M800.8 262.4 L801.2 260.8 L801.6 259.1 L802.0 257.5 L802.5 255.9 L802.9 254.3 L803.3 252.6 L803.8 251.0 L804.2 249.4 L804.7 247.7 L805.2 246.1 L805.6 244.5 L806.1 242.9 L806.6 241.2 L807.1 239.6 L807.6 238.0 L808.2 236.3 L808.7 234.7 L809.2 233.1 L809.7 231.4 L810.3 229.8 L810.8 228.2 L811.4 226.6 L812.0 224.9 L812.5 223.3 L813.1 221.7 L813.7 220.1 L814.3 218.4 L814.9 216.8 L815.5 215.2 L816.1 213.5 L816.7 211.9 L817.3 210.3 L818.0 208.7 L818.6 207.0 L819.2 205.4 L819.9 203.8 L820.6 202.1 L821.2 200.5 L821.9 198.9 L822.6 197.3 L823.2 195.6 L823.9 194.0 L824.6 192.4 L825.3 190.8 L826.0 189.1 L826.7 187.5 L827.4 185.9 L828.2 184.2 L828.9 182.6 L829.6 181.0 L830.4 179.4 L831.1 177.7 L831.9 176.1 L832.6 174.5 L833.4 172.9 L834.1 171.2 L834.9 169.6 L835.7 168.0 L836.5 166.4 L837.3 164.7 L838.0 163.1 L838.8 161.5 L839.6 159.9 L840.4 158.2 L841.2 156.6 L842.1 155.0 L842.9 153.4 L843.7 151.7 L844.5 150.1 L845.4 148.5 L846.2 146.9 L847.0 145.2 L847.9 143.6 L848.7 142.0 L849.6 140.4 L850.4 138.8 L851.3 137.1 L852.2 135.5 L853.0 133.9 L853.9 132.3 L854.8 130.7 L855.6 129.0 L856.5 127.4 L857.4 125.8 L858.3 124.2 L859.2 122.6 L860.1 120.9 L861.0 119.3 L861.9 117.7 L862.8 116.1 L863.7 114.5 L864.6 112.9 L865.5 111.2 L866.4 109.6 L867.3 108.0 L868.2 106.4 L869.1 104.8 L870.1 103.2 L871.0 101.6 L871.9 100.0 L872.8 98.4 L873.8 96.8 L874.7 95.2 L875.6 93.6 L876.6 92.0 L877.5 90.4 L878.4 88.8 L879.4 87.2 L880.3 85.6 L881.2 84.0 L882.2 82.4 L883.1 80.8 L884.1 79.2 L885.0 77.6 L885.9 76.0 L886.9 74.5 L887.8 72.9 L888.8 71.3 L889.7 69.8 L890.6 68.2 L891.6 66.7 L892.5 65.1 L893.5 63.6 L894.4 62.1 L895.3 60.5 L896.3 59.0 L897.2 57.5 L898.1 56.1 L899.0 54.6 L900.0 53.2 L900.9 51.8 L901.8 50.4 L902.7 49.0 L903.6 47.7 L904.5 46.4 L905.5 45.2 L906.4 44.1 L907.4 43.1 L908.4 42.1 L909.4 41.3 L910.5 40.6 L911.8 40.1 L913.1 39.8 L914.7 39.7 L916.4 39.9 M821.4 293.5 L821.8 291.9 L822.3 290.3 L822.7 288.7 L823.2 287.1 L823.6 285.5 L824.1 283.9 L824.6 282.3 L825.0 280.7 L825.5 279.1 L826.0 277.5 L826.5 275.9 L827.0 274.3 L827.5 272.7 L828.0 271.1 L828.5 269.5 L829.0 267.9 L829.5 266.4 L830.1 264.8 L830.6 263.2 L831.1 261.6 L831.7 260.0 L832.2 258.4 L832.8 256.8 L833.4 255.2 L833.9 253.6 L834.5 252.0 L835.1 250.4 L835.6 248.8 L836.2 247.2 L836.8 245.6 L837.4 244.0 L838.0 242.4 L838.6 240.8 L839.2 239.3 L839.8 237.7 L840.5 236.1 L841.1 234.5 L841.7 232.9 L842.3 231.3 L843.0 229.7 L843.6 228.1 L844.2 226.5 L844.9 224.9 L845.5 223.4 L846.2 221.8 L846.9 220.2 L847.5 218.6 L848.2 217.0 L848.9 215.4 L849.5 213.8 L850.2 212.3 L850.9 210.7 L851.6 209.1 L852.3 207.5 L853.0 205.9 L853.7 204.3 L854.4 202.8 L855.1 201.2 L855.8 199.6 L856.5 198.0 L857.2 196.4 L857.9 194.9 L858.6 193.3 L859.3 191.7 L860.1 190.1 L860.8 188.6 L861.5 187.0 L862.3 185.4 L863.0 183.8 L863.7 182.3 L864.5 180.7 L865.2 179.1 L866.0 177.6 L866.7 176.0 L867.5 174.4 L868.2 172.9 L869.0 171.3 L869.7 169.7 L870.5 168.2 L871.2 166.6 L872.0 165.1 L872.8 163.5 L873.5 162.0 L874.3 160.4 L875.1 158.8 L875.8 157.3 L876.6 155.7 L877.4 154.2 L878.2 152.7 L878.9 151.1 L879.7 149.6 L880.5 148.0 L881.3 146.5 L882.1 145.0 L882.8 143.4 L883.6 141.9 L884.4 140.4 L885.2 138.8 L886.0 137.3 L886.8 135.8 L887.6 134.3 L888.4 132.8 L889.1 131.2 L889.9 129.7 L890.7 128.2 L891.5 126.7 L892.3 125.2 L893.1 123.7 L893.9 122.2 L894.7 120.8 L895.5 119.3 L896.3 117.8 L897.1 116.3 L897.8 114.9 L898.6 113.4 L899.4 112.0 L900.2 110.5 L901.0 109.1 L901.8 107.6 L902.6 106.2 L903.4 104.8 L904.2 103.4 L905.0 102.0 L905.8 100.6 L906.6 99.2 L907.4 97.8 L908.1 96.4 L908.9 95.1 L909.7 93.7 L910.5 92.4 L911.3 91.1 L912.1 89.8 L912.9 88.5 L913.7 87.2 L914.5 86.0 L915.3 84.8 L916.1 83.5 L917.0 82.3 L917.8 81.2 L918.6 80.0 L919.4 78.9 L920.3 77.8 L921.1 76.7 L922.0 75.7 L922.9 74.7 L923.8 73.7 L924.7 72.8 L925.6 71.9 L926.5 71.1 L927.5 70.2 L928.5 69.5 L929.5 68.8 L930.6 68.1 L931.7 67.5 L932.8 67.0 L934.0 66.5 L935.2 66.0 L936.5 65.7 L937.8 65.4 L939.2 65.1 L940.7 65.0 L942.2 64.9 L943.8 64.9 L945.5 64.9 L947.3 65.0 L949.1 65.2 L951.0 65.4 L953.0 65.8 L955.1 66.1 L957.3 66.6 L959.5 67.1 M787.6 284.2 L788.4 282.7 L789.2 281.2 L790.1 279.7 L790.9 278.2 L791.8 276.7 L792.6 275.2 L793.5 273.7 L794.4 272.2 L795.2 270.7 L796.1 269.2 L797.0 267.7 L797.9 266.2 L798.8 264.7 L799.7 263.2 L800.6 261.7 L801.5 260.2 L802.5 258.7 L803.4 257.2 L804.3 255.7 L805.3 254.2 L806.2 252.8 L807.2 251.3 L808.2 249.8 L809.1 248.3 L810.1 246.8 L811.1 245.3 L812.1 243.8 L813.1 242.3 L814.1 240.9 L815.1 239.4 L816.1 237.9 L817.1 236.4 L818.1 234.9 L819.1 233.5 L820.2 232.0 L821.2 230.5 L822.2 229.0 L823.3 227.6 L824.3 226.1 L825.4 224.6 L826.4 223.2 L827.5 221.7 L828.6 220.2 L829.6 218.8 L830.7 217.3 L831.8 215.9 L832.9 214.4 L834.0 213.0 L835.0 211.5 L836.1 210.0 L837.2 208.6 L838.3 207.2 L839.4 205.7 L840.5 204.3 L841.7 202.8 L842.8 201.4 L843.9 200.0 L845.0 198.5 L846.1 197.1 L847.2 195.7 L848.4 194.2 L849.5 192.8 L850.6 191.4 L851.8 190.0 L852.9 188.6 L854.0 187.2 L855.2 185.7 L856.3 184.3 L857.5 182.9 L858.6 181.5 L859.8 180.2 L860.9 178.8 L862.1 177.4 L863.2 176.0 L864.4 174.6 L865.5 173.2 L866.7 171.9 L867.8 170.5 L869.0 169.1 L870.1 167.8 L871.3 166.4 L872.5 165.1 L873.6 163.7 L874.8 162.4 L875.9 161.1 L877.1 159.7 L878.3 158.4 L879.4 157.1 L880.6 155.8 L881.8 154.5 L882.9 153.2 L884.1 151.9 L885.2 150.6 L886.4 149.4 L887.6 148.1 L888.7 146.8 L889.9 145.6 L891.1 144.3 L892.2 143.1 L893.4 141.9 L894.6 140.6 L895.7 139.4 L896.9 138.2 L898.0 137.0 L899.2 135.9 L900.4 134.7 L901.5 133.5 L902.7 132.4 L903.8 131.2 L905.0 130.1 L906.2 129.0 L907.3 127.9 L908.5 126.8 L909.7 125.7 L910.8 124.7 L912.0 123.6 L913.1 122.6 L914.3 121.6 L915.5 120.6 L916.7 119.6 L917.8 118.6 L919.0 117.7 L920.2 116.8 L921.4 115.9 L922.5 115.0 L923.7 114.1 L924.9 113.2 L926.1 112.4 L927.3 111.6 L928.5 110.8 L929.7 110.1 L931.0 109.3 L932.2 108.6 L933.4 107.9 L934.7 107.2 L935.9 106.6 L937.2 106.0 L938.5 105.4 L939.7 104.9 L941.1 104.3 L942.4 103.8 L943.7 103.4 L945.0 102.9 L946.4 102.5 L947.8 102.1 L949.2 101.8 L950.6 101.5 L952.0 101.2 L953.5 101.0 L954.9 100.8 L956.4 100.6 L958.0 100.4 L959.5 100.3 L961.1 100.2 L962.7 100.2 L964.3 100.2 L966.0 100.2 L967.7 100.3 L969.4 100.4 L971.1 100.5 M794.5 288.1 L795.2 286.5 L795.8 285.0 L796.5 283.4 L797.2 281.9 L797.9 280.4 L798.5 278.8 L799.2 277.3 L799.9 275.7 L800.7 274.2 L801.4 272.6 L802.1 271.1 L802.8 269.5 L803.6 268.0 L804.3 266.4 L805.1 264.9 L805.8 263.3 L806.6 261.8 L807.4 260.2 L808.2 258.7 L809.0 257.2 L809.7 255.6 L810.5 254.1 L811.4 252.5 L812.2 251.0 L813.0 249.4 L813.8 247.9 L814.6 246.4 L815.5 244.8 L816.3 243.3 L817.2 241.8 L818.0 240.2 L818.9 238.7 L819.7 237.1 L820.6 235.6 L821.5 234.1 L822.4 232.5 L823.2 231.0 L824.1 229.5 L825.0 227.9 L825.9 226.4 L826.8 224.9 L827.7 223.4 L828.7 221.8 L829.6 220.3 L830.5 218.8 L831.4 217.3 L832.4 215.7 L833.3 214.2 L834.2 212.7 L835.2 211.2 L836.1 209.7 L837.1 208.1 L838.0 206.6 L839.0 205.1 L840.0 203.6 L840.9 202.1 L841.9 200.6 L842.9 199.1 L843.9 197.6 L844.9 196.1 L845.8 194.6 L846.8 193.1 L847.8 191.5 L848.8 190.1 L849.8 188.6 L850.8 187.1 L851.8 185.6 L852.8 184.1 L853.9 182.6 L854.9 181.1 L855.9 179.6 L856.9 178.1 L857.9 176.7 L858.9 175.2 L860.0 173.7 L861.0 172.2 L862.0 170.8 L863.1 169.3 L864.1 167.8 L865.1 166.4 L866.2 164.9 L867.2 163.5 L868.2 162.0 L869.3 160.6 L870.3 159.1 L871.4 157.7 L872.4 156.2 L873.5 154.8 L874.5 153.4 L875.6 151.9 L876.6 150.5 L877.6 149.1 L878.7 147.7 L879.7 146.3 L880.8 144.9 L881.8 143.5 L882.9 142.1 L884.0 140.7 L885.0 139.3 L886.1 137.9 L887.1 136.6 L888.2 135.2 L889.2 133.8 L890.3 132.5 L891.3 131.2 L892.4 129.8 L893.4 128.5 L894.5 127.2 L895.5 125.9 L896.6 124.6 L897.6 123.3 L898.7 122.0 L899.7 120.7 L900.8 119.4 L901.8 118.2 L902.9 116.9 L903.9 115.7 L905.0 114.5 L906.0 113.3 L907.1 112.1 L908.1 110.9 L909.2 109.7 L910.2 108.6 L911.3 107.4 L912.3 106.3 L913.4 105.2 L914.5 104.1 L915.5 103.1 L916.6 102.0 L917.7 101.0 L918.7 100.0 L919.8 99.0 L920.9 98.0 L922.0 97.1 L923.1 96.2 L924.2 95.3 L925.3 94.4 L926.4 93.6 L927.5 92.8 L928.6 92.0 L929.8 91.2 L930.9 90.5 L932.1 89.8 L933.3 89.2 L934.5 88.6 L935.7 88.0 L937.0 87.4 L938.2 86.9 L939.5 86.5 L940.8 86.0 L942.1 85.7 L943.5 85.3 L944.9 85.0 L946.3 84.7 L947.8 84.5 L949.2 84.4 L950.8 84.2 L952.3 84.2 L953.9 84.1 L955.6 84.1 L957.2 84.2 L958.9 84.3 L960.7 84.4 L962.5 84.6 L964.4 84.8 L966.3 85.1 L968.2 85.4 L970.2 85.8 L972.2 86.2 L974.3 86.6 L976.4 87.1 L978.6 87.6 L980.8 88.2 L983.1 88.8 L985.4 89.4 L987.7 90.1 L990.1 90.8 L992.5 91.5 L995.0 92.3 L997.5 93.0 L1000.1 93.9 L1002.6 94.7 L1005.3 95.6 L1007.9 96.5 L1010.6 97.4 L1013.3 98.4 L1016.1 99.3 L1018.9 100.3 L1021.7 101.4 M807.0 290.4 L807.7 288.9 L808.4 287.3 L809.1 285.8 L809.8 284.3 L810.6 282.8 L811.3 281.2 L812.0 279.7 L812.8 278.2 L813.5 276.6 L814.3 275.1 L815.0 273.6 L815.8 272.1 L816.6 270.5 L817.3 269.0 L818.1 267.5 L818.9 266.0 L819.7 264.4 L820.5 262.9 L821.3 261.4 L822.1 259.9 L822.9 258.4 L823.7 256.8 L824.6 255.3 L825.4 253.8 L826.2 252.3 L827.1 250.8 L827.9 249.3 L828.8 247.7 L829.6 246.2 L830.5 244.7 L831.3 243.2 L832.2 241.7 L833.1 240.2 L834.0 238.7 L834.8 237.2 L835.7 235.6 L836.6 234.1 L837.5 232.6 L838.4 231.1 L839.3 229.6 L840.2 228.1 L841.1 226.6 L842.0 225.1 L842.9 223.6 L843.9 222.1 L844.8 220.6 L845.7 219.1 L846.6 217.6 L847.6 216.1 L848.5 214.6 L849.5 213.2 L850.4 211.7 L851.3 210.2 L852.3 208.7 L853.2 207.2 L854.2 205.7 L855.2 204.3 L856.1 202.8 L857.1 201.3 L858.0 199.8 L859.0 198.4 L860.0 196.9 L861.0 195.4 L861.9 194.0 L862.9 192.5 L863.9 191.0 L864.9 189.6 L865.9 188.1 L866.8 186.7 L867.8 185.2 L868.8 183.8 L869.8 182.3 L870.8 180.9 L871.8 179.4 L872.8 178.0 L873.8 176.6 L874.8 175.1 L875.8 173.7 L876.8 172.3 L877.8 170.9 L878.8 169.4 L879.8 168.0 L880.8 166.6 L881.8 165.2 L882.8 163.8 L883.8 162.4 L884.8 161.0 L885.8 159.6 L886.8 158.3 L887.8 156.9 L888.8 155.5 L889.8 154.1 L890.8 152.8 L891.8 151.4 L892.8 150.1 L893.8 148.7 L894.8 147.4 L895.8 146.0 L896.9 144.7 L897.9 143.4 L898.9 142.1 L899.9 140.8 L900.9 139.5 L901.9 138.2 L902.9 136.9 L903.9 135.6 L904.9 134.3 L905.9 133.1 L906.9 131.8 L907.9 130.6 L908.9 129.4 L909.9 128.1 L911.0 126.9 L912.0 125.7 L913.0 124.6 L914.0 123.4 L915.0 122.2 L916.0 121.1 L917.0 119.9 L918.0 118.8 L919.1 117.7 L920.1 116.6 L921.1 115.5 L922.1 114.5 L923.1 113.4 L924.2 112.4 L925.2 111.4 L926.2 110.4 L927.3 109.4 L928.3 108.5 L929.4 107.5 L930.4 106.6 L931.5 105.7 L932.6 104.9 L933.7 104.0 L934.7 103.2 L935.8 102.4 L936.9 101.6 L938.1 100.9 L939.2 100.2 L940.3 99.5 L941.5 98.8 L942.7 98.2 L943.9 97.6 L945.1 97.0 L946.3 96.5 L947.5 96.0 L948.8 95.5 L950.1 95.1 L951.4 94.7 L952.7 94.3 L954.1 94.0 L955.5 93.7 L956.9 93.5 L958.3 93.2 L959.8 93.1 L961.3 92.9 L962.9 92.8 L964.4 92.8 L966.1 92.7 L967.7 92.8 L969.4 92.8 L971.1 92.9 L972.9 93.0 L974.7 93.2 L976.5 93.4 L978.4 93.7 L980.3 93.9 L982.3 94.3 L984.3 94.6 L986.3 95.0 L988.4 95.4 L990.6 95.9 L992.7 96.4 L994.9 96.9 L997.2 97.5 L999.5 98.1 L1001.8 98.7 L1004.2 99.4 L1006.6 100.1 L1009.0 100.8 L1011.5 101.5 L1014.0 102.3 L1016.5 103.1 L1019.1 103.9 L1021.7 104.7 L1024.4 105.6 L1027.0 106.5 L1029.8 107.4 L1032.5 108.3 L1035.2 109.3 L1038.0 110.2 L1040.8 111.2 L1043.7 112.2 L1046.5 113.3 L1049.4 114.3 L1052.3 115.4 L1055.2 116.4 L1058.2 117.5 L1061.1 118.6 L1064.1 119.8 L1067.1 120.9 L1070.1 122.0 L1073.2 123.2 L1076.2 124.4 L1079.2 125.6 L1082.3 126.8 L1085.4 128.0 L1088.4 129.2 L1091.5 130.4 L1094.6 131.6 L1097.7 132.9 L1100.8 134.2 L1104.0 135.4 M792.6 283.4 L794.2 283.0 L795.8 282.5 L797.5 282.1 L799.1 281.6 L800.7 281.2 L802.3 280.8 L803.9 280.3 L805.5 279.9 L807.2 279.5 L808.8 279.1 L810.4 278.6 L812.0 278.2 L813.6 277.8 L815.3 277.4 L816.9 277.0 L818.5 276.6 L820.1 276.2 L821.7 275.8 L823.4 275.4 L825.0 275.0 L826.6 274.6 L828.2 274.2 L829.8 273.9 L831.5 273.5 L833.1 273.1 L834.7 272.7 L836.3 272.4 L837.9 272.0 L839.6 271.6 L841.2 271.3 L842.8 270.9 L844.4 270.6 L846.0 270.2 L847.6 269.9 L849.3 269.6 L850.9 269.2 L852.5 268.9 L854.1 268.6 L855.7 268.2 L857.4 267.9 L859.0 267.6 L860.6 267.3 L862.2 267.0 L863.8 266.7 L865.4 266.4 L867.1 266.1 L868.7 265.8 L870.3 265.5 L871.9 265.2 L873.5 265.0 L875.1 264.7 L876.8 264.4 L878.4 264.1 L880.0 263.9 L881.6 263.6 L883.2 263.4 L884.8 263.1 L886.5 262.9 L888.1 262.6 L889.7 262.4 L891.3 262.2 L892.9 262.0 L894.5 261.7 L896.2 261.5 L897.8 261.3 L899.4 261.1 L901.0 260.9 L902.6 260.7 L904.2 260.5 L905.8 260.3 L907.5 260.1 L909.1 259.9 L910.7 259.8 L912.3 259.6 L913.9 259.4 L915.5 259.3 L917.1 259.1 L918.8 259.0 L920.4 258.8 L922.0 258.7 L923.6 258.5 L925.2 258.4 L926.8 258.3 L928.5 258.1 L930.1 258.0 L931.7 257.9 L933.3 257.8 L934.9 257.7 L936.6 257.6" fill="none" stroke="#ff2200" stroke-width="1.6" stroke-dasharray="1.5 2.2"/>
<path d="M916.4 39.9 L917.2 40.0 L918.0 40.1 L918.9 40.3 L919.8 40.5 L920.7 40.7 L921.7 41.0 L922.7 41.3 L923.7 41.6 L924.8 41.9 L925.9 42.3 L927.0 42.6 L928.2 43.0 L929.4 43.4 L930.6 43.9 L931.9 44.3 L933.1 44.8 L934.4 45.2 L935.8 45.7 L937.1 46.2 L938.4 46.7 L939.8 47.2 L941.2 47.7 L942.6 48.3 L944.0 48.8 L945.4 49.3 L946.9 49.9 L948.3 50.5 L949.8 51.0 L951.3 51.6 L952.7 52.1 L954.2 52.7 L955.7 53.3 L957.2 53.9 L958.7 54.5 L960.3 55.1 L961.8 55.7 L963.3 56.2 M959.5 67.1 L960.5 67.3 L961.4 67.5 L962.4 67.8 L963.4 68.0 L964.3 68.3 L965.3 68.5 L966.4 68.8 L967.4 69.1 L968.4 69.4 L969.5 69.7 L970.5 70.0 L971.6 70.3 L972.7 70.6 L973.8 71.0 L974.9 71.3 L976.0 71.7 L977.2 72.0 L978.3 72.4 L979.5 72.7 L980.6 73.1 L981.8 73.5 L983.0 73.9 L984.2 74.3 L985.4 74.7 L986.6 75.1 L987.8 75.5 L989.1 75.9 L990.3 76.3 L991.5 76.7 L992.8 77.1 L994.1 77.6 L995.3 78.0 L996.6 78.5 L997.9 78.9 L999.2 79.4 L1000.5 79.8 L1001.8 80.3 L1003.1 80.7 L1004.5 81.2 L1005.8 81.7 L1007.1 82.2 L1008.5 82.6 L1009.8 83.1 L1011.2 83.6 L1012.5 84.1 L1013.9 84.6 L1015.3 85.1 L1016.6 85.6 L1018.0 86.1 L1019.4 86.6 L1020.8 87.1 M971.1 100.5 L971.8 100.6 L972.5 100.6 L973.3 100.7 L974.0 100.8 L974.7 100.9 L975.4 101.0 L976.2 101.1 L976.9 101.2 L977.7 101.3 L978.4 101.4 L979.2 101.5 L980.0 101.6 L980.7 101.8 L981.5 101.9 L982.3 102.0 L983.1 102.2 L983.9 102.3 L984.7 102.5 L985.5 102.6 L986.3 102.8 L987.1 103.0 L987.9 103.1 L988.7 103.3 L989.6 103.5 L990.4 103.7 L991.2 103.9 L992.1 104.1 L992.9 104.3 L993.8 104.5 L994.6 104.7 L995.5 104.9 L996.4 105.1 L997.2 105.4 L998.1 105.6 L999.0 105.8 L999.9 106.1 L1000.8 106.3 L1001.7 106.6 L1002.6 106.8 L1003.5 107.1 L1004.4 107.3 L1005.3 107.6 L1006.3 107.9 L1007.2 108.2 L1008.1 108.4 L1009.1 108.7 L1010.0 109.0 M1021.7 101.4 L1022.8 101.8 L1024.0 102.2 L1025.1 102.6 L1026.3 103.0 L1027.4 103.5 L1028.6 103.9 L1029.8 104.3 L1031.0 104.8 L1032.1 105.2 L1033.3 105.7 L1034.5 106.1 L1035.7 106.6 L1036.9 107.0 L1038.1 107.5 L1039.3 107.9 L1040.5 108.4 L1041.7 108.8 L1042.9 109.3 L1044.1 109.8 L1045.3 110.2 L1046.5 110.7 L1047.7 111.2 L1049.0 111.7 L1050.2 112.1 L1051.4 112.6 L1052.6 113.1 L1053.9 113.6 L1055.1 114.1 L1056.3 114.6 L1057.6 115.1 L1058.8 115.6 L1060.1 116.1 L1061.3 116.5 L1062.6 117.0 L1063.8 117.5 L1065.1 118.1 L1066.3 118.6 L1067.6 119.1 L1068.8 119.6 L1070.1 120.1 L1071.3 120.6 L1072.6 121.1 L1073.9 121.6 L1075.1 122.1 L1076.4 122.7 L1077.7 123.2 L1078.9 123.7 L1080.2 124.2 L1081.5 124.7 L1082.7 125.3 L1084.0 125.8 M1104.0 135.4 L1105.2 135.9 L1106.5 136.5 L1107.8 137.0 L1109.1 137.5 L1110.3 138.0 L1111.6 138.6 L1112.9 139.1 L1114.2 139.6 L1115.4 140.1 L1116.7 140.7 L1118.0 141.2 M936.6 257.6 L937.2 257.6 L937.9 257.5 L938.5 257.5 L939.2 257.4 L939.9 257.4 L940.5 257.4 L941.2 257.3 L941.8 257.3 L942.5 257.3 L943.2 257.2 L943.8 257.2 L944.5 257.2 L945.1 257.2 L945.8 257.1 L946.5 257.1 L947.1 257.1 L947.8 257.0 L948.4 257.0 L949.1 257.0" fill="none" stroke="#ff2200" stroke-width="1.75"/>
<circle cx="963.3" cy="56.2" r="1.5" fill="#ff5a40"/>
<circle cx="1020.8" cy="87.1" r="1.5" fill="#ff5a40"/>
<circle cx="1010.0" cy="109.0" r="1.5" fill="#ff5a40"/>
<circle cx="1084.0" cy="125.8" r="1.5" fill="#ff5a40"/>
<circle cx="1118.0" cy="141.2" r="1.5" fill="#ff5a40"/>
<circle cx="949.1" cy="257.0" r="1.5" fill="#ff5a40"/>
<path d="M797.8 262.4H803.8M800.8 259.4V265.4" stroke="#ff0000" stroke-width="1.1"/>
<path d="M818.4 293.5H824.4M821.4 290.5V296.5" stroke="#ff0000" stroke-width="1.1"/>
<path d="M784.6 284.2H790.6M787.6 281.2V287.2" stroke="#ff0000" stroke-width="1.1"/>
<path d="M791.5 288.1H797.5M794.5 285.1V291.1" stroke="#ff0000" stroke-width="1.1"/>
<path d="M804.0 290.4H810.0M807.0 287.4V293.4" stroke="#ff0000" stroke-width="1.1"/>
<path d="M789.6 283.4H795.6M792.6 280.4V286.4" stroke="#ff0000" stroke-width="1.1"/>
<path d="M1024.0 98.0 L1025.3 98.6 L1026.6 99.3 L1027.9 99.9 L1029.2 100.5 L1030.5 101.1 L1031.8 101.8 L1033.1 102.4 L1034.4 103.0 L1035.7 103.7 L1037.0 104.3 L1038.3 104.9 L1039.6 105.6 L1040.9 106.2 L1042.2 106.9 L1043.5 107.5 M1018.0 105.0 L1019.1 105.6 L1020.3 106.2 L1021.4 106.8 L1022.5 107.3 L1023.6 107.9 L1024.8 108.5 L1025.9 109.1 L1027.0 109.7 L1028.2 110.3 L1029.3 110.9 L1030.4 111.5 L1031.6 112.1 L1032.7 112.7 L1033.8 113.3 L1035.0 113.8 L1036.1 114.4 L1037.2 115.0 L1038.3 115.6 L1039.5 116.2 L1040.6 116.8 L1041.7 117.4 L1042.9 118.0 L1044.0 118.7 L1045.1 119.3 L1046.2 119.9 L1047.4 120.5 L1048.5 121.1 L1049.6 121.7 L1050.8 122.3 L1051.9 122.9 L1053.0 123.5 M1046.0 116.5 L1046.9 116.7 L1047.9 116.9 L1048.9 117.1 L1049.8 117.3 L1050.8 117.5 L1051.8 117.8 L1052.7 118.0 L1053.7 118.2 L1054.7 118.4 L1055.7 118.7 L1056.7 118.9 L1057.7 119.2 L1058.8 119.4 L1059.8 119.7 L1060.8 119.9 L1061.9 120.2 L1062.9 120.5 L1063.9 120.7 L1065.0 121.0 M983.0 111.5 L983.6 111.4 L984.1 111.3 L984.7 111.2 L985.3 111.1 L985.9 111.0 L986.5 110.9 L987.1 110.9 L987.7 110.8 L988.3 110.7 L988.9 110.7 L989.5 110.6 L990.1 110.6 L990.8 110.5 L991.4 110.5 L992.0 110.5 L992.7 110.4 L993.3 110.4 L994.0 110.4 L994.6 110.4 L995.3 110.4 L996.0 110.4 L996.6 110.4 L997.3 110.4 L998.0 110.4 L998.7 110.4 L999.4 110.4 L1000.1 110.4 L1000.8 110.5 L1001.5 110.5 M1089.0 124.5 L1090.3 125.1 L1091.5 125.8 L1092.7 126.4 L1094.0 127.1 L1095.2 127.7 L1096.5 128.3 L1097.7 129.0 L1099.0 129.6 L1100.2 130.3 L1101.4 130.9 L1102.7 131.5 L1103.9 132.2 L1105.1 132.8 L1106.3 133.5 L1107.6 134.1 L1108.8 134.7 L1110.0 135.4 L1111.2 136.0 L1112.4 136.7 L1113.6 137.3 L1114.9 137.9 L1116.1 138.6 L1117.3 139.2 L1118.5 139.9 L1119.7 140.5 L1120.9 141.1 L1122.1 141.8 L1123.3 142.4 L1124.4 143.1 L1125.6 143.7 L1126.8 144.4 L1128.0 145.0 M1060.0 145.5 L1061.0 146.1 L1062.1 146.7 L1063.1 147.4 L1064.2 148.0 L1065.2 148.6 L1066.3 149.2 L1067.3 149.9 L1068.3 150.5 L1069.4 151.1 L1070.4 151.7 L1071.5 152.4 L1072.5 153.0 M971.0 149.5 L971.6 150.1 L972.2 150.7 L972.9 151.3 L973.5 151.9 L974.1 152.4 L974.7 153.0 L975.3 153.6 L976.0 154.2 L976.6 154.8 L977.2 155.4 M992.0 135.6 L992.5 136.3 L993.0 137.0 L993.5 137.7 L994.0 138.5 L994.5 139.2 L995.0 139.9 L995.5 140.6 M1002.9 130.1 L1003.3 129.8 L1003.7 129.6 L1004.1 129.3 L1004.5 129.1 L1004.9 128.8 L1005.4 128.6 L1005.8 128.3 L1006.2 128.1 L1006.6 127.9 L1007.1 127.6 L1007.5 127.4 M1050.0 91.8 L1051.8 92.4 L1053.7 92.9 L1055.5 93.5 M1153.0 134.0 L1154.5 134.6 L1156.0 135.3 L1157.5 135.9 L1159.1 136.6 L1160.6 137.2 L1162.1 137.8 L1163.6 138.5 L1165.1 139.1 L1166.6 139.8 L1168.1 140.4 L1169.6 141.0 L1171.0 141.7 L1172.5 142.3 L1174.0 143.0 L1175.5 143.6 L1177.0 144.3 L1178.4 144.9 L1179.9 145.5 L1181.4 146.2 L1182.9 146.8 L1184.3 147.5 L1185.8 148.1 L1187.2 148.8 L1188.7 149.4 L1190.2 150.0 L1191.6 150.7 L1193.0 151.3 L1194.5 152.0 L1195.9 152.6 L1197.4 153.3 L1198.8 153.9 L1200.2 154.6 L1201.7 155.2 L1203.1 155.9 L1204.5 156.5 M1144.0 154.5 L1144.5 155.0 L1144.9 155.6 L1145.4 156.1 L1145.9 156.6 L1146.3 157.2 L1146.8 157.7 L1147.2 158.3 L1147.7 158.8 L1148.2 159.3 L1148.6 159.9 L1149.1 160.4 L1149.5 161.0 L1150.0 161.5 L1150.5 162.1 L1150.9 162.6 L1151.4 163.1 L1151.8 163.7 L1152.3 164.2 L1152.7 164.8 L1153.2 165.3 L1153.6 165.9 L1154.1 166.4 L1154.5 167.0 L1155.0 167.6 L1155.4 168.1 L1155.9 168.7 L1156.3 169.2 L1156.7 169.8 L1157.2 170.3 L1157.6 170.9 L1158.1 171.4 L1158.5 172.0 M990.4 176.8 L991.1 177.0 L991.8 177.3 L992.6 177.6 L993.3 177.8 L994.0 178.1 L994.8 178.3 L995.5 178.6 L996.2 178.8 L996.9 179.1 L997.7 179.4 L998.4 179.6 L999.1 179.9 L999.9 180.2 L1000.6 180.5 L1001.3 180.7 L1002.1 181.0 L1002.8 181.3 L1003.5 181.6 L1004.3 181.8 L1005.0 182.1 L1005.8 182.4 L1006.5 182.7 L1007.2 183.0 L1008.0 183.3 L1008.7 183.6 L1009.5 183.9 L1010.2 184.2 L1010.9 184.5 L1011.7 184.8 L1012.4 185.1 L1013.2 185.4 L1013.9 185.7 L1014.7 186.0 L1015.4 186.3 L1016.2 186.6 L1016.9 186.9 M1088.0 182.0 L1088.9 182.5 L1089.8 183.0 L1090.6 183.5 L1091.5 184.0 L1092.4 184.5 L1093.3 185.0 L1094.1 185.5 L1095.0 186.0 L1095.9 186.5 L1096.8 187.0 L1097.6 187.5 L1098.5 188.0 L1099.4 188.5 L1100.3 189.0 L1101.1 189.5 L1102.0 190.0 M1062.0 239.7 L1062.4 240.4 L1062.7 241.0 L1063.1 241.7 L1063.5 242.3 L1063.8 243.0 L1064.2 243.7 L1064.5 244.3 L1064.9 245.0 L1065.3 245.6 L1065.6 246.3 L1066.0 247.0 L1066.3 247.6 L1066.7 248.3 L1067.0 249.0 L1067.3 249.6 L1067.7 250.3 L1068.0 250.9 L1068.4 251.6 L1068.7 252.3 L1069.0 252.9 L1069.3 253.6 L1069.7 254.2 L1070.0 254.9 M1096.0 236.0 L1096.7 236.5 L1097.4 237.0 L1098.1 237.5 L1098.7 238.0 L1099.4 238.5 L1100.1 239.0 L1100.8 239.5 L1101.4 240.0 L1102.1 240.5 L1102.8 241.0 L1103.5 241.4 L1104.1 241.9 L1104.8 242.4 L1105.5 242.9 L1106.1 243.4 L1106.8 243.9 L1107.5 244.4 L1108.1 244.9 L1108.8 245.4 L1109.5 245.9 L1110.1 246.5 L1110.8 247.0 L1111.4 247.5 L1112.1 248.0 L1112.8 248.5 L1113.4 249.0 L1114.1 249.5 L1114.7 250.0 L1115.4 250.5 L1116.0 251.0 L1116.7 251.5 L1117.3 252.0 M1184.0 193.3 L1184.5 193.9 L1185.1 194.5 L1185.6 195.2 L1186.1 195.8 L1186.7 196.4 L1187.2 197.0 L1187.7 197.6 L1188.2 198.2 L1188.8 198.9 L1189.3 199.5 L1189.8 200.1 L1190.3 200.7 L1190.8 201.3 L1191.3 202.0 L1191.8 202.6 L1192.3 203.2 L1192.8 203.8 L1193.3 204.4 L1193.8 205.1 L1194.3 205.7 L1194.7 206.3 L1195.2 206.9 L1195.7 207.6 L1196.2 208.2 L1196.6 208.8 L1197.1 209.4 L1197.6 210.0 L1198.0 210.7 L1198.5 211.3 L1198.9 211.9 L1199.4 212.5 L1199.8 213.2 L1200.3 213.8 L1200.7 214.4 M892.7 95.0 L893.3 95.3 L893.8 95.5 L894.4 95.8 L895.0 96.1 L895.5 96.3 L896.1 96.6 L896.7 96.9 L897.2 97.2 L897.8 97.5 L898.4 97.8 L898.9 98.1 L899.5 98.4 L900.1 98.7 L900.6 99.0 L901.2 99.4 L901.8 99.7 L902.3 100.0 L902.9 100.4 L903.4 100.7 L904.0 101.1 L904.6 101.4 L905.1 101.8 L905.7 102.1 L906.3 102.5 L906.8 102.8 L907.4 103.2 M864.9 84.7 L864.9 84.1 L864.9 83.6 L864.9 83.0 L864.9 82.4 L864.9 81.9 L864.9 81.3 L864.9 80.7 L864.9 80.2 L864.9 79.6 L864.8 79.1 L864.8 78.5 L864.8 78.0 L864.8 77.4 L864.8 76.9 L864.8 76.4 L864.7 75.8 L864.7 75.3" fill="none" stroke="#939393" stroke-width="1.3"/>
<path d="M607.9 229.2 L608.9 227.9 L610.0 226.6 L611.2 225.3 L612.5 224.0 L613.8 222.8 L615.2 221.5 L616.7 220.2 L618.2 219.0 L619.8 217.8 L621.4 216.6 L623.1 215.5 L624.8 214.4 L626.5 213.3 L628.3 212.3 L630.1 211.3 L631.9 210.4 L633.7 209.5 L635.5 208.6 L637.2 207.9 L639.0 207.1 L640.8 206.5 L642.5 205.9 L644.2 205.3 L645.9 204.9 L647.5 204.5 L649.0 204.2 L650.6 203.9 L652.0 203.7 L653.4 203.6 L654.7 203.6 L656.0 203.6 L657.2 203.7 L658.3 203.9 L659.3 204.2 L660.2 204.5 L661.1 204.9 L661.9 205.3 L662.6 205.9 L663.2 206.5 L663.7 207.1 L664.1 207.9 L664.5 208.6 L664.7 209.5 L664.9 210.4 L665.0 211.3 L665.0 212.3 L664.9 213.3 L664.8 214.4 L664.6 215.5 L664.2 216.6 L663.9 217.8 L663.4 219.0 L662.9 220.2 L662.3 221.5 L661.6 222.8 L660.9 224.0 L660.1 225.3 L659.2 226.6 L658.3 227.9 L657.4 229.2 L656.4 230.5 L655.3 231.7 L654.2 233.0 L653.0 234.3 L651.8 235.5 L650.6 236.7 L649.3 237.9 L648.0 239.0 L646.7 240.2 L645.3 241.3 L644.0 242.3 L642.5 243.4 L641.1 244.3 L639.7 245.3 L638.2 246.2 L636.7 247.0 L635.2 247.8 L633.8 248.6 L632.3 249.3 L630.8 249.9 L629.3 250.5 L627.8 251.0 L626.3 251.5 L624.9 251.9 L623.4 252.2 L622.0 252.5 L620.6 252.7 L619.3 252.9 L617.9 253.0 L616.6 253.0 L615.3 253.0 L614.1 252.9 L612.9 252.7 L611.8 252.5 L610.7 252.2 L609.6 251.9 L608.7 251.5 L607.7 251.0 L606.9 250.5 L606.1 249.9 L605.4 249.3 L604.7 248.6 L604.2 247.8 L603.7 247.0 L603.3 246.2 L602.9 245.3 L602.7 244.3 L602.6 243.4 L602.5 242.3 L602.5 241.3 L602.6 240.2 L602.9 239.0 L603.2 237.9 L603.6 236.7 L604.0 235.5 L604.6 234.3 L605.3 233.0 L606.1 231.7 L606.9 230.5 L607.9 229.2Z" fill="none" stroke="#d414f4" stroke-width="2.0"/>
<text x="633.3" y="230.8" text-anchor="middle" font-family="Liberation Sans" font-size="11" textLength="20.3" lengthAdjust="spacingAndGlyphs" fill="#ffffff">EGE</text>
<path d="M772.7 288.6 L772.9 287.3 L773.1 286.0 L773.4 284.7 L773.8 283.4 L774.3 282.2 L774.8 280.9 L775.4 279.7 L776.0 278.5 L776.7 277.3 L777.5 276.2 L778.3 275.1 L779.2 274.0 L780.1 272.9 L781.1 271.9 L782.2 271.0 L783.2 270.1 L784.3 269.2 L785.5 268.4 L786.7 267.7 L787.9 267.0 L789.1 266.3 L790.4 265.8 L791.7 265.3 L793.0 264.8 L794.3 264.4 L795.6 264.1 L796.9 263.9 L798.2 263.7 L799.5 263.6 L800.8 263.6 L802.1 263.6 L803.4 263.7 L804.6 263.9 L805.8 264.1 L807.0 264.4 L808.2 264.8 L809.4 265.3 L810.5 265.8 L811.5 266.3 L812.6 267.0 L813.6 267.7 L814.5 268.4 L815.4 269.2 L816.3 270.1 L817.1 271.0 L817.8 271.9 L818.5 272.9 L819.2 274.0 L819.8 275.1 L820.3 276.2 L820.8 277.3 L821.2 278.5 L821.5 279.7 L821.8 280.9 L822.0 282.2 L822.2 283.4 L822.3 284.7 L822.3 286.0 L822.3 287.3 L822.2 288.6 L822.1 289.9 L821.8 291.2 L821.6 292.4 L821.2 293.7 L820.8 294.9 L820.3 296.2 L819.8 297.4 L819.3 298.6 L818.6 299.7 L817.9 300.8 L817.2 301.9 L816.4 303.0 L815.6 304.0 L814.7 305.0 L813.7 305.9 L812.8 306.8 L811.7 307.6 L810.7 308.4 L809.6 309.1 L808.5 309.8 L807.3 310.4 L806.1 310.9 L804.9 311.4 L803.7 311.8 L802.4 312.2 L801.2 312.5 L799.9 312.7 L798.6 312.9 L797.3 313.0 L796.0 313.0 L794.8 313.0 L793.5 312.9 L792.2 312.7 L790.9 312.5 L789.7 312.2 L788.4 311.8 L787.2 311.4 L786.1 310.9 L784.9 310.4 L783.8 309.8 L782.7 309.1 L781.7 308.4 L780.7 307.6 L779.7 306.8 L778.8 305.9 L778.0 305.0 L777.2 304.0 L776.4 303.0 L775.7 301.9 L775.1 300.8 L774.6 299.7 L774.1 298.6 L773.7 297.4 L773.3 296.2 L773.0 294.9 L772.8 293.7 L772.7 292.4 L772.6 291.2 L772.7 289.9 L772.7 288.6Z" fill="none" stroke="#ff2200" stroke-width="2.0"/>
<text x="797.5" y="292.2" text-anchor="middle" font-family="Liberation Sans" font-size="11" textLength="19.3" lengthAdjust="spacingAndGlyphs" fill="#ffffff">STA</text>
<text x="315.5" y="30.10" font-family="Liberation Mono" font-size="13.93" fill="#ffffff" xml:space="preserve">FR000A</text>
<text x="315.5" y="43.08" font-family="Liberation Mono" font-size="13.93" fill="#ffffff" xml:space="preserve">Beg: 20251010 19:26:13 (sol = 197.39°)</text>
<text x="315.5" y="56.06" font-family="Liberation Mono" font-size="13.93" fill="#ffffff" xml:space="preserve">End: 20251011 04:12:11 (sol = 197.75°)</text>
<text x="315.5" y="69.04" font-family="Liberation Mono" font-size="13.93" fill="#ffffff" xml:space="preserve">--------------------------------------</text>
<text x="315.5" y="82.02" font-family="Liberation Mono" font-size="13.93" fill="#ffffff" xml:space="preserve">...: 20</text>
<text x="315.5" y="95.00" font-family="Liberation Mono" font-size="13.93" fill="#ffffff" xml:space="preserve">EGE: 6</text>
<text x="315.5" y="107.98" font-family="Liberation Mono" font-size="13.93" fill="#ffffff" xml:space="preserve">STA: 6</text>
<text x="0" y="0" transform="translate(149.0,643) rotate(-90) scale(0.88,1)" text-anchor="end" font-family="Liberation Sans" font-size="30.5" fill="#5c5c5c">APR</text>
<text x="0" y="0" transform="translate(294.0,643) rotate(-90) scale(0.88,1)" text-anchor="end" font-family="Liberation Sans" font-size="30.5" fill="#5c5c5c">MAY</text>
<text x="0" y="0" transform="translate(435.8,643) rotate(-90) scale(0.88,1)" text-anchor="end" font-family="Liberation Sans" font-size="30.5" fill="#5c5c5c">JUN</text>
<text x="0" y="0" transform="translate(575.9,643) rotate(-90) scale(0.88,1)" text-anchor="end" font-family="Liberation Sans" font-size="30.5" fill="#5c5c5c">JUL</text>
<text x="0" y="0" transform="translate(722.8,643) rotate(-90) scale(0.88,1)" text-anchor="end" font-family="Liberation Sans" font-size="30.5" fill="#5c5c5c">AUG</text>
<text x="0" y="0" transform="translate(872.0,643) rotate(-90) scale(0.88,1)" text-anchor="end" font-family="Liberation Sans" font-size="30.5" fill="#5c5c5c">SEP</text>
<text x="0" y="0" transform="translate(1015.9,643) rotate(-90) scale(0.88,1)" text-anchor="end" font-family="Liberation Sans" font-size="30.5" fill="#5c5c5c">OCT</text>
<text x="0" y="0" transform="translate(1169.0,643) rotate(-90) scale(0.88,1)" text-anchor="end" font-family="Liberation Sans" font-size="30.5" fill="#5c5c5c">NOV</text>
<text x="0" y="0" transform="translate(1318.0,643) rotate(-90) scale(0.88,1)" text-anchor="end" font-family="Liberation Sans" font-size="30.5" fill="#5c5c5c">DEC</text>
<text x="0" y="0" transform="translate(1469.3,643) rotate(-90) scale(0.88,1)" text-anchor="end" font-family="Liberation Sans" font-size="30.5" fill="#5c5c5c">JAN</text>
<text x="0" y="0" transform="translate(1628.0,643) rotate(-90) scale(0.88,1)" text-anchor="end" font-family="Liberation Sans" font-size="30.5" fill="#5c5c5c">FEB</text>
<text x="0" y="0" transform="translate(1765.8,643) rotate(-90) scale(0.88,1)" text-anchor="end" font-family="Liberation Sans" font-size="30.5" fill="#5c5c5c">MAR</text>
<line x1="987.56" y1="641.5" x2="987.56" y2="842.5" stroke="#ff0000" stroke-width="1.4" stroke-dasharray="5.1 2.2"/>
<line x1="989.33" y1="641.5" x2="989.33" y2="842.5" stroke="#ff0000" stroke-width="1.4" stroke-dasharray="5.1 2.2"/>
<rect x="105.8" y="831.9" width="23.2" height="4.2" fill="#ee82ee"/>
<rect x="165.0" y="831.9" width="180.0" height="4.2" fill="#ee82ee"/>
<rect x="365.8" y="831.9" width="258.9" height="4.2" fill="#ee82ee"/>
<rect x="635.1" y="831.9" width="150.7" height="4.2" fill="#ee82ee"/>
<rect x="807.0" y="831.9" width="92.0" height="4.2" fill="#ee82ee"/>
<rect x="919.8" y="831.9" width="52.9" height="4.2" fill="#ee82ee"/>
<rect x="984.0" y="831.9" width="81.8" height="4.2" fill="#ee82ee"/>
<rect x="1082.2" y="831.9" width="120.8" height="4.2" fill="#ee82ee"/>
<rect x="1244.0" y="831.9" width="82.0" height="4.2" fill="#ee82ee"/>
<rect x="1337.0" y="831.9" width="18.0" height="4.2" fill="#ee82ee"/>
<rect x="1381.0" y="831.9" width="63.0" height="4.2" fill="#ee82ee"/>
<rect x="1459.1" y="831.9" width="52.9" height="4.2" fill="#ee82ee"/>
<rect x="1523.0" y="831.9" width="24.0" height="4.2" fill="#ee82ee"/>
<rect x="1724.0" y="831.9" width="24.0" height="4.2" fill="#ee82ee"/>
<rect x="1758.0" y="831.9" width="23.9" height="4.2" fill="#ee82ee"/>
<rect x="165.0" y="815.6" width="23.0" height="4.2" fill="#dd11f4"/>
<rect x="222.9" y="815.6" width="62.8" height="4.2" fill="#dd11f4"/>
<rect x="312.0" y="815.6" width="28.0" height="4.2" fill="#dd11f4"/>
<rect x="365.8" y="815.6" width="125.9" height="4.2" fill="#dd11f4"/>
<rect x="508.2" y="815.6" width="145.8" height="4.2" fill="#dd11f4"/>
<rect x="704.0" y="815.6" width="32.9" height="4.2" fill="#dd11f4"/>
<rect x="773.0" y="815.6" width="71.8" height="4.2" fill="#dd11f4"/>
<rect x="871.0" y="815.6" width="116.8" height="4.2" fill="#dd11f4"/>
<rect x="1002.9" y="815.6" width="13.8" height="4.2" fill="#dd11f4"/>
<rect x="1062.0" y="815.6" width="151.0" height="4.2" fill="#dd11f4"/>
<rect x="1244.0" y="815.6" width="23.0" height="4.2" fill="#dd11f4"/>
<rect x="1293.0" y="815.6" width="23.0" height="4.2" fill="#dd11f4"/>
<rect x="1342.0" y="815.6" width="23.0" height="4.2" fill="#dd11f4"/>
<rect x="1386.0" y="815.6" width="43.0" height="4.2" fill="#dd11f4"/>
<rect x="1459.1" y="815.6" width="23.8" height="4.2" fill="#dd11f4"/>
<rect x="1548.0" y="815.6" width="23.0" height="4.2" fill="#dd11f4"/>
<rect x="165.0" y="799.3" width="23.0" height="4.2" fill="#ff1e00"/>
<rect x="257.8" y="799.3" width="229.2" height="4.2" fill="#ff1e00"/>
<rect x="508.2" y="799.3" width="106.7" height="4.2" fill="#ff1e00"/>
<rect x="625.8" y="799.3" width="92.0" height="4.2" fill="#ff1e00"/>
<rect x="729.0" y="799.3" width="96.9" height="4.2" fill="#ff1e00"/>
<rect x="949.0" y="799.3" width="200.0" height="4.2" fill="#ff1e00"/>
<rect x="1160.0" y="799.3" width="88.0" height="4.2" fill="#ff1e00"/>
<rect x="1258.0" y="799.3" width="186.0" height="4.2" fill="#ff1e00"/>
<rect x="1459.1" y="799.3" width="23.8" height="4.2" fill="#ff1e00"/>
<rect x="1552.2" y="799.3" width="24.0" height="4.2" fill="#ff1e00"/>
<rect x="194.0" y="783.0" width="24.2" height="4.2" fill="#ffb012"/>
<rect x="320.8" y="783.0" width="186.0" height="4.2" fill="#ffb012"/>
<rect x="518.0" y="783.0" width="22.8" height="4.2" fill="#ffb012"/>
<rect x="556.9" y="783.0" width="126.0" height="4.2" fill="#ffb012"/>
<rect x="807.0" y="783.0" width="24.0" height="4.2" fill="#ffb012"/>
<rect x="954.2" y="783.0" width="18.5" height="4.2" fill="#ffb012"/>
<rect x="987.8" y="783.0" width="137.2" height="4.2" fill="#ffb012"/>
<rect x="1155.0" y="783.0" width="63.0" height="4.2" fill="#ffb012"/>
<rect x="1244.0" y="783.0" width="23.0" height="4.2" fill="#ffb012"/>
<rect x="1317.0" y="783.0" width="24.0" height="4.2" fill="#ffb012"/>
<rect x="1396.0" y="783.0" width="23.0" height="4.2" fill="#ffb012"/>
<rect x="1464.0" y="783.0" width="185.9" height="4.2" fill="#ffb012"/>
<rect x="340.8" y="766.7" width="29.2" height="4.2" fill="#ffee00"/>
<rect x="409.9" y="766.7" width="38.1" height="4.2" fill="#ffee00"/>
<rect x="468.9" y="766.7" width="22.8" height="4.2" fill="#ffee00"/>
<rect x="527.0" y="766.7" width="19.0" height="4.2" fill="#ffee00"/>
<rect x="562.0" y="766.7" width="28.0" height="4.2" fill="#ffee00"/>
<rect x="616.0" y="766.7" width="32.9" height="4.2" fill="#ffee00"/>
<rect x="959.0" y="766.7" width="28.8" height="4.2" fill="#ffee00"/>
<rect x="1062.0" y="766.7" width="23.6" height="4.2" fill="#ffee00"/>
<rect x="1101.0" y="766.7" width="24.0" height="4.2" fill="#ffee00"/>
<rect x="1160.0" y="766.7" width="34.0" height="4.2" fill="#ffee00"/>
<rect x="1248.0" y="766.7" width="24.0" height="4.2" fill="#ffee00"/>
<rect x="1425.1" y="766.7" width="86.9" height="4.2" fill="#ffee00"/>
<rect x="420.0" y="750.4" width="23.0" height="4.2" fill="#a8f222"/>
<rect x="531.8" y="750.4" width="24.2" height="4.2" fill="#a8f222"/>
<rect x="566.9" y="750.4" width="23.1" height="4.2" fill="#a8f222"/>
<rect x="621.0" y="750.4" width="121.0" height="4.2" fill="#a8f222"/>
<rect x="968.9" y="750.4" width="166.1" height="4.2" fill="#a8f222"/>
<rect x="1185.0" y="750.4" width="161.0" height="4.2" fill="#a8f222"/>
<rect x="1469.0" y="750.4" width="24.0" height="4.2" fill="#a8f222"/>
<rect x="429.0" y="734.1" width="23.8" height="4.2" fill="#5ccc08"/>
<rect x="576.0" y="734.1" width="157.0" height="4.2" fill="#5ccc08"/>
<rect x="992.9" y="734.1" width="112.0" height="4.2" fill="#5ccc08"/>
<rect x="1116.0" y="734.1" width="107.0" height="4.2" fill="#5ccc08"/>
<rect x="1263.0" y="734.1" width="29.0" height="4.2" fill="#5ccc08"/>
<rect x="1489.0" y="734.1" width="23.0" height="4.2" fill="#5ccc08"/>
<rect x="590.9" y="717.8" width="24.0" height="4.2" fill="#00f27a"/>
<rect x="655.0" y="717.8" width="117.0" height="4.2" fill="#00f27a"/>
<rect x="1071.8" y="717.8" width="171.2" height="4.2" fill="#00f27a"/>
<rect x="1263.0" y="717.8" width="24.0" height="4.2" fill="#00f27a"/>
<rect x="596.0" y="701.5" width="137.0" height="4.2" fill="#00dcff"/>
<rect x="1090.7" y="701.5" width="29.3" height="4.2" fill="#00dcff"/>
<rect x="1199.0" y="701.5" width="24.0" height="4.2" fill="#00dcff"/>
<rect x="1273.0" y="701.5" width="53.0" height="4.2" fill="#00dcff"/>
<rect x="1111.0" y="685.2" width="24.0" height="4.2" fill="#0414d0"/>
<line x1="74.0" y1="643.0" x2="74.0" y2="842.5" stroke="#ffffff" stroke-opacity="0.5" stroke-width="1.8" stroke-dasharray="1.8 3.8"/>
<line x1="218.0" y1="643.0" x2="218.0" y2="842.5" stroke="#ffffff" stroke-opacity="0.5" stroke-width="1.8" stroke-dasharray="1.8 3.8"/>
<line x1="364.0" y1="643.0" x2="364.0" y2="842.5" stroke="#ffffff" stroke-opacity="0.5" stroke-width="1.8" stroke-dasharray="1.8 3.8"/>
<line x1="505.0" y1="643.0" x2="505.0" y2="842.5" stroke="#ffffff" stroke-opacity="0.5" stroke-width="1.8" stroke-dasharray="1.8 3.8"/>
<line x1="649.8" y1="643.0" x2="649.8" y2="842.5" stroke="#ffffff" stroke-opacity="0.5" stroke-width="1.8" stroke-dasharray="1.8 3.8"/>
<line x1="797.0" y1="643.0" x2="797.0" y2="842.5" stroke="#ffffff" stroke-opacity="0.5" stroke-width="1.8" stroke-dasharray="1.8 3.8"/>
<line x1="940.2" y1="643.0" x2="940.2" y2="842.5" stroke="#ffffff" stroke-opacity="0.5" stroke-width="1.8" stroke-dasharray="1.8 3.8"/>
<line x1="1090.7" y1="643.0" x2="1090.7" y2="842.5" stroke="#ffffff" stroke-opacity="0.5" stroke-width="1.8" stroke-dasharray="1.8 3.8"/>
<line x1="1239.0" y1="643.0" x2="1239.0" y2="842.5" stroke="#ffffff" stroke-opacity="0.5" stroke-width="1.8" stroke-dasharray="1.8 3.8"/>
<line x1="1394.0" y1="643.0" x2="1394.0" y2="842.5" stroke="#ffffff" stroke-opacity="0.5" stroke-width="1.8" stroke-dasharray="1.8 3.8"/>
<line x1="1548.0" y1="643.0" x2="1548.0" y2="842.5" stroke="#ffffff" stroke-opacity="0.5" stroke-width="1.8" stroke-dasharray="1.8 3.8"/>
<line x1="1687.0" y1="643.0" x2="1687.0" y2="842.5" stroke="#ffffff" stroke-opacity="0.5" stroke-width="1.8" stroke-dasharray="1.8 3.8"/>
<text x="117.4" y="831.3" text-anchor="middle" font-family="Liberation Sans" font-size="10.3" textLength="18.69" lengthAdjust="spacingAndGlyphs" fill="#ffffff">KSE</text>
<text x="255.0" y="831.3" text-anchor="middle" font-family="Liberation Sans" font-size="10.3" textLength="18.73" lengthAdjust="spacingAndGlyphs" fill="#ffffff">ETA</text>
<text x="495.2" y="831.3" text-anchor="middle" font-family="Liberation Sans" font-size="10.3" textLength="20.72" lengthAdjust="spacingAndGlyphs" fill="#ffffff">NZC</text>
<text x="710.5" y="831.3" text-anchor="middle" font-family="Liberation Sans" font-size="10.3" textLength="21.40" lengthAdjust="spacingAndGlyphs" fill="#ffffff">NDA</text>
<text x="853.0" y="831.3" text-anchor="middle" font-family="Liberation Sans" font-size="10.3" textLength="18.17" lengthAdjust="spacingAndGlyphs" fill="#ffffff">SPE</text>
<text x="946.2" y="831.3" text-anchor="middle" font-family="Liberation Sans" font-size="10.3" textLength="20.89" lengthAdjust="spacingAndGlyphs" fill="#ffffff">ARD</text>
<text x="1024.9" y="831.3" text-anchor="middle" font-family="Liberation Sans" font-size="10.3" textLength="19.78" lengthAdjust="spacingAndGlyphs" fill="#ffffff">EGE</text>
<text x="1142.6" y="831.3" text-anchor="middle" font-family="Liberation Sans" font-size="10.3" textLength="19.86" lengthAdjust="spacingAndGlyphs" fill="#ffffff">NTA</text>
<text x="1285.0" y="831.3" text-anchor="middle" font-family="Liberation Sans" font-size="10.3" textLength="23.31" lengthAdjust="spacingAndGlyphs" fill="#ffffff">MON</text>
<text x="1343.6" y="831.3" text-anchor="middle" font-family="Liberation Sans" font-size="10.3" textLength="20.04" lengthAdjust="spacingAndGlyphs" fill="#ffffff">URS</text>
<text x="1412.5" y="831.3" text-anchor="middle" font-family="Liberation Sans" font-size="10.3" textLength="19.90" lengthAdjust="spacingAndGlyphs" fill="#ffffff">AHY</text>
<text x="1485.5" y="831.3" text-anchor="middle" font-family="Liberation Sans" font-size="10.3" textLength="22.99" lengthAdjust="spacingAndGlyphs" fill="#ffffff">GUM</text>
<text x="1535.0" y="831.3" text-anchor="middle" font-family="Liberation Sans" font-size="10.3" textLength="20.90" lengthAdjust="spacingAndGlyphs" fill="#ffffff">OHY</text>
<text x="1736.0" y="831.3" text-anchor="middle" font-family="Liberation Sans" font-size="10.3" textLength="20.11" lengthAdjust="spacingAndGlyphs" fill="#ffffff">XHE</text>
<text x="1770.0" y="831.3" text-anchor="middle" font-family="Liberation Sans" font-size="10.3" textLength="15.66" lengthAdjust="spacingAndGlyphs" fill="#ffffff">EVI</text>
<text x="176.5" y="815.0" text-anchor="middle" font-family="Liberation Sans" font-size="10.3" textLength="19.97" lengthAdjust="spacingAndGlyphs" fill="#ffffff">AVB</text>
<text x="254.3" y="815.0" text-anchor="middle" font-family="Liberation Sans" font-size="10.3" textLength="17.49" lengthAdjust="spacingAndGlyphs" fill="#ffffff">ELY</text>
<text x="323.7" y="815.0" text-anchor="middle" font-family="Liberation Sans" font-size="10.3" textLength="21.82" lengthAdjust="spacingAndGlyphs" fill="#ffffff">CAM</text>
<text x="431.5" y="815.0" text-anchor="middle" font-family="Liberation Sans" font-size="10.3" textLength="19.83" lengthAdjust="spacingAndGlyphs" fill="#ffffff">SSG</text>
<text x="578.5" y="815.0" text-anchor="middle" font-family="Liberation Sans" font-size="10.3" textLength="19.30" lengthAdjust="spacingAndGlyphs" fill="#ffffff">PCA</text>
<text x="720.5" y="815.0" text-anchor="middle" font-family="Liberation Sans" font-size="10.3" textLength="21.25" lengthAdjust="spacingAndGlyphs" fill="#ffffff">AUD</text>
<text x="808.9" y="815.0" text-anchor="middle" font-family="Liberation Sans" font-size="10.3" textLength="20.52" lengthAdjust="spacingAndGlyphs" fill="#ffffff">AUR</text>
<text x="931.1" y="815.0" text-anchor="middle" font-family="Liberation Sans" font-size="10.3" textLength="20.31" lengthAdjust="spacingAndGlyphs" fill="#ffffff">DSX</text>
<text x="1009.8" y="815.0" text-anchor="middle" font-family="Liberation Sans" font-size="10.3" textLength="21.55" lengthAdjust="spacingAndGlyphs" fill="#ffffff">OCU</text>
<text x="1137.5" y="815.0" text-anchor="middle" font-family="Liberation Sans" font-size="10.3" textLength="20.55" lengthAdjust="spacingAndGlyphs" fill="#ffffff">OER</text>
<text x="1255.5" y="815.0" text-anchor="middle" font-family="Liberation Sans" font-size="10.3" textLength="21.34" lengthAdjust="spacingAndGlyphs" fill="#ffffff">DKD</text>
<text x="1304.5" y="815.0" text-anchor="middle" font-family="Liberation Sans" font-size="10.3" textLength="20.30" lengthAdjust="spacingAndGlyphs" fill="#ffffff">DSV</text>
<text x="1353.5" y="815.0" text-anchor="middle" font-family="Liberation Sans" font-size="10.3" textLength="18.00" lengthAdjust="spacingAndGlyphs" fill="#ffffff">ALY</text>
<text x="1407.5" y="815.0" text-anchor="middle" font-family="Liberation Sans" font-size="10.3" textLength="14.42" lengthAdjust="spacingAndGlyphs" fill="#ffffff">JLE</text>
<text x="1471.0" y="815.0" text-anchor="middle" font-family="Liberation Sans" font-size="10.3" textLength="19.74" lengthAdjust="spacingAndGlyphs" fill="#ffffff">SCC</text>
<text x="1559.5" y="815.0" text-anchor="middle" font-family="Liberation Sans" font-size="10.3" textLength="18.38" lengthAdjust="spacingAndGlyphs" fill="#ffffff">FEV</text>
<text x="176.5" y="798.7" text-anchor="middle" font-family="Liberation Sans" font-size="10.3" textLength="18.11" lengthAdjust="spacingAndGlyphs" fill="#ffffff">LYR</text>
<text x="372.4" y="798.7" text-anchor="middle" font-family="Liberation Sans" font-size="10.3" textLength="18.04" lengthAdjust="spacingAndGlyphs" fill="#ffffff">JMC</text>
<text x="558.7" y="798.7" text-anchor="middle" font-family="Liberation Sans" font-size="10.3" textLength="14.87" lengthAdjust="spacingAndGlyphs" fill="#ffffff">JPE</text>
<text x="671.8" y="798.7" text-anchor="middle" font-family="Liberation Sans" font-size="10.3" textLength="19.63" lengthAdjust="spacingAndGlyphs" fill="#ffffff">PAU</text>
<text x="774.0" y="798.7" text-anchor="middle" font-family="Liberation Sans" font-size="10.3" textLength="16.79" lengthAdjust="spacingAndGlyphs" fill="#ffffff">NIA</text>
<text x="1049.0" y="798.7" text-anchor="middle" font-family="Liberation Sans" font-size="10.3" textLength="18.76" lengthAdjust="spacingAndGlyphs" fill="#ffffff">STA</text>
<text x="1204.0" y="798.7" text-anchor="middle" font-family="Liberation Sans" font-size="10.3" textLength="22.57" lengthAdjust="spacingAndGlyphs" fill="#ffffff">NOO</text>
<text x="1353.6" y="798.7" text-anchor="middle" font-family="Liberation Sans" font-size="10.3" textLength="22.82" lengthAdjust="spacingAndGlyphs" fill="#ffffff">COM</text>
<text x="1471.0" y="798.7" text-anchor="middle" font-family="Liberation Sans" font-size="10.3" textLength="20.84" lengthAdjust="spacingAndGlyphs" fill="#ffffff">NCC</text>
<text x="1564.2" y="798.7" text-anchor="middle" font-family="Liberation Sans" font-size="10.3" textLength="19.22" lengthAdjust="spacingAndGlyphs" fill="#ffffff">FED</text>
<text x="206.1" y="782.4" text-anchor="middle" font-family="Liberation Sans" font-size="10.3" textLength="16.82" lengthAdjust="spacingAndGlyphs" fill="#ffffff">HVI</text>
<text x="412.0" y="782.4" text-anchor="middle" font-family="Liberation Sans" font-size="10.3" textLength="16.27" lengthAdjust="spacingAndGlyphs" fill="#ffffff">ARI</text>
<text x="529.4" y="782.4" text-anchor="middle" font-family="Liberation Sans" font-size="10.3" textLength="19.62" lengthAdjust="spacingAndGlyphs" fill="#ffffff">SZC</text>
<text x="617.7" y="782.4" text-anchor="middle" font-family="Liberation Sans" font-size="10.3" textLength="19.30" lengthAdjust="spacingAndGlyphs" fill="#ffffff">CAP</text>
<text x="819.0" y="782.4" text-anchor="middle" font-family="Liberation Sans" font-size="10.3" textLength="20.53" lengthAdjust="spacingAndGlyphs" fill="#ffffff">NUE</text>
<text x="961.3" y="782.4" text-anchor="middle" font-family="Liberation Sans" font-size="10.3" textLength="20.37" lengthAdjust="spacingAndGlyphs" fill="#ffffff">OCT</text>
<text x="1059.6" y="782.4" text-anchor="middle" font-family="Liberation Sans" font-size="10.3" textLength="17.27" lengthAdjust="spacingAndGlyphs" fill="#ffffff">ORI</text>
<text x="1186.5" y="782.4" text-anchor="middle" font-family="Liberation Sans" font-size="10.3" textLength="22.69" lengthAdjust="spacingAndGlyphs" fill="#ffffff">AMO</text>
<text x="1255.5" y="782.4" text-anchor="middle" font-family="Liberation Sans" font-size="10.3" textLength="20.13" lengthAdjust="spacingAndGlyphs" fill="#ffffff">DPC</text>
<text x="1329.0" y="782.4" text-anchor="middle" font-family="Liberation Sans" font-size="10.3" textLength="16.17" lengthAdjust="spacingAndGlyphs" fill="#ffffff">XVI</text>
<text x="1407.5" y="782.4" text-anchor="middle" font-family="Liberation Sans" font-size="10.3" textLength="21.41" lengthAdjust="spacingAndGlyphs" fill="#ffffff">QUA</text>
<text x="1559.4" y="782.4" text-anchor="middle" font-family="Liberation Sans" font-size="10.3" textLength="20.57" lengthAdjust="spacingAndGlyphs" fill="#ffffff">AAN</text>
<text x="352.7" y="766.1" text-anchor="middle" font-family="Liberation Sans" font-size="10.3" textLength="19.90" lengthAdjust="spacingAndGlyphs" fill="#ffffff">TAH</text>
<text x="431.5" y="766.1" text-anchor="middle" font-family="Liberation Sans" font-size="10.3" textLength="15.66" lengthAdjust="spacingAndGlyphs" fill="#ffffff">JEA</text>
<text x="480.3" y="766.1" text-anchor="middle" font-family="Liberation Sans" font-size="10.3" textLength="11.59" lengthAdjust="spacingAndGlyphs" fill="#ffffff">JIP</text>
<text x="538.6" y="766.1" text-anchor="middle" font-family="Liberation Sans" font-size="10.3" textLength="17.89" lengthAdjust="spacingAndGlyphs" fill="#ffffff">PPS</text>
<text x="578.5" y="766.1" text-anchor="middle" font-family="Liberation Sans" font-size="10.3" textLength="19.62" lengthAdjust="spacingAndGlyphs" fill="#ffffff">ZCS</text>
<text x="632.5" y="766.1" text-anchor="middle" font-family="Liberation Sans" font-size="10.3" textLength="21.73" lengthAdjust="spacingAndGlyphs" fill="#ffffff">GDR</text>
<text x="970.3" y="766.1" text-anchor="middle" font-family="Liberation Sans" font-size="10.3" textLength="20.89" lengthAdjust="spacingAndGlyphs" fill="#ffffff">DRA</text>
<text x="1073.8" y="766.1" text-anchor="middle" font-family="Liberation Sans" font-size="10.3" textLength="20.92" lengthAdjust="spacingAndGlyphs" fill="#ffffff">LUM</text>
<text x="1113.0" y="766.1" text-anchor="middle" font-family="Liberation Sans" font-size="10.3" textLength="19.73" lengthAdjust="spacingAndGlyphs" fill="#ffffff">RPU</text>
<text x="1177.0" y="766.1" text-anchor="middle" font-family="Liberation Sans" font-size="10.3" textLength="19.90" lengthAdjust="spacingAndGlyphs" fill="#ffffff">THA</text>
<text x="1260.0" y="766.1" text-anchor="middle" font-family="Liberation Sans" font-size="10.3" textLength="19.15" lengthAdjust="spacingAndGlyphs" fill="#ffffff">PSU</text>
<text x="1470.6" y="766.1" text-anchor="middle" font-family="Liberation Sans" font-size="10.3" textLength="20.11" lengthAdjust="spacingAndGlyphs" fill="#ffffff">XCB</text>
<text x="431.5" y="749.8" text-anchor="middle" font-family="Liberation Sans" font-size="10.3" textLength="16.41" lengthAdjust="spacingAndGlyphs" fill="#ffffff">JRC</text>
<text x="543.9" y="749.8" text-anchor="middle" font-family="Liberation Sans" font-size="10.3" textLength="20.71" lengthAdjust="spacingAndGlyphs" fill="#ffffff">CAN</text>
<text x="578.5" y="749.8" text-anchor="middle" font-family="Liberation Sans" font-size="10.3" textLength="19.51" lengthAdjust="spacingAndGlyphs" fill="#ffffff">FAN</text>
<text x="681.5" y="749.8" text-anchor="middle" font-family="Liberation Sans" font-size="10.3" textLength="18.76" lengthAdjust="spacingAndGlyphs" fill="#ffffff">PER</text>
<text x="1049.2" y="749.8" text-anchor="middle" font-family="Liberation Sans" font-size="10.3" textLength="19.37" lengthAdjust="spacingAndGlyphs" fill="#ffffff">CTA</text>
<text x="1265.5" y="749.8" text-anchor="middle" font-family="Liberation Sans" font-size="10.3" textLength="20.73" lengthAdjust="spacingAndGlyphs" fill="#ffffff">HYD</text>
<text x="1481.0" y="749.8" text-anchor="middle" font-family="Liberation Sans" font-size="10.3" textLength="22.16" lengthAdjust="spacingAndGlyphs" fill="#ffffff">XUM</text>
<text x="440.9" y="733.5" text-anchor="middle" font-family="Liberation Sans" font-size="10.3" textLength="21.19" lengthAdjust="spacingAndGlyphs" fill="#ffffff">COR</text>
<text x="657.0" y="733.5" text-anchor="middle" font-family="Liberation Sans" font-size="10.3" textLength="20.30" lengthAdjust="spacingAndGlyphs" fill="#ffffff">SDA</text>
<text x="1048.9" y="733.5" text-anchor="middle" font-family="Liberation Sans" font-size="10.3" textLength="16.67" lengthAdjust="spacingAndGlyphs" fill="#ffffff">LMI</text>
<text x="1166.6" y="733.5" text-anchor="middle" font-family="Liberation Sans" font-size="10.3" textLength="19.21" lengthAdjust="spacingAndGlyphs" fill="#ffffff">LEO</text>
<text x="1274.6" y="733.5" text-anchor="middle" font-family="Liberation Sans" font-size="10.3" textLength="19.39" lengthAdjust="spacingAndGlyphs" fill="#ffffff">EHY</text>
<text x="1500.5" y="733.5" text-anchor="middle" font-family="Liberation Sans" font-size="10.3" textLength="19.58" lengthAdjust="spacingAndGlyphs" fill="#ffffff">ECV</text>
<text x="602.9" y="717.2" text-anchor="middle" font-family="Liberation Sans" font-size="10.3" textLength="16.17" lengthAdjust="spacingAndGlyphs" fill="#ffffff">JXA</text>
<text x="715.0" y="717.2" text-anchor="middle" font-family="Liberation Sans" font-size="10.3" textLength="20.66" lengthAdjust="spacingAndGlyphs" fill="#ffffff">KCG</text>
<text x="1157.4" y="717.2" text-anchor="middle" font-family="Liberation Sans" font-size="10.3" textLength="21.40" lengthAdjust="spacingAndGlyphs" fill="#ffffff">AND</text>
<text x="1275.0" y="717.2" text-anchor="middle" font-family="Liberation Sans" font-size="10.3" textLength="21.62" lengthAdjust="spacingAndGlyphs" fill="#ffffff">DAD</text>
<text x="666.8" y="700.9" text-anchor="middle" font-family="Liberation Sans" font-size="10.3" textLength="15.76" lengthAdjust="spacingAndGlyphs" fill="#ffffff">ERI</text>
<text x="1109.0" y="700.9" text-anchor="middle" font-family="Liberation Sans" font-size="10.3" textLength="19.07" lengthAdjust="spacingAndGlyphs" fill="#ffffff">SLD</text>
<text x="1211.0" y="700.9" text-anchor="middle" font-family="Liberation Sans" font-size="10.3" textLength="20.57" lengthAdjust="spacingAndGlyphs" fill="#ffffff">ORS</text>
<text x="1299.5" y="700.9" text-anchor="middle" font-family="Liberation Sans" font-size="10.3" textLength="22.02" lengthAdjust="spacingAndGlyphs" fill="#ffffff">GEM</text>
<text x="1123.0" y="684.6" text-anchor="middle" font-family="Liberation Sans" font-size="10.3" textLength="21.87" lengthAdjust="spacingAndGlyphs" fill="#ffffff">KUM</text>
<path d="M113.0 834.0H121.0M117.0 830.0V838.0" stroke="#ffffff" stroke-width="2"/>
<path d="M240.7 834.0H248.7M244.7 830.0V838.0" stroke="#ffffff" stroke-width="2"/>
<path d="M510.8 834.0H518.8M514.8 830.0V838.0" stroke="#ffffff" stroke-width="2"/>
<path d="M706.9 834.0H714.9M710.9 830.0V838.0" stroke="#ffffff" stroke-width="2"/>
<path d="M832.7 834.0H840.7M836.7 830.0V838.0" stroke="#ffffff" stroke-width="2"/>
<path d="M962.0 834.0H970.0M966.0 830.0V838.0" stroke="#ffffff" stroke-width="2"/>
<path d="M985.3 834.0H993.3M989.3 830.0V838.0" stroke="#ffffff" stroke-width="2"/>
<path d="M1115.6 834.0H1123.6M1119.6 830.0V838.0" stroke="#ffffff" stroke-width="2"/>
<path d="M1294.6 834.0H1302.6M1298.6 830.0V838.0" stroke="#ffffff" stroke-width="2"/>
<path d="M1341.6 834.0H1349.6M1345.6 830.0V838.0" stroke="#ffffff" stroke-width="2"/>
<path d="M1412.6 834.0H1420.6M1416.6 830.0V838.0" stroke="#ffffff" stroke-width="2"/>
<path d="M1481.7 834.0H1489.7M1485.7 830.0V838.0" stroke="#ffffff" stroke-width="2"/>
<path d="M1530.8 834.0H1538.8M1534.8 830.0V838.0" stroke="#ffffff" stroke-width="2"/>
<path d="M1731.8 834.0H1739.8M1735.8 830.0V838.0" stroke="#ffffff" stroke-width="2"/>
<path d="M1765.9 834.0H1773.9M1769.9 830.0V838.0" stroke="#ffffff" stroke-width="2"/>
<path d="M171.8 817.7H179.8M175.8 813.7V821.7" stroke="#ffffff" stroke-width="2"/>
<path d="M256.0 817.7H264.0M260.0 813.7V821.7" stroke="#ffffff" stroke-width="2"/>
<path d="M322.8 817.7H330.8M326.8 813.7V821.7" stroke="#ffffff" stroke-width="2"/>
<path d="M436.8 817.7H444.8M440.8 813.7V821.7" stroke="#ffffff" stroke-width="2"/>
<path d="M599.0 817.7H607.0M603.0 813.7V821.7" stroke="#ffffff" stroke-width="2"/>
<path d="M716.7 817.7H724.7M720.7 813.7V821.7" stroke="#ffffff" stroke-width="2"/>
<path d="M792.6 817.7H800.6M796.6 813.7V821.7" stroke="#ffffff" stroke-width="2"/>
<path d="M938.8 817.7H946.8M942.8 813.7V821.7" stroke="#ffffff" stroke-width="2"/>
<path d="M1005.9 817.7H1013.9M1009.9 813.7V821.7" stroke="#ffffff" stroke-width="2"/>
<path d="M1152.6 817.7H1160.6M1156.6 813.7V821.7" stroke="#ffffff" stroke-width="2"/>
<path d="M1250.6 817.7H1258.6M1254.6 813.7V821.7" stroke="#ffffff" stroke-width="2"/>
<path d="M1299.6 817.7H1307.6M1303.6 813.7V821.7" stroke="#ffffff" stroke-width="2"/>
<path d="M1348.6 817.7H1356.6M1352.6 813.7V821.7" stroke="#ffffff" stroke-width="2"/>
<path d="M1402.6 817.7H1410.6M1406.6 813.7V821.7" stroke="#ffffff" stroke-width="2"/>
<path d="M1466.6 817.7H1474.6M1470.6 813.7V821.7" stroke="#ffffff" stroke-width="2"/>
<path d="M1554.8 817.7H1562.8M1558.8 813.7V821.7" stroke="#ffffff" stroke-width="2"/>
<path d="M173.9 801.4H181.9M177.9 797.4V805.4" stroke="#ffffff" stroke-width="2"/>
<path d="M378.0 801.4H386.0M382.0 797.4V805.4" stroke="#ffffff" stroke-width="2"/>
<path d="M544.8 801.4H552.8M548.8 797.4V805.4" stroke="#ffffff" stroke-width="2"/>
<path d="M681.7 801.4H689.7M685.7 797.4V805.4" stroke="#ffffff" stroke-width="2"/>
<path d="M740.8 801.4H748.8M744.8 797.4V805.4" stroke="#ffffff" stroke-width="2"/>
<path d="M1074.8 801.4H1082.8M1078.8 797.4V805.4" stroke="#ffffff" stroke-width="2"/>
<path d="M1216.6 801.4H1224.6M1220.6 797.4V805.4" stroke="#ffffff" stroke-width="2"/>
<path d="M1304.6 801.4H1312.6M1308.6 797.4V805.4" stroke="#ffffff" stroke-width="2"/>
<path d="M1466.6 801.4H1474.6M1470.6 797.4V805.4" stroke="#ffffff" stroke-width="2"/>
<path d="M1560.0 801.4H1568.0M1564.0 797.4V805.4" stroke="#ffffff" stroke-width="2"/>
<path d="M201.8 785.1H209.8M205.8 781.1V789.1" stroke="#ffffff" stroke-width="2"/>
<path d="M399.7 785.1H407.7M403.7 781.1V789.1" stroke="#ffffff" stroke-width="2"/>
<path d="M525.0 785.1H533.0M529.0 781.1V789.1" stroke="#ffffff" stroke-width="2"/>
<path d="M638.8 785.1H646.8M642.8 781.1V789.1" stroke="#ffffff" stroke-width="2"/>
<path d="M814.7 785.1H822.7M818.7 781.1V789.1" stroke="#ffffff" stroke-width="2"/>
<path d="M958.8 785.1H966.8M962.8 781.1V789.1" stroke="#ffffff" stroke-width="2"/>
<path d="M1039.5 785.1H1047.5M1043.5 781.1V789.1" stroke="#ffffff" stroke-width="2"/>
<path d="M1187.6 785.1H1195.6M1191.6 781.1V789.1" stroke="#ffffff" stroke-width="2"/>
<path d="M1250.6 785.1H1258.6M1254.6 781.1V789.1" stroke="#ffffff" stroke-width="2"/>
<path d="M1324.6 785.1H1332.6M1328.6 781.1V789.1" stroke="#ffffff" stroke-width="2"/>
<path d="M1402.6 785.1H1410.6M1406.6 781.1V789.1" stroke="#ffffff" stroke-width="2"/>
<path d="M1545.8 785.1H1553.8M1549.8 781.1V789.1" stroke="#ffffff" stroke-width="2"/>
<path d="M356.0 768.8H364.0M360.0 764.8V772.8" stroke="#ffffff" stroke-width="2"/>
<path d="M425.7 768.8H433.7M429.7 764.8V772.8" stroke="#ffffff" stroke-width="2"/>
<path d="M475.8 768.8H483.8M479.8 764.8V772.8" stroke="#ffffff" stroke-width="2"/>
<path d="M535.0 768.8H543.0M539.0 764.8V772.8" stroke="#ffffff" stroke-width="2"/>
<path d="M570.8 768.8H578.8M574.8 764.8V772.8" stroke="#ffffff" stroke-width="2"/>
<path d="M630.7 768.8H638.7M634.7 764.8V772.8" stroke="#ffffff" stroke-width="2"/>
<path d="M973.8 768.8H981.8M977.8 764.8V772.8" stroke="#ffffff" stroke-width="2"/>
<path d="M1069.7 768.8H1077.7M1073.7 764.8V772.8" stroke="#ffffff" stroke-width="2"/>
<path d="M1108.6 768.8H1116.6M1112.6 764.8V772.8" stroke="#ffffff" stroke-width="2"/>
<path d="M1177.6 768.8H1185.6M1181.6 764.8V772.8" stroke="#ffffff" stroke-width="2"/>
<path d="M1255.6 768.8H1263.6M1259.6 764.8V772.8" stroke="#ffffff" stroke-width="2"/>
<path d="M1466.6 768.8H1474.6M1470.6 764.8V772.8" stroke="#ffffff" stroke-width="2"/>
<path d="M426.7 752.5H434.7M430.7 748.5V756.5" stroke="#ffffff" stroke-width="2"/>
<path d="M539.7 752.5H547.7M543.7 748.5V756.5" stroke="#ffffff" stroke-width="2"/>
<path d="M573.5 752.5H581.5M577.5 748.5V756.5" stroke="#ffffff" stroke-width="2"/>
<path d="M703.8 752.5H711.8M707.8 748.5V756.5" stroke="#ffffff" stroke-width="2"/>
<path d="M1093.9 752.5H1101.9M1097.9 748.5V756.5" stroke="#ffffff" stroke-width="2"/>
<path d="M1270.6 752.5H1278.6M1274.6 748.5V756.5" stroke="#ffffff" stroke-width="2"/>
<path d="M1476.4 752.5H1484.4M1480.4 748.5V756.5" stroke="#ffffff" stroke-width="2"/>
<path d="M436.8 736.2H444.8M440.8 732.2V740.2" stroke="#ffffff" stroke-width="2"/>
<path d="M630.7 736.2H638.7M634.7 732.2V740.2" stroke="#ffffff" stroke-width="2"/>
<path d="M1038.6 736.2H1046.6M1042.6 732.2V740.2" stroke="#ffffff" stroke-width="2"/>
<path d="M1167.6 736.2H1175.6M1171.6 732.2V740.2" stroke="#ffffff" stroke-width="2"/>
<path d="M1274.6 736.2H1282.6M1278.6 732.2V740.2" stroke="#ffffff" stroke-width="2"/>
<path d="M1496.8 736.2H1504.8M1500.8 732.2V740.2" stroke="#ffffff" stroke-width="2"/>
<path d="M599.0 719.9H607.0M603.0 715.9V723.9" stroke="#ffffff" stroke-width="2"/>
<path d="M727.0 719.9H735.0M731.0 715.9V723.9" stroke="#ffffff" stroke-width="2"/>
<path d="M1187.6 719.9H1195.6M1191.6 715.9V723.9" stroke="#ffffff" stroke-width="2"/>
<path d="M1270.6 719.9H1278.6M1274.6 715.9V723.9" stroke="#ffffff" stroke-width="2"/>
<path d="M686.8 703.6H694.8M690.8 699.6V707.6" stroke="#ffffff" stroke-width="2"/>
<path d="M1101.6 703.6H1109.6M1105.6 699.6V707.6" stroke="#ffffff" stroke-width="2"/>
<path d="M1206.6 703.6H1214.6M1210.6 699.6V707.6" stroke="#ffffff" stroke-width="2"/>
<path d="M1299.6 703.6H1307.6M1303.6 699.6V707.6" stroke="#ffffff" stroke-width="2"/>
<path d="M1118.6 687.3H1126.6M1122.6 683.3V691.3" stroke="#ffffff" stroke-width="2"/>
<rect x="19.5" y="641.5" width="1766.0" height="201.0" fill="none" stroke="#ffffff" stroke-width="1.1"/>
<line x1="19.5" y1="842.5" x2="19.5" y2="847.4" stroke="#ffffff" stroke-width="1.1"/>
<text x="19.5" y="862" text-anchor="middle" font-family="Liberation Sans" font-size="13.9" textLength="8.84" lengthAdjust="spacingAndGlyphs" fill="#ffffff">0</text>
<line x1="264.7" y1="842.5" x2="264.7" y2="847.4" stroke="#ffffff" stroke-width="1.1"/>
<text x="264.7" y="862" text-anchor="middle" font-family="Liberation Sans" font-size="13.9" textLength="17.67" lengthAdjust="spacingAndGlyphs" fill="#ffffff">50</text>
<line x1="509.9" y1="842.5" x2="509.9" y2="847.4" stroke="#ffffff" stroke-width="1.1"/>
<text x="509.9" y="862" text-anchor="middle" font-family="Liberation Sans" font-size="13.9" textLength="26.51" lengthAdjust="spacingAndGlyphs" fill="#ffffff">100</text>
<line x1="755.1" y1="842.5" x2="755.1" y2="847.4" stroke="#ffffff" stroke-width="1.1"/>
<text x="755.1" y="862" text-anchor="middle" font-family="Liberation Sans" font-size="13.9" textLength="26.51" lengthAdjust="spacingAndGlyphs" fill="#ffffff">150</text>
<line x1="1000.4" y1="842.5" x2="1000.4" y2="847.4" stroke="#ffffff" stroke-width="1.1"/>
<text x="1000.4" y="862" text-anchor="middle" font-family="Liberation Sans" font-size="13.9" textLength="26.51" lengthAdjust="spacingAndGlyphs" fill="#ffffff">200</text>
<line x1="1245.6" y1="842.5" x2="1245.6" y2="847.4" stroke="#ffffff" stroke-width="1.1"/>
<text x="1245.6" y="862" text-anchor="middle" font-family="Liberation Sans" font-size="13.9" textLength="26.51" lengthAdjust="spacingAndGlyphs" fill="#ffffff">250</text>
<line x1="1490.8" y1="842.5" x2="1490.8" y2="847.4" stroke="#ffffff" stroke-width="1.1"/>
<text x="1490.8" y="862" text-anchor="middle" font-family="Liberation Sans" font-size="13.9" textLength="26.51" lengthAdjust="spacingAndGlyphs" fill="#ffffff">300</text>
<line x1="1736.0" y1="842.5" x2="1736.0" y2="847.4" stroke="#ffffff" stroke-width="1.1"/>
<text x="1736.0" y="862" text-anchor="middle" font-family="Liberation Sans" font-size="13.9" textLength="26.51" lengthAdjust="spacingAndGlyphs" fill="#ffffff">350</text>
<text x="902.3" y="882" text-anchor="middle" font-family="Liberation Sans" font-size="13.9" textLength="146.69" lengthAdjust="spacingAndGlyphs" fill="#ffffff">Solar longitude (deg)</text>
</svg>
</body></html>
